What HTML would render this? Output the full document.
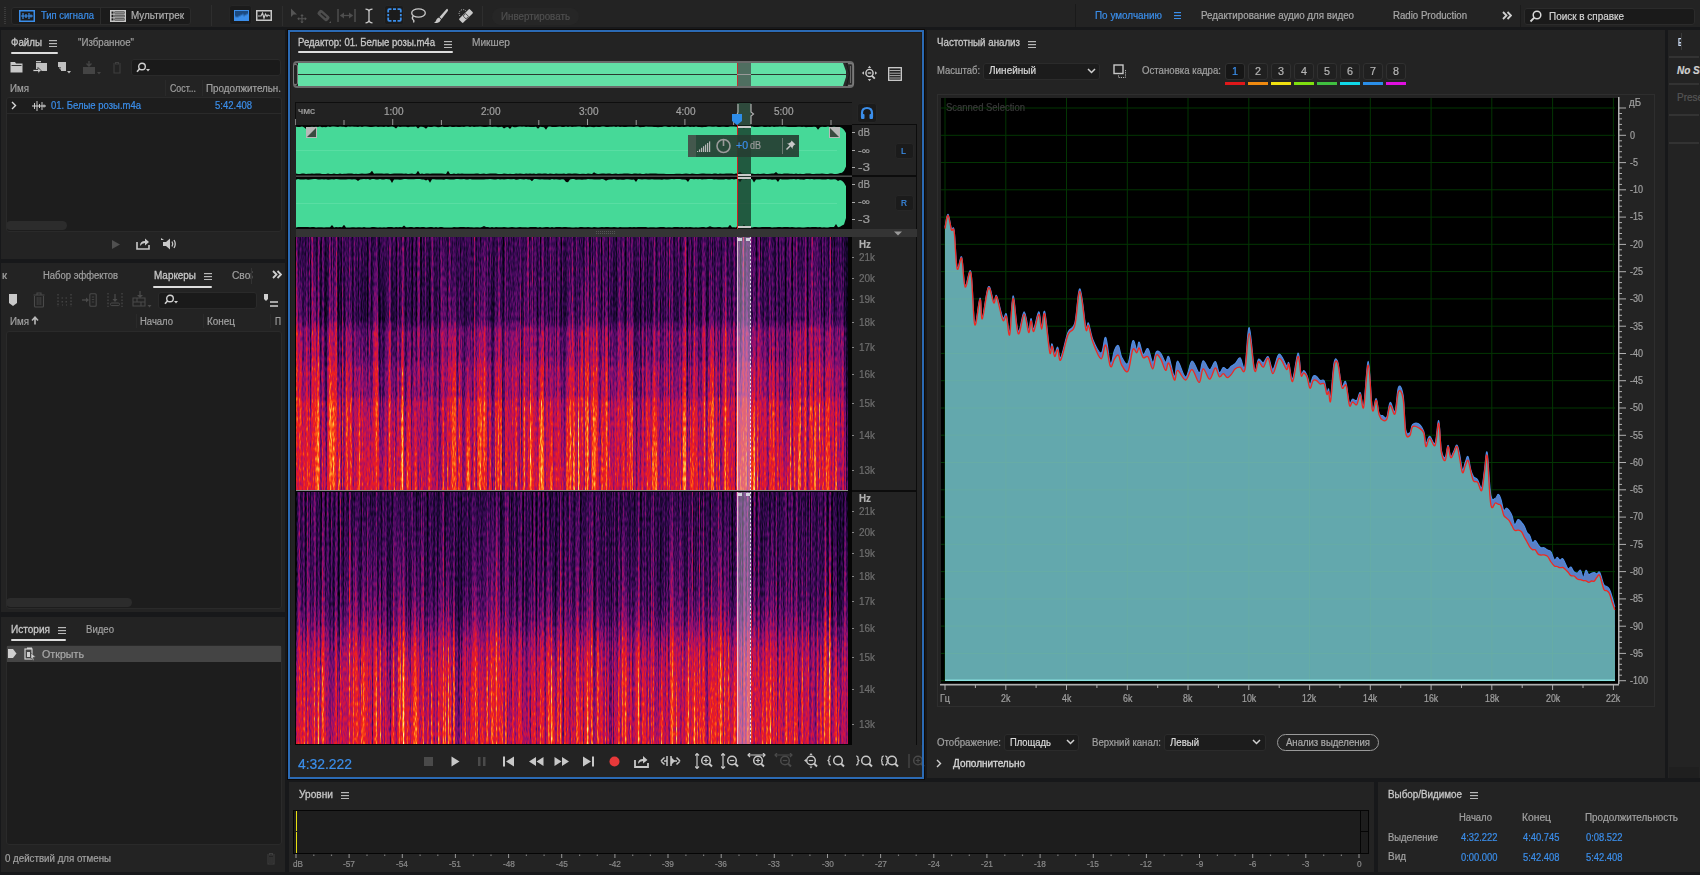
<!DOCTYPE html>
<html><head><meta charset="utf-8">
<style>
*{box-sizing:border-box;margin:0;padding:0}
html,body{width:1700px;height:875px;overflow:hidden;background:#17181a;font-family:"Liberation Sans",sans-serif;font-size:10px;color:#a9a9a9}
.a{position:absolute;display:block}
.t{position:absolute;white-space:nowrap;line-height:1;-webkit-text-stroke:0.2px currentColor}
</style></head><body>
<div class="a" style="left:0px;top:0px;width:1700px;height:27px;background:#232323;"></div>
<svg class="a" style="left:4px;top:7px;" width="3" height="18" viewBox="0 0 3 18"><rect x="0" y="0" width="2" height="1" fill="#3a3a3a"/><rect x="0" y="2" width="2" height="1" fill="#3a3a3a"/><rect x="0" y="4" width="2" height="1" fill="#3a3a3a"/><rect x="0" y="6" width="2" height="1" fill="#3a3a3a"/><rect x="0" y="8" width="2" height="1" fill="#3a3a3a"/><rect x="0" y="10" width="2" height="1" fill="#3a3a3a"/><rect x="0" y="12" width="2" height="1" fill="#3a3a3a"/><rect x="0" y="14" width="2" height="1" fill="#3a3a3a"/><rect x="0" y="16" width="2" height="1" fill="#3a3a3a"/></svg>
<div class="a" style="left:11px;top:7px;width:180px;height:18px;background:#1b1b1b;border:1px solid #2b2b2b;border-radius:3px"></div>
<div class="a" style="left:100px;top:7px;width:1px;height:18px;background:#2b2b2b;"></div>
<svg class="a" style="left:19px;top:10px;" width="16" height="12" viewBox="0 0 16 12"><rect x="0.75" y="0.75" width="14.5" height="10.5" fill="none" stroke="#3b8eea" stroke-width="1.5"/><path d="M2 6 H14 M4 3 v6 M7 4 v4 M10 3 v6 M12 4.5 v3" stroke="#3b8eea" stroke-width="1.2"/></svg>
<div class="t" style="left:41px;top:11.04px;font-size:10px;color:#3b8eea;transform:scaleX(0.9437);transform-origin:0 0;">Тип сигнала</div>
<svg class="a" style="left:110px;top:10px;" width="16" height="12" viewBox="0 0 16 12"><rect x="0.75" y="0.75" width="14.5" height="10.5" fill="none" stroke="#c8c8c8" stroke-width="1.5"/><path d="M1 4.2 H15 M1 7.8 H15 M4 1 V11" stroke="#c8c8c8" stroke-width="1"/><rect x="5" y="2" width="9" height="1.6" fill="#888"/><rect x="5" y="5.3" width="9" height="1.6" fill="#888"/><rect x="5" y="8.6" width="9" height="1.6" fill="#888"/></svg>
<div class="t" style="left:131px;top:11.04px;font-size:10px;color:#b0b0b0;transform:scaleX(0.9864);transform-origin:0 0;">Мультитрек</div>
<div class="a" style="left:211px;top:5px;width:1px;height:21px;background:#2e2e2e;"></div>
<div class="a" style="left:229px;top:5px;width:23px;height:20px;background:#1b1b1b;border:1px solid #262626;border-radius:3px"></div>
<svg class="a" style="left:234px;top:10px;" width="15" height="11" viewBox="0 0 15 11"><rect x="0" y="0" width="15" height="11" fill="#3b8eea"/><path d="M1 1 H14 V5 L13 3 L12 6 L11 4 L10 7 L9 3 L8 6 L7 4 L6 7 L5 5 L4 8 L3 6 L2 8 L1 5 Z" fill="#1c4a80"/></svg>
<svg class="a" style="left:256px;top:10px;" width="16" height="11" viewBox="0 0 16 11"><rect x="0.75" y="0.75" width="14.5" height="9.5" fill="none" stroke="#c8c8c8" stroke-width="1.5"/><path d="M2 6 H5 L6.5 3 L8 8 L9.5 4 L11 6.5 L12 5 L14 6" fill="none" stroke="#c8c8c8" stroke-width="1.2"/></svg>
<div class="a" style="left:282px;top:6px;width:1px;height:20px;background:#2e2e2e;"></div>
<svg class="a" style="left:290px;top:8px;" width="17" height="15" viewBox="0 0 17 15"><path d="M1 0.5 L1 9 L3.5 6.5 L7 6.5 Z" fill="#555"/><path d="M12 7 V14.5 M8.2 10.8 H15.8" stroke="#555" stroke-width="1.1" fill="none"/><path d="M12 6 L10.3 8 H13.7 Z M12 15.5 L10.3 13.5 H13.7 Z M7.2 10.8 L9.2 9.1 V12.5 Z M16.8 10.8 L14.8 9.1 V12.5 Z" fill="#555"/></svg>
<svg class="a" style="left:315px;top:8px;" width="17" height="16" viewBox="0 0 17 16"><rect x="2" y="4.5" width="13" height="6" rx="2" transform="rotate(42 8.5 7.5)" fill="#4e4e4e"/><rect x="5" y="6.8" width="7" height="1.4" transform="rotate(42 8.5 7.5)" fill="#232323"/><path d="M14 15 L16 13 V15 Z" fill="#555"/></svg>
<svg class="a" style="left:337px;top:8px;" width="19" height="15" viewBox="0 0 19 15"><path d="M1 1 V14 M18 1 V14" stroke="#4e4e4e" stroke-width="1.5" fill="none"/><path d="M3.5 7.5 H15.5" stroke="#4e4e4e" stroke-width="1.3"/><path d="M3 7.5 L7 4.5 V10.5 Z M16 7.5 L12 4.5 V10.5 Z" fill="#4e4e4e"/></svg>
<svg class="a" style="left:364px;top:8px;" width="10" height="16" viewBox="0 0 10 16"><path d="M1.5 1.2 Q5 1.2 5 4 V12 Q5 14.8 1.5 14.8 M8.5 1.2 Q5 1.2 5 4 M5 12 Q5 14.8 8.5 14.8" stroke="#c8c8c8" stroke-width="1.3" fill="none"/></svg>
<div class="a" style="left:384px;top:5px;width:20px;height:20px;background:#1b1b1b;border:1px solid #262626;border-radius:3px"></div>
<svg class="a" style="left:387px;top:8px;" width="15" height="14" viewBox="0 0 15 14"><path d="M1.2 4.5 V2.2 Q1.2 1.2 2.2 1.2 H4.5 M6 1.2 H9 M10.5 1.2 H12.8 Q13.8 1.2 13.8 2.2 V4.5 M13.8 6 V8.2 M13.8 9.5 V11.8 Q13.8 12.8 12.8 12.8 H10.5 M9 12.8 H6 M4.5 12.8 H2.2 Q1.2 12.8 1.2 11.8 V9.5 M1.2 8.2 V6" stroke="#3b8eea" stroke-width="1.8" fill="none"/></svg>
<svg class="a" style="left:410px;top:8px;" width="16" height="16" viewBox="0 0 16 16"><ellipse cx="8.5" cy="5" rx="6.8" ry="4.2" fill="none" stroke="#c8c8c8" stroke-width="1.3"/><path d="M3.3 8 Q1.5 10 3 11.5 Q4.5 12.5 3.5 14.5" stroke="#c8c8c8" stroke-width="1.3" fill="none"/></svg>
<svg class="a" style="left:433px;top:8px;" width="16" height="16" viewBox="0 0 16 16"><path d="M14.5 1 Q15.5 2 14.8 3 L8.5 11 L6.5 9 L13.2 1.5 Q14 0.5 14.5 1 Z" fill="#c8c8c8"/><path d="M6 9.5 L8 11.5 Q7 14.5 4 15 L1 15 Q3 13.5 3.5 11.5 Q4.3 9.8 6 9.5 Z" fill="#c8c8c8"/></svg>
<svg class="a" style="left:457px;top:8px;" width="17" height="16" viewBox="0 0 17 16"><rect x="1.5" y="5.2" width="15" height="5.6" rx="1" transform="rotate(-45 9 8)" fill="#c8c8c8"/><rect x="7" y="6" width="3.5" height="4" transform="rotate(-45 9 8)" fill="none" stroke="#232323" stroke-width="0.7"/><path d="M3 8 A3.8 3.8 0 1 1 9 3" fill="none" stroke="#c8c8c8" stroke-width="0.9" stroke-dasharray="1 1.2"/></svg>
<div class="a" style="left:482px;top:6px;width:1px;height:20px;background:#2e2e2e;"></div>
<div class="a" style="left:492px;top:8px;width:87px;height:17px;background:#262626;border-radius:9px"></div>
<div class="t" style="left:501px;top:11.54px;font-size:10px;color:#4f4f4f;transform:scaleX(0.9796);transform-origin:0 0;">Инвертировать</div>
<div class="a" style="left:1075px;top:4px;width:1.2px;height:23px;background:#1a1a1a;"></div>
<div class="t" style="left:1095px;top:11.04px;font-size:10px;color:#3b8eea;transform:scaleX(0.9907);transform-origin:0 0;">По умолчанию</div>
<svg class="a" style="left:1174px;top:12px;" width="7" height="7" viewBox="0 0 7 7"><g fill="#3b8eea"><rect x="0" y="0" width="7" height="1.2"/><rect x="0" y="3" width="7" height="1.2"/><rect x="0" y="6" width="7" height="1.2"/></g></svg>
<div class="t" style="left:1201px;top:11.04px;font-size:10px;color:#a8a8a8;transform:scaleX(0.9773);transform-origin:0 0;">Редактирование аудио для видео</div>
<div class="t" style="left:1393px;top:11.04px;font-size:10px;color:#a8a8a8;transform:scaleX(0.9646);transform-origin:0 0;">Radio Production</div>
<svg class="a" style="left:1502px;top:11px;" width="10" height="9" viewBox="0 0 10 9"><path d="M1 1 L4.5 4.5 L1 8 M5.5 1 L9 4.5 L5.5 8" stroke="#d0d0d0" stroke-width="1.8" fill="none"/></svg>
<div class="a" style="left:1520px;top:5px;width:1.2px;height:22px;background:#1b1b1b;"></div>
<div class="a" style="left:1524px;top:8px;width:171px;height:17px;background:#1a1a1a;border:1px solid #2b2b2b;border-radius:3px"></div>
<svg class="a" style="left:1529px;top:10px;" width="13" height="13" viewBox="0 0 13 13"><circle cx="8" cy="5" r="3.8" fill="none" stroke="#d8d8d8" stroke-width="1.5"/><path d="M5.3 7.7 L1.5 11.5" stroke="#d8d8d8" stroke-width="1.8"/></svg>
<div class="t" style="left:1549px;top:11.54px;font-size:10px;color:#d2d2d2;transform:scaleX(0.9937);transform-origin:0 0;">Поиск в справке</div>
<div class="a" style="left:1px;top:30px;width:284px;height:229px;background:#232323;"></div>
<div class="t" style="left:11px;top:37.53px;font-size:10px;color:#c6c6c6;-webkit-text-stroke:0.3px currentColor;transform:scaleX(0.9757);transform-origin:0 0;">Файлы</div>
<svg class="a" style="left:49px;top:40px;" width="8" height="7" viewBox="0 0 8 7"><g fill="#b8b8b8"><rect x="0" y="0" width="8" height="1.2"/><rect x="0" y="3" width="8" height="1.2"/><rect x="0" y="6" width="8" height="1.2"/></g></svg>
<div class="a" style="left:11px;top:52px;width:47px;height:2px;background:#dcdcdc;border-radius:1px"></div>
<div class="t" style="left:78px;top:37.53px;font-size:10px;color:#a0a0a0;transform:scaleX(0.9692);transform-origin:0 0;">"Избранное"</div>
<svg class="a" style="left:10px;top:61px;" width="13" height="12" viewBox="0 0 13 12"><path d="M0.5 1 H5 L6 2.5 H12.5 V11.5 H0.5 Z" fill="#c8c8c8"/><rect x="1.5" y="4" width="10" height="0.9" fill="#232323"/></svg>
<svg class="a" style="left:33px;top:61px;" width="15" height="14" viewBox="0 0 15 14"><rect x="3" y="2" width="11" height="8" fill="#c0c0c0"/><rect x="3" y="0" width="5" height="1.3" fill="#c0c0c0"/><path d="M0 8.5 H5 V6.5 L8 9.5 L5 12.5 V10.5 H0 Z" fill="#d0d0d0" stroke="#232323" stroke-width="0.8"/></svg>
<svg class="a" style="left:57px;top:61px;" width="15" height="14" viewBox="0 0 15 14"><path d="M1 1 H9 V10 H1 Z" fill="#c0c0c0"/><path d="M1 6 H4 V10 H1 Z" fill="#232323"/><path d="M2 7 L4 7 L4 9" stroke="#c0c0c0" fill="none"/><path d="M10 10 L14 10 L12 12.5 Z" fill="#c0c0c0"/></svg>
<svg class="a" style="left:82px;top:60px;" width="19" height="15" viewBox="0 0 19 15"><path d="M1 7 H13 V14 H1 Z" fill="#444"/><path d="M7 1 V6 M4.5 3.5 L7 6 L9.5 3.5" stroke="#444" stroke-width="1.4" fill="none"/><path d="M15 12 H19 L17 14.5 Z" fill="#444"/></svg>
<svg class="a" style="left:112px;top:61px;" width="10" height="13" viewBox="0 0 10 13"><path d="M1 3 H9 M3.5 3 V1.5 H6.5 V3 M2 4 V12 H8 V4" stroke="#3e3e3e" stroke-width="1.1" fill="none"/></svg>
<div class="a" style="left:131px;top:59px;width:150px;height:17px;background:#1a1a1a;border:1px solid #2a2a2a;border-radius:3px"></div>
<svg class="a" style="left:136px;top:62px;" width="14" height="11" viewBox="0 0 14 11"><circle cx="6" cy="4.5" r="3.3" fill="none" stroke="#d0d0d0" stroke-width="1.4"/><path d="M3.7 6.8 L1 9.8" stroke="#d0d0d0" stroke-width="1.6"/><path d="M10 7 L14 7 L12 9.5 Z" fill="#d0d0d0"/></svg>
<div class="t" style="left:10px;top:83.53px;font-size:10px;color:#a0a0a0;transform:scaleX(0.9755);transform-origin:0 0;">Имя</div>
<div class="a" style="left:165px;top:80px;width:1px;height:16px;background:#2a2a2a;"></div>
<div class="t" style="left:170px;top:83.53px;font-size:10px;color:#a0a0a0;transform:scaleX(0.8787);transform-origin:0 0;">Сост...</div>
<div class="a" style="left:202px;top:80px;width:1px;height:16px;background:#2a2a2a;"></div>
<div class="t" style="left:206px;top:83.53px;font-size:10px;color:#a0a0a0;transform:scaleX(0.9814);transform-origin:0 0;">Продолжительн.</div>
<div class="a" style="left:6px;top:97px;width:276px;height:135px;background:#1d1d1d;border:1px solid #2a2a2a;border-radius:3px"></div>
<div class="a" style="left:7px;top:113px;width:274px;height:1px;background:#2a2a2a;"></div>
<svg class="a" style="left:11px;top:101px;" width="6" height="9" viewBox="0 0 6 9"><path d="M1 1 L4.5 4.5 L1 8" stroke="#d8d8d8" stroke-width="1.4" fill="none"/></svg>
<svg class="a" style="left:32px;top:100px;" width="14" height="12" viewBox="0 0 14 12"><path d="M0 6 H14" stroke="#d8d8d8" stroke-width="1"/><path d="M2.5 3 V9 M5 1 V11 M7.5 4 V8 M10 2 V10 M12 4.5 V7.5" stroke="#d8d8d8" stroke-width="0.9"/></svg>
<div class="t" style="left:51px;top:101.03px;font-size:10px;color:#3b8eea;transform:scaleX(0.9489);transform-origin:0 0;">01. Белые розы.m4a</div>
<div class="t" style="left:215px;top:101.03px;font-size:10px;color:#3b8eea;transform:scaleX(0.9505);transform-origin:0 0;">5:42.408</div>
<div class="a" style="left:6px;top:221px;width:61px;height:9px;background:#2c2c2c;border-radius:5px"></div>
<svg class="a" style="left:111px;top:239px;" width="10" height="11" viewBox="0 0 10 11"><path d="M1 1 L9 5.5 L1 10 Z" fill="#505050"/></svg>
<svg class="a" style="left:136px;top:237px;" width="14" height="13" viewBox="0 0 14 13"><path d="M1 5 V12 H13 V8" stroke="#c8c8c8" stroke-width="1.6" fill="none"/><path d="M4 9 Q4 4 9 4 V1.5 L13 5 L9 8.5 V6 Q6 6 4 9 Z" fill="#c8c8c8"/></svg>
<svg class="a" style="left:160px;top:237px;" width="19" height="14" viewBox="0 0 19 14"><path d="M1 1 L4 3 L1 3 Z" fill="#c8c8c8"/><path d="M3 5 H6 L10 1.5 V12.5 L6 9 H3 Z" fill="#c8c8c8"/><path d="M12 4.5 Q13.5 7 12 9.5 M14 3 Q16.5 7 14 11" stroke="#c8c8c8" stroke-width="1.3" fill="none"/></svg>
<div class="a" style="left:1px;top:263px;width:284px;height:349px;background:#232323;"></div>
<div class="t" style="left:2px;top:270.54px;font-size:10px;color:#a0a0a0;transform:scaleX(1.1429);transform-origin:0 0;">к</div>
<div class="t" style="left:43px;top:270.54px;font-size:10px;color:#a0a0a0;transform:scaleX(0.9450);transform-origin:0 0;">Набор эффектов</div>
<div class="t" style="left:154px;top:270.54px;font-size:10px;color:#c6c6c6;-webkit-text-stroke:0.3px currentColor;transform:scaleX(0.9914);transform-origin:0 0;">Маркеры</div>
<svg class="a" style="left:204px;top:273px;" width="8" height="7" viewBox="0 0 8 7"><g fill="#b8b8b8"><rect x="0" y="0" width="8" height="1.2"/><rect x="0" y="3" width="8" height="1.2"/><rect x="0" y="6" width="8" height="1.2"/></g></svg>
<div class="a" style="left:153px;top:286px;width:59px;height:2px;background:#dcdcdc;border-radius:1px"></div>
<div class="t" style="left:232px;top:270.54px;font-size:10px;color:#a0a0a0;transform:scaleX(1.0183);transform-origin:0 0;width:20px;overflow:hidden;">Свой</div>
<div class="a" style="left:251px;top:268px;width:1px;height:16px;background:#333;"></div>
<svg class="a" style="left:272px;top:270px;" width="10" height="9" viewBox="0 0 10 9"><path d="M1 1 L4.5 4.5 L1 8 M5.5 1 L9 4.5 L5.5 8" stroke="#d0d0d0" stroke-width="1.8" fill="none"/></svg>
<svg class="a" style="left:8px;top:293px;" width="10" height="14" viewBox="0 0 10 14"><path d="M1 1 H9 V10 L5 13 L1 10 Z" fill="#c8c8c8"/></svg>
<svg class="a" style="left:33px;top:292px;" width="12" height="16" viewBox="0 0 12 16"><path d="M0.5 3 H11.5 M4 3 V1 H8 V3" stroke="#4a4a4a" stroke-width="1.1" fill="none"/><path d="M1.5 4 V14 Q1.5 15 2.5 15 H9.5 Q10.5 15 10.5 14 V4" stroke="#4a4a4a" stroke-width="1.1" fill="none"/><path d="M4.2 5 V13 M6 5 V13 M7.8 5 V13" stroke="#4a4a4a" stroke-width="0.8"/></svg>
<svg class="a" style="left:57px;top:294px;" width="15" height="13" viewBox="0 0 15 13"><path d="M1 0 V13 M14 0 V13" stroke="#4a4a4a" stroke-width="1.2" stroke-dasharray="1.6 1.6"/><path d="M4.5 4 H6 M8.5 4 H10 M5.2 7 V8.5 M9.2 7 V8.5 M5 11 H6 M9 11 H10" stroke="#4a4a4a" stroke-width="1.2"/></svg>
<svg class="a" style="left:82px;top:293px;" width="15" height="14" viewBox="0 0 15 14"><path d="M0 7 H6" stroke="#4a4a4a" stroke-width="1.4"/><path d="M7 7 L4 4.5 V9.5 Z" fill="#4a4a4a"/><rect x="7.8" y="0.8" width="6.4" height="12.4" rx="1" fill="none" stroke="#4a4a4a" stroke-width="1.1"/><path d="M9.8 4 H12.2 M9.8 6.5 H12.2 M9.8 9 H12.2" stroke="#4a4a4a" stroke-width="0.8"/></svg>
<svg class="a" style="left:107px;top:293px;" width="16" height="14" viewBox="0 0 16 14"><path d="M1 0 V14 M15 0 V14" stroke="#4a4a4a" stroke-width="1.2" stroke-dasharray="1.6 1.6"/><path d="M8 1 V8" stroke="#4a4a4a" stroke-width="1.2"/><path d="M8 9 L5.5 6 H10.5 Z" fill="#4a4a4a"/><rect x="3.5" y="10" width="9" height="2.6" rx="1.2" fill="none" stroke="#4a4a4a" stroke-width="1"/></svg>
<svg class="a" style="left:132px;top:291px;" width="20" height="17" viewBox="0 0 20 17"><path d="M1 7 H13 V15 H1 Z M1 11 H13 M5 7 V11 M9 11 V15" stroke="#4a4a4a" stroke-width="1.1" fill="none"/><path d="M8 0 V6" stroke="#4a4a4a" stroke-width="1.3"/><path d="M8 7 L5 4 H11 Z" fill="#4a4a4a"/><path d="M15.5 14 H19.5 L17.5 16.5 Z" fill="#4a4a4a"/></svg>
<div class="a" style="left:158px;top:292px;width:99px;height:17px;background:#1a1a1a;border:1px solid #2a2a2a;border-radius:3px"></div>
<svg class="a" style="left:164px;top:294px;" width="14" height="11" viewBox="0 0 14 11"><circle cx="6" cy="4.5" r="3.3" fill="none" stroke="#d0d0d0" stroke-width="1.4"/><path d="M3.7 6.8 L1 9.8" stroke="#d0d0d0" stroke-width="1.6"/><path d="M10 7 L14 7 L12 9.5 Z" fill="#d0d0d0"/></svg>
<svg class="a" style="left:263px;top:293px;" width="16" height="15" viewBox="0 0 16 15"><path d="M1 1 H5 V6 L3 8 L1 6 Z" fill="#d0d0d0"/><path d="M7 9 H15 M7 13 H15" stroke="#d0d0d0" stroke-width="1.6"/></svg>
<div class="t" style="left:10px;top:316.54px;font-size:10px;color:#a0a0a0;transform:scaleX(0.9755);transform-origin:0 0;">Имя</div>
<svg class="a" style="left:31px;top:316px;" width="8" height="9" viewBox="0 0 8 9"><path d="M4 8.5 V2 M1 4.5 L4 1.2 L7 4.5" stroke="#b8b8b8" stroke-width="1.6" fill="none"/></svg>
<div class="a" style="left:136px;top:314px;width:1px;height:14px;background:#2a2a2a;"></div>
<div class="t" style="left:140px;top:316.54px;font-size:10px;color:#a0a0a0;transform:scaleX(0.9470);transform-origin:0 0;">Начало</div>
<div class="a" style="left:203px;top:314px;width:1px;height:14px;background:#2a2a2a;"></div>
<div class="t" style="left:207px;top:316.54px;font-size:10px;color:#a0a0a0;transform:scaleX(0.9930);transform-origin:0 0;">Конец</div>
<div class="a" style="left:270px;top:314px;width:1px;height:14px;background:#2a2a2a;"></div>
<div class="t" style="left:275px;top:316.54px;font-size:10px;color:#a0a0a0;transform:scaleX(0.8348);transform-origin:0 0;">П</div>
<div class="a" style="left:6px;top:331px;width:276px;height:278px;background:#1d1d1d;border:1px solid #2a2a2a;border-radius:3px"></div>
<div class="a" style="left:6px;top:598px;width:126px;height:9px;background:#2c2c2c;border-radius:5px"></div>
<div class="a" style="left:1px;top:617px;width:284px;height:255px;background:#232323;"></div>
<div class="t" style="left:11px;top:624.53px;font-size:10px;color:#c6c6c6;-webkit-text-stroke:0.3px currentColor;transform:scaleX(1.0057);transform-origin:0 0;">История</div>
<svg class="a" style="left:58px;top:627px;" width="8" height="7" viewBox="0 0 8 7"><g fill="#b8b8b8"><rect x="0" y="0" width="8" height="1.2"/><rect x="0" y="3" width="8" height="1.2"/><rect x="0" y="6" width="8" height="1.2"/></g></svg>
<div class="a" style="left:11px;top:639px;width:55px;height:2px;background:#dcdcdc;border-radius:1px"></div>
<div class="t" style="left:86px;top:624.53px;font-size:10px;color:#a0a0a0;transform:scaleX(0.9584);transform-origin:0 0;">Видео</div>
<div class="a" style="left:6px;top:645px;width:276px;height:200px;background:#1d1d1d;border:1px solid #2a2a2a;border-radius:3px"></div>
<div class="a" style="left:7px;top:646px;width:274px;height:16px;background:#444444;"></div>
<svg class="a" style="left:8px;top:649px;" width="9" height="9" viewBox="0 0 9 9"><path d="M0 0 H5 L8.5 4.5 L5 9 H0 Z" fill="#cfcfcf"/></svg>
<svg class="a" style="left:24px;top:647px;" width="12" height="14" viewBox="0 0 12 14"><rect x="1" y="2" width="7" height="10" fill="none" stroke="#d0d0d0" stroke-width="1.2"/><rect x="3" y="0.5" width="5" height="1.5" fill="#d0d0d0"/><rect x="3" y="5" width="3" height="5" fill="#d0d0d0"/><path d="M7 6 L11.5 10 L9 10.5 L10 13 L9 13.5 L8 11 L7 12 Z" fill="#d0d0d0" stroke="#444" stroke-width="0.5"/></svg>
<div class="t" style="left:42px;top:649.53px;font-size:10px;color:#a8a8a8;transform:scaleX(1.0694);transform-origin:0 0;">Открыть</div>
<div class="t" style="left:5px;top:853.53px;font-size:10px;color:#a0a0a0;transform:scaleX(0.9716);transform-origin:0 0;">0 действий для отмены</div>
<svg class="a" style="left:266px;top:852px;" width="10" height="13" viewBox="0 0 10 13"><path d="M1 3 H9 M3.5 3 V1.5 H6.5 V3 M2 4 V12 H8 V4 M4 5 V11 M6 5 V11" stroke="#3e3e3e" stroke-width="1.1" fill="none"/></svg>
<div class="a" style="left:287px;top:29px;width:638px;height:751px;background:#0e0a07;"></div>
<div class="a" style="left:288px;top:30px;width:636px;height:749px;background:#1f1b18;border:2px solid #2b6ab4"></div>
<div class="a" style="left:291px;top:33px;width:630px;height:743px;background:#232323;"></div>
<div class="t" style="left:298px;top:38.03px;font-size:10px;color:#c6c6c6;-webkit-text-stroke:0.3px currentColor;transform:scaleX(0.9550);transform-origin:0 0;">Редактор: 01. Белые розы.m4a</div>
<svg class="a" style="left:444px;top:40.5px;" width="8" height="7" viewBox="0 0 8 7"><g fill="#b8b8b8"><rect x="0" y="0" width="8" height="1.2"/><rect x="0" y="3" width="8" height="1.2"/><rect x="0" y="6" width="8" height="1.2"/></g></svg>
<div class="a" style="left:298px;top:51px;width:155px;height:2px;background:#dcdcdc;border-radius:1px"></div>
<div class="t" style="left:472px;top:38.03px;font-size:10px;color:#a0a0a0;transform:scaleX(1.0150);transform-origin:0 0;">Микшер</div>
<div class="a" style="left:293px;top:61px;width:561px;height:27px;background:#6a6a6a;border-radius:4px"></div>
<div class="a" style="left:295px;top:63px;width:557px;height:23px;background:#1e1e1e;border-radius:3px"></div>
<div class="a" style="left:298px;top:63px;width:548px;height:23px;background:#62e0a6;"></div>
<div class="a" style="left:298px;top:73.5px;width:548px;height:1.5px;background:#2a3a30;"></div>
<div class="a" style="left:293px;top:64px;width:5px;height:21px;background:#232323;border:1px solid #777;border-radius:2px"></div>
<div class="a" style="left:846px;top:63px;width:6px;height:23px;background:#2a2a2a;"></div>
<svg class="a" style="left:843px;top:62px;" width="12" height="25" viewBox="0 0 12 25"><path d="M0 1 H3 L6 12 L3 24 H0 L4 12 Z" fill="#2a2a2a"/><path d="M3.5 1 L6.5 12 L3.5 24" stroke="#1a1a1a" stroke-width="1" fill="none"/><path d="M5 1.5 H8 Q10.5 1.5 10.5 4 V21 Q10.5 23.5 8 23.5 H5" stroke="#7a7a7a" stroke-width="1.3" fill="none"/><path d="M7.5 4 V21" stroke="#6a6a6a" stroke-width="1"/></svg>
<div class="a" style="left:737px;top:63px;width:14px;height:23px;background:#4f6e60;"></div>
<div class="a" style="left:737px;top:63px;width:1px;height:23px;background:#c03030;"></div>
<div class="a" style="left:737px;top:73.5px;width:14px;height:1.5px;background:#9a9a9a;"></div>
<svg class="a" style="left:861px;top:65px;" width="17" height="18" viewBox="0 0 17 18"><circle cx="8.5" cy="8" r="3.6" fill="none" stroke="#d0d0d0" stroke-width="1.4"/><path d="M11 10.8 L13.8 13.6" stroke="#d0d0d0" stroke-width="1.8"/><path d="M8.5 0.8 L6.8 3 H10.2 Z M8.5 16.2 L6.8 14 H10.2 Z M0.8 8 L3 6.3 V9.7 Z M16.2 8 L14 6.3 V9.7 Z" fill="#c0c0c0"/><path d="M6.8 8 H10.2" stroke="#d0d0d0" stroke-width="1.3"/></svg>
<svg class="a" style="left:888px;top:67px;" width="14" height="14" viewBox="0 0 14 14"><rect x="0.7" y="0.7" width="12.6" height="12.6" fill="none" stroke="#d0d0d0" stroke-width="1.3"/><path d="M1.5 3.5 H12.5 M1.5 6.2 H12.5 M1.5 8.6 H12.5 M1.5 11 H12.5" stroke="#a8a8a8" stroke-width="1"/></svg>
<div class="a" style="left:295px;top:102px;width:557px;height:23px;background:#222222;border-top:1px solid #0e0e0e;border-left:1px solid #0e0e0e"></div>
<svg class="a" style="left:295px;top:102px;" width="557" height="23" viewBox="0 0 557 23"><rect x="-0.2" y="17" width="1" height="6" fill="#9a9a9a"/><rect x="48.5" y="18" width="1" height="5" fill="#9a9a9a"/><rect x="97.2" y="17" width="1" height="6" fill="#9a9a9a"/><rect x="145.9" y="18" width="1" height="5" fill="#9a9a9a"/><rect x="194.6" y="17" width="1" height="6" fill="#9a9a9a"/><rect x="243.3" y="18" width="1" height="5" fill="#9a9a9a"/><rect x="292.0" y="17" width="1" height="6" fill="#9a9a9a"/><rect x="340.7" y="18" width="1" height="5" fill="#9a9a9a"/><rect x="389.4" y="17" width="1" height="6" fill="#9a9a9a"/><rect x="438.1" y="18" width="1" height="5" fill="#9a9a9a"/><rect x="486.8" y="17" width="1" height="6" fill="#9a9a9a"/><rect x="535.5" y="18" width="1" height="5" fill="#9a9a9a"/></svg>
<div class="t" style="left:298px;top:107.38px;font-size:9px;color:#a0a0a0;transform:scaleX(1.1056);transform-origin:0 0;">чмс</div>
<div class="t" style="left:383.9px;top:106.53px;font-size:10px;color:#a0a0a0;transform:scaleX(1.0019);transform-origin:0 0;">1:00</div>
<div class="t" style="left:481.3px;top:106.53px;font-size:10px;color:#a0a0a0;transform:scaleX(1.0019);transform-origin:0 0;">2:00</div>
<div class="t" style="left:578.7px;top:106.53px;font-size:10px;color:#a0a0a0;transform:scaleX(1.0019);transform-origin:0 0;">3:00</div>
<div class="t" style="left:676.1px;top:106.53px;font-size:10px;color:#a0a0a0;transform:scaleX(1.0019);transform-origin:0 0;">4:00</div>
<div class="t" style="left:773.5px;top:106.53px;font-size:10px;color:#a0a0a0;transform:scaleX(1.0019);transform-origin:0 0;">5:00</div>
<div class="a" style="left:737px;top:103px;width:14px;height:22px;background:#2e4a3c;"></div>
<svg class="a" style="left:732px;top:103px;" width="24" height="22" viewBox="0 0 24 22"><path d="M6 1 V9 Q6 11 4 12 M19 1 V9 L21.5 11 L19 13 V21" stroke="#b0b0b0" stroke-width="1.2" fill="none"/><path d="M0 11 H10 V18 L5 22 L0 18 Z" fill="#2e8de8"/></svg>
<div class="a" style="left:857px;top:103px;width:20px;height:20px;background:#1b1b1b;border:1px solid #262626;border-radius:3px"></div>
<svg class="a" style="left:860px;top:106px;" width="14" height="14" viewBox="0 0 14 14"><path d="M2 11 V7 Q2 2 7 2 Q12 2 12 7 V11" stroke="#3b8eea" stroke-width="2.2" fill="none"/><rect x="1" y="8" width="3.5" height="5" rx="1" fill="#3b8eea"/><rect x="9.5" y="8" width="3.5" height="5" rx="1" fill="#3b8eea"/></svg>
<svg class="a" style="left:296px;top:125px;" width="556" height="104" viewBox="0 0 556 104"><rect x="0" y="0" width="556" height="104" fill="#050505"/><path d="M0 1.8 L2 1.9 L4 1.9 L6 1.6 L8 2.2 L10 3.9 L12 3.8 L14 1.9 L16 1.8 L18 2.1 L20 1.7 L22 2.1 L24 1.5 L26 2.2 L28 2.0 L30 2.2 L32 1.6 L34 1.9 L36 1.6 L38 1.6 L40 1.7 L42 2.1 L44 1.6 L46 1.7 L48 1.7 L50 2.2 L52 1.6 L54 1.7 L56 1.6 L58 1.8 L60 1.7 L62 1.9 L64 1.5 L66 1.9 L68 1.5 L70 1.6 L72 1.8 L74 2.0 L76 2.1 L78 1.8 L80 1.6 L82 2.0 L84 1.7 L86 1.8 L88 1.9 L90 1.6 L92 2.0 L94 1.8 L96 1.5 L98 2.0 L100 3.4 L102 1.6 L104 2.1 L106 1.8 L108 1.8 L110 1.8 L112 2.2 L114 1.7 L116 1.8 L118 1.8 L120 1.5 L122 3.4 L124 1.7 L126 1.8 L128 2.2 L130 3.8 L132 1.7 L134 1.9 L136 2.1 L138 1.6 L140 1.8 L142 2.2 L144 2.0 L146 1.6 L148 1.9 L150 2.1 L152 1.9 L154 1.5 L156 2.1 L158 2.0 L160 1.8 L162 1.9 L164 1.9 L166 1.8 L168 2.1 L170 1.6 L172 1.5 L174 2.1 L176 1.5 L178 2.1 L180 1.8 L182 1.7 L184 1.6 L186 1.7 L188 1.9 L190 1.9 L192 1.8 L194 1.6 L196 1.9 L198 1.7 L200 1.7 L202 2.2 L204 2.0 L206 1.8 L208 3.5 L210 2.2 L212 1.9 L214 4.0 L216 1.6 L218 2.2 L220 2.2 L222 1.8 L224 1.5 L226 1.8 L228 1.6 L230 2.1 L232 1.8 L234 2.1 L236 2.0 L238 2.1 L240 1.8 L242 3.7 L244 1.7 L246 2.0 L248 2.2 L250 4.7 L252 1.8 L254 1.6 L256 1.9 L258 1.9 L260 2.0 L262 1.8 L264 1.5 L266 1.9 L268 1.9 L270 1.5 L272 2.0 L274 1.5 L276 2.1 L278 1.7 L280 1.8 L282 1.6 L284 1.5 L286 2.0 L288 1.8 L290 2.2 L292 2.1 L294 1.7 L296 1.9 L298 2.2 L300 1.7 L302 1.9 L304 1.9 L306 1.6 L308 1.6 L310 2.0 L312 2.1 L314 1.7 L316 1.8 L318 1.6 L320 2.0 L322 1.6 L324 2.0 L326 1.8 L328 2.0 L330 2.1 L332 1.7 L334 1.7 L336 1.8 L338 2.1 L340 1.6 L342 1.5 L344 2.2 L346 1.9 L348 2.0 L350 1.6 L352 1.7 L354 1.8 L356 1.8 L358 2.1 L360 2.1 L362 2.2 L364 2.1 L366 2.0 L368 1.6 L370 1.5 L372 2.0 L374 1.9 L376 1.6 L378 1.9 L380 1.6 L382 2.1 L384 2.1 L386 1.8 L388 2.1 L390 1.7 L392 1.5 L394 2.0 L396 1.7 L398 1.9 L400 1.6 L402 2.1 L404 2.0 L406 2.2 L408 2.1 L410 2.1 L412 1.6 L414 1.6 L416 1.8 L418 1.8 L420 1.5 L422 1.9 L424 2.1 L426 1.8 L428 1.8 L430 2.0 L432 2.0 L434 1.6 L436 1.6 L438 1.6 L440 1.8 L442 1.9 L444 1.8 L446 2.0 L448 3.8 L450 1.6 L452 2.1 L454 2.1 L456 1.6 L458 2.0 L460 1.9 L462 1.9 L464 1.8 L466 1.6 L468 1.9 L470 2.1 L472 1.7 L474 2.1 L476 1.5 L478 2.0 L480 1.8 L482 1.8 L484 1.6 L486 1.7 L488 1.6 L490 1.8 L492 2.0 L494 2.1 L496 2.1 L498 2.1 L500 2.1 L502 1.7 L504 1.8 L506 2.0 L508 1.8 L510 2.2 L512 2.1 L514 2.1 L516 1.9 L518 1.7 L520 2.1 L522 4.8 L524 2.2 L526 1.7 L528 2.1 L530 2.1 L532 1.6 L534 2.0 L536 2.0 L538 1.8 L540 2.0 L542 2.1 L544 2.0 L546 3.0 L548 4.8 L550 8.1 L550 41.5 L548 45.7 L546 47.7 L544 47.9 L542 48.7 L540 48.9 L538 48.9 L536 48.6 L534 48.5 L532 49.0 L530 48.9 L528 48.7 L526 48.5 L524 48.7 L522 48.8 L520 48.8 L518 49.0 L516 49.0 L514 48.5 L512 48.6 L510 48.5 L508 49.0 L506 48.9 L504 48.8 L502 49.0 L500 48.6 L498 49.0 L496 48.7 L494 48.7 L492 48.4 L490 48.6 L488 48.6 L486 49.0 L484 48.8 L482 48.8 L480 47.0 L478 48.6 L476 48.4 L474 48.7 L472 48.9 L470 48.9 L468 48.5 L466 48.7 L464 48.9 L462 48.8 L460 49.0 L458 48.9 L456 48.4 L454 48.8 L452 48.9 L450 48.7 L448 48.8 L446 48.5 L444 46.8 L442 48.5 L440 48.4 L438 48.9 L436 48.5 L434 48.6 L432 48.5 L430 48.4 L428 48.8 L426 48.8 L424 48.6 L422 49.0 L420 48.6 L418 48.5 L416 48.9 L414 48.7 L412 48.8 L410 48.7 L408 48.4 L406 48.5 L404 48.7 L402 49.0 L400 49.0 L398 48.8 L396 48.5 L394 48.9 L392 48.8 L390 48.6 L388 48.7 L386 49.0 L384 48.7 L382 48.8 L380 48.8 L378 48.9 L376 48.9 L374 49.0 L372 49.0 L370 48.9 L368 48.8 L366 48.8 L364 48.7 L362 48.7 L360 48.5 L358 48.5 L356 48.6 L354 48.4 L352 48.7 L350 48.6 L348 48.9 L346 48.9 L344 48.5 L342 48.7 L340 48.5 L338 48.5 L336 48.9 L334 48.8 L332 48.4 L330 48.5 L328 48.4 L326 48.8 L324 48.8 L322 49.0 L320 48.5 L318 48.7 L316 48.9 L314 48.6 L312 48.6 L310 48.7 L308 48.5 L306 48.6 L304 48.8 L302 48.9 L300 48.6 L298 47.3 L296 48.9 L294 48.7 L292 48.6 L290 48.9 L288 48.7 L286 48.8 L284 48.9 L282 48.7 L280 48.5 L278 48.4 L276 48.7 L274 48.4 L272 48.5 L270 49.0 L268 48.6 L266 48.8 L264 48.7 L262 48.7 L260 48.4 L258 49.0 L256 48.7 L254 48.5 L252 48.9 L250 48.6 L248 48.6 L246 48.7 L244 48.6 L242 48.6 L240 49.0 L238 48.5 L236 48.8 L234 48.5 L232 48.7 L230 48.5 L228 49.0 L226 48.8 L224 48.5 L222 48.7 L220 48.5 L218 48.9 L216 48.9 L214 48.7 L212 48.9 L210 48.7 L208 48.6 L206 48.9 L204 48.9 L202 48.9 L200 48.4 L198 48.5 L196 48.6 L194 48.6 L192 48.8 L190 48.9 L188 48.6 L186 48.8 L184 49.0 L182 48.6 L180 48.5 L178 48.7 L176 48.8 L174 48.7 L172 48.7 L170 48.7 L168 48.7 L166 48.5 L164 48.7 L162 48.6 L160 48.9 L158 48.6 L156 48.9 L154 48.9 L152 45.7 L150 49.0 L148 48.8 L146 48.4 L144 48.6 L142 48.6 L140 48.5 L138 48.6 L136 48.4 L134 48.8 L132 48.6 L130 48.6 L128 48.9 L126 48.6 L124 49.0 L122 45.7 L120 48.7 L118 49.0 L116 48.5 L114 48.8 L112 48.9 L110 48.5 L108 48.8 L106 48.5 L104 48.6 L102 48.6 L100 48.6 L98 48.6 L96 48.7 L94 48.9 L92 48.6 L90 48.4 L88 48.7 L86 48.5 L84 48.5 L82 48.5 L80 48.6 L78 48.8 L76 45.8 L74 47.9 L72 48.4 L70 48.7 L68 48.7 L66 48.4 L64 48.7 L62 48.9 L60 48.8 L58 49.0 L56 48.5 L54 48.6 L52 48.5 L50 48.7 L48 48.8 L46 48.9 L44 48.5 L42 48.9 L40 48.9 L38 48.4 L36 48.9 L34 48.9 L32 48.5 L30 48.9 L28 48.9 L26 49.0 L24 48.5 L22 48.4 L20 48.5 L18 48.8 L16 48.4 L14 48.7 L12 48.7 L10 49.0 L8 48.6 L6 48.6 L4 48.9 L2 48.9 L0 48.4 Z" fill="#46d998" transform="translate(0 0)"/><rect x="0" y="25" width="541" height="0.6" fill="#7fe8b8" opacity="0.6"/><rect x="0" y="50.6" width="556" height="1.1" fill="#6a6a6a"/><path d="M0 2.2 L2 1.6 L4 2.1 L6 1.9 L8 2.0 L10 1.7 L12 2.2 L14 2.0 L16 1.7 L18 1.6 L20 1.5 L22 1.9 L24 2.1 L26 1.7 L28 2.0 L30 1.7 L32 2.2 L34 2.1 L36 1.7 L38 2.1 L40 1.5 L42 1.8 L44 1.9 L46 2.0 L48 2.1 L50 1.9 L52 1.8 L54 1.7 L56 2.1 L58 1.8 L60 2.1 L62 3.6 L64 2.0 L66 1.7 L68 1.6 L70 1.8 L72 1.5 L74 2.2 L76 1.6 L78 1.5 L80 2.1 L82 2.1 L84 1.6 L86 2.1 L88 2.1 L90 1.6 L92 1.7 L94 1.9 L96 5.4 L98 2.1 L100 1.9 L102 1.9 L104 2.2 L106 2.0 L108 1.5 L110 1.6 L112 1.8 L114 1.7 L116 1.8 L118 1.7 L120 1.6 L122 1.6 L124 1.5 L126 1.9 L128 2.0 L130 2.9 L132 2.0 L134 5.2 L136 1.7 L138 1.8 L140 2.1 L142 2.1 L144 2.0 L146 1.9 L148 2.2 L150 1.6 L152 1.7 L154 2.0 L156 2.0 L158 2.1 L160 1.6 L162 1.6 L164 1.8 L166 1.7 L168 1.6 L170 2.1 L172 2.0 L174 1.5 L176 2.1 L178 2.0 L180 2.1 L182 1.9 L184 1.9 L186 1.9 L188 2.1 L190 1.7 L192 1.7 L194 1.6 L196 1.8 L198 2.1 L200 2.1 L202 1.5 L204 2.1 L206 1.7 L208 2.0 L210 1.8 L212 1.6 L214 1.7 L216 1.7 L218 1.6 L220 2.2 L222 1.9 L224 1.5 L226 1.8 L228 1.9 L230 1.6 L232 1.9 L234 1.9 L236 3.7 L238 1.6 L240 1.6 L242 1.7 L244 1.9 L246 1.7 L248 2.0 L250 2.0 L252 2.0 L254 2.2 L256 1.6 L258 1.9 L260 1.8 L262 2.1 L264 2.2 L266 1.8 L268 2.0 L270 4.4 L272 4.7 L274 2.1 L276 1.6 L278 1.5 L280 2.2 L282 2.0 L284 2.1 L286 2.2 L288 2.1 L290 2.0 L292 1.6 L294 1.7 L296 1.7 L298 2.0 L300 2.0 L302 2.0 L304 2.0 L306 1.5 L308 1.9 L310 3.3 L312 2.2 L314 1.9 L316 2.1 L318 1.6 L320 2.0 L322 2.2 L324 2.0 L326 2.2 L328 2.2 L330 1.8 L332 1.8 L334 1.9 L336 2.2 L338 2.0 L340 4.6 L342 1.6 L344 1.8 L346 2.1 L348 1.7 L350 1.8 L352 1.9 L354 2.0 L356 1.7 L358 1.9 L360 2.1 L362 2.0 L364 2.0 L366 2.2 L368 1.7 L370 1.9 L372 2.0 L374 1.7 L376 1.6 L378 1.8 L380 1.6 L382 1.5 L384 1.5 L386 1.9 L388 2.1 L390 2.2 L392 4.6 L394 1.6 L396 1.5 L398 1.8 L400 1.6 L402 1.7 L404 1.6 L406 2.1 L408 1.8 L410 1.7 L412 1.5 L414 1.6 L416 1.6 L418 2.0 L420 1.8 L422 2.0 L424 2.0 L426 2.0 L428 1.9 L430 1.6 L432 2.0 L434 1.9 L436 1.6 L438 2.0 L440 1.6 L442 1.8 L444 4.7 L446 1.7 L448 1.6 L450 1.9 L452 1.6 L454 1.7 L456 1.5 L458 5.0 L460 1.9 L462 2.0 L464 1.9 L466 1.5 L468 1.5 L470 1.6 L472 2.1 L474 1.8 L476 2.2 L478 2.0 L480 1.9 L482 4.5 L484 1.6 L486 2.1 L488 2.0 L490 2.0 L492 2.1 L494 1.7 L496 1.8 L498 1.5 L500 2.0 L502 1.6 L504 2.1 L506 2.0 L508 2.2 L510 1.6 L512 1.5 L514 1.8 L516 1.6 L518 2.1 L520 1.8 L522 1.7 L524 1.7 L526 2.1 L528 2.0 L530 1.9 L532 1.5 L534 2.0 L536 2.1 L538 1.8 L540 2.1 L542 3.5 L544 2.4 L546 3.3 L548 5.2 L550 8.7 L550 40.4 L548 46.9 L546 48.1 L544 49.3 L542 49.8 L540 46.4 L538 49.6 L536 49.5 L534 49.6 L532 50.0 L530 50.0 L528 49.7 L526 49.9 L524 49.4 L522 49.7 L520 49.6 L518 49.6 L516 49.5 L514 49.8 L512 49.4 L510 49.8 L508 49.9 L506 49.9 L504 49.7 L502 49.8 L500 49.9 L498 49.7 L496 49.5 L494 49.8 L492 49.6 L490 49.5 L488 49.5 L486 49.8 L484 49.5 L482 49.5 L480 49.7 L478 49.8 L476 50.0 L474 49.6 L472 49.5 L470 49.6 L468 49.5 L466 49.4 L464 49.7 L462 49.8 L460 49.4 L458 49.5 L456 49.9 L454 49.7 L452 49.8 L450 49.8 L448 46.9 L446 49.4 L444 49.7 L442 47.8 L440 49.9 L438 49.7 L436 49.7 L434 47.2 L432 49.7 L430 49.7 L428 49.8 L426 49.9 L424 49.4 L422 49.5 L420 49.7 L418 49.8 L416 49.5 L414 48.7 L412 49.5 L410 49.9 L408 49.6 L406 49.5 L404 49.8 L402 50.0 L400 49.7 L398 50.0 L396 49.8 L394 49.5 L392 49.7 L390 49.5 L388 49.9 L386 49.5 L384 49.8 L382 49.5 L380 49.5 L378 49.6 L376 49.9 L374 49.8 L372 49.7 L370 49.9 L368 49.5 L366 49.6 L364 49.5 L362 49.7 L360 49.9 L358 49.8 L356 49.8 L354 49.7 L352 50.0 L350 49.5 L348 49.5 L346 49.5 L344 49.4 L342 49.6 L340 49.8 L338 49.5 L336 49.7 L334 49.5 L332 49.8 L330 49.7 L328 49.7 L326 49.7 L324 49.6 L322 49.9 L320 49.8 L318 49.5 L316 49.8 L314 49.8 L312 49.6 L310 49.5 L308 49.7 L306 49.6 L304 49.7 L302 49.9 L300 49.8 L298 49.6 L296 49.9 L294 49.8 L292 49.5 L290 49.7 L288 49.7 L286 49.5 L284 49.5 L282 50.0 L280 49.7 L278 49.9 L276 49.9 L274 49.7 L272 49.8 L270 49.5 L268 49.6 L266 49.8 L264 49.6 L262 49.6 L260 49.6 L258 49.9 L256 49.5 L254 49.9 L252 49.6 L250 49.5 L248 49.8 L246 49.9 L244 49.5 L242 49.9 L240 49.5 L238 49.5 L236 49.5 L234 49.6 L232 49.9 L230 49.7 L228 49.8 L226 49.7 L224 49.6 L222 49.7 L220 50.0 L218 49.8 L216 49.5 L214 49.8 L212 49.9 L210 49.8 L208 49.5 L206 49.8 L204 49.8 L202 49.8 L200 49.5 L198 50.0 L196 49.5 L194 49.9 L192 49.6 L190 49.5 L188 48.6 L186 49.5 L184 49.9 L182 49.8 L180 49.8 L178 49.9 L176 49.7 L174 49.7 L172 49.5 L170 49.8 L168 49.5 L166 49.5 L164 49.6 L162 49.7 L160 49.8 L158 49.4 L156 50.0 L154 49.9 L152 49.9 L150 50.0 L148 49.9 L146 49.5 L144 49.6 L142 49.9 L140 49.5 L138 49.9 L136 49.4 L134 49.6 L132 49.7 L130 49.9 L128 49.6 L126 49.6 L124 49.8 L122 49.5 L120 49.4 L118 49.9 L116 49.4 L114 49.5 L112 49.8 L110 49.8 L108 48.0 L106 49.8 L104 49.5 L102 49.8 L100 49.5 L98 50.0 L96 49.6 L94 49.6 L92 49.4 L90 50.0 L88 49.8 L86 49.9 L84 49.7 L82 49.9 L80 49.7 L78 49.6 L76 49.5 L74 49.9 L72 50.0 L70 50.0 L68 49.6 L66 50.0 L64 49.7 L62 49.7 L60 50.0 L58 49.8 L56 49.8 L54 49.9 L52 50.0 L50 49.9 L48 47.2 L46 49.8 L44 49.6 L42 49.7 L40 49.5 L38 49.9 L36 47.5 L34 49.7 L32 49.8 L30 49.8 L28 49.9 L26 49.7 L24 49.8 L22 49.8 L20 50.0 L18 49.6 L16 49.4 L14 49.8 L12 49.4 L10 49.5 L8 49.5 L6 49.6 L4 49.4 L2 49.6 L0 50.0 Z" fill="#46d998" transform="translate(0 52.5)"/><rect x="0" y="78" width="541" height="0.6" fill="#7fe8b8" opacity="0.6"/></svg>
<div class="a" style="left:737px;top:125px;width:14px;height:104px;background:rgba(20,40,30,0.72);"></div>
<div class="a" style="left:737px;top:125px;width:1px;height:104px;background:#d02020;"></div>
<div class="a" style="left:738px;top:126px;width:13px;height:2px;background:#c8c8c8;"></div>
<div class="a" style="left:738px;top:173.5px;width:13px;height:2px;background:#c8c8c8;"></div>
<div class="a" style="left:738px;top:177px;width:13px;height:2px;background:#c8c8c8;"></div>
<div class="a" style="left:738px;top:226px;width:13px;height:2px;background:#c8c8c8;"></div>
<svg class="a" style="left:306px;top:127px;" width="11" height="11" viewBox="0 0 11 11"><rect x="0" y="0" width="11" height="11" fill="#b8b8b8"/><path d="M10 1 V10 H1 Z" fill="#3a4a40"/></svg>
<svg class="a" style="left:829px;top:127px;" width="11" height="11" viewBox="0 0 11 11"><rect x="0" y="0" width="11" height="11" fill="#b8b8b8"/><path d="M1 1 V10 H10 Z" fill="#3a4a40"/></svg>
<div class="a" style="left:688px;top:135px;width:111px;height:22px;background:rgba(38,62,50,0.92);"></div>
<div class="a" style="left:688px;top:135px;width:8px;height:22px;background:rgba(70,90,80,0.9);"></div>
<svg class="a" style="left:697px;top:140px;" width="14" height="12" viewBox="0 0 14 12"><rect x="0" y="11.0" width="1.2" height="1.0" fill="#b8b8b8"/><rect x="2" y="9.4" width="1.2" height="2.6" fill="#b8b8b8"/><rect x="4" y="7.8" width="1.2" height="4.2" fill="#b8b8b8"/><rect x="6" y="6.2" width="1.2" height="5.8" fill="#b8b8b8"/><rect x="8" y="4.6" width="1.2" height="7.4" fill="#b8b8b8"/><rect x="10" y="3.0" width="1.2" height="9.0" fill="#b8b8b8"/><rect x="12" y="1.4" width="1.2" height="10.6" fill="#b8b8b8"/></svg>
<svg class="a" style="left:715px;top:137px;" width="17" height="17" viewBox="0 0 17 17"><circle cx="8.5" cy="9" r="6.5" fill="none" stroke="#9a9a9a" stroke-width="1.6"/><path d="M8.5 2 V9" stroke="#9a9a9a" stroke-width="1.6"/></svg>
<div class="t" style="left:736px;top:140.53px;font-size:10px;color:#3b8eea;transform:scaleX(1.0525);transform-origin:0 0;">+0</div>
<div class="t" style="left:750px;top:140.53px;font-size:10px;color:#9a9a9a;transform:scaleX(0.8993);transform-origin:0 0;">dB</div>
<div class="a" style="left:782px;top:138px;width:1px;height:16px;background:#6a7a70;"></div>
<svg class="a" style="left:785px;top:139px;" width="12" height="12" viewBox="0 0 12 12"><path d="M6.5 1.5 L10.5 5.5 L9 6 L7.5 8.5 L8 10 L2 4 L3.5 4.5 L6 3 Z" fill="#c8c8c8"/><path d="M5 7 L1.5 10.5" stroke="#c8c8c8" stroke-width="1.4"/></svg>
<div class="a" style="left:852px;top:124px;width:65px;height:105px;background:#232323;border-top:1px solid #0c0c0c;border-right:1.5px solid #0c0c0c"></div>
<div class="a" style="left:852px;top:175px;width:65px;height:2px;background:#0c0c0c;"></div>
<div class="t" style="left:858px;top:128.03px;font-size:10px;color:#9a9a9a;transform:scaleX(0.9810);transform-origin:0 0;">dB</div>
<div class="t" style="left:858px;top:145.53px;font-size:10px;color:#9a9a9a;transform:scaleX(1.1473);transform-origin:0 0;">-∞</div>
<div class="t" style="left:858px;top:163.03px;font-size:10px;color:#9a9a9a;transform:scaleX(1.3495);transform-origin:0 0;">-3</div>
<div class="t" style="left:858px;top:179.53px;font-size:10px;color:#9a9a9a;transform:scaleX(0.9810);transform-origin:0 0;">dB</div>
<div class="t" style="left:858px;top:197.03px;font-size:10px;color:#9a9a9a;transform:scaleX(1.1473);transform-origin:0 0;">-∞</div>
<div class="t" style="left:858px;top:214.53px;font-size:10px;color:#9a9a9a;transform:scaleX(1.3495);transform-origin:0 0;">-3</div>
<div class="a" style="left:852px;top:132px;width:3px;height:1px;background:#aaa;"></div>
<div class="a" style="left:852px;top:150px;width:3px;height:1px;background:#aaa;"></div>
<div class="a" style="left:852px;top:167px;width:3px;height:1px;background:#aaa;"></div>
<div class="a" style="left:852px;top:184px;width:3px;height:1px;background:#aaa;"></div>
<div class="a" style="left:852px;top:202px;width:3px;height:1px;background:#aaa;"></div>
<div class="a" style="left:852px;top:219px;width:3px;height:1px;background:#aaa;"></div>
<div class="a" style="left:895px;top:143px;width:19px;height:16px;background:#1b1b1b;border:1px solid #262626;border-radius:3px"></div>
<div class="t" style="left:901px;top:147.38px;font-size:9px;color:#3b8eea;transform:scaleX(0.9989);transform-origin:0 0;">L</div>
<div class="a" style="left:895px;top:195px;width:19px;height:16px;background:#1b1b1b;border:1px solid #262626;border-radius:3px"></div>
<div class="t" style="left:901px;top:199.38px;font-size:9px;color:#3b8eea;transform:scaleX(0.9231);transform-origin:0 0;">R</div>
<div class="a" style="left:296px;top:229px;width:621px;height:8px;background:#343434;"></div>
<svg class="a" style="left:893px;top:231px;" width="10" height="5" viewBox="0 0 10 5"><path d="M1 0.5 H9 L5 4.5 Z" fill="#9a9a9a"/></svg>
<svg class="a" style="left:596px;top:231px;" width="20" height="4" viewBox="0 0 20 4"><rect x="0" y="0" width="1" height="1" fill="#555"/><rect x="0" y="2" width="1" height="1" fill="#555"/><rect x="2" y="0" width="1" height="1" fill="#555"/><rect x="2" y="2" width="1" height="1" fill="#555"/><rect x="4" y="0" width="1" height="1" fill="#555"/><rect x="4" y="2" width="1" height="1" fill="#555"/><rect x="6" y="0" width="1" height="1" fill="#555"/><rect x="6" y="2" width="1" height="1" fill="#555"/><rect x="8" y="0" width="1" height="1" fill="#555"/><rect x="8" y="2" width="1" height="1" fill="#555"/><rect x="10" y="0" width="1" height="1" fill="#555"/><rect x="10" y="2" width="1" height="1" fill="#555"/><rect x="12" y="0" width="1" height="1" fill="#555"/><rect x="12" y="2" width="1" height="1" fill="#555"/><rect x="14" y="0" width="1" height="1" fill="#555"/><rect x="14" y="2" width="1" height="1" fill="#555"/><rect x="16" y="0" width="1" height="1" fill="#555"/><rect x="16" y="2" width="1" height="1" fill="#555"/><rect x="18" y="0" width="1" height="1" fill="#555"/><rect x="18" y="2" width="1" height="1" fill="#555"/></svg>
<div class="a" style="left:295px;top:237px;width:557px;height:508px;background:#050505;"></div>
<svg class="a" style="left:296px;top:237px;" width="552" height="253" viewBox="0 0 552 253"><defs><linearGradient id="gag" x1="0" y1="0" x2="0" y2="1"><stop offset="0.000" stop-color="rgb(69,69,69)"/><stop offset="0.025" stop-color="rgb(69,69,69)"/><stop offset="0.050" stop-color="rgb(69,69,69)"/><stop offset="0.075" stop-color="rgb(70,70,70)"/><stop offset="0.100" stop-color="rgb(70,70,70)"/><stop offset="0.125" stop-color="rgb(70,70,70)"/><stop offset="0.150" stop-color="rgb(71,71,71)"/><stop offset="0.175" stop-color="rgb(71,71,71)"/><stop offset="0.200" stop-color="rgb(71,71,71)"/><stop offset="0.225" stop-color="rgb(72,72,72)"/><stop offset="0.250" stop-color="rgb(72,72,72)"/><stop offset="0.275" stop-color="rgb(72,72,72)"/><stop offset="0.300" stop-color="rgb(73,73,73)"/><stop offset="0.325" stop-color="rgb(73,73,73)"/><stop offset="0.350" stop-color="rgb(91,91,91)"/><stop offset="0.375" stop-color="rgb(109,109,109)"/><stop offset="0.400" stop-color="rgb(110,110,110)"/><stop offset="0.425" stop-color="rgb(110,110,110)"/><stop offset="0.450" stop-color="rgb(110,110,110)"/><stop offset="0.475" stop-color="rgb(111,111,111)"/><stop offset="0.500" stop-color="rgb(120,120,120)"/><stop offset="0.525" stop-color="rgb(129,129,129)"/><stop offset="0.550" stop-color="rgb(129,129,129)"/><stop offset="0.575" stop-color="rgb(130,130,130)"/><stop offset="0.600" stop-color="rgb(130,130,130)"/><stop offset="0.625" stop-color="rgb(130,130,130)"/><stop offset="0.650" stop-color="rgb(148,148,148)"/><stop offset="0.675" stop-color="rgb(152,152,152)"/><stop offset="0.700" stop-color="rgb(153,153,153)"/><stop offset="0.725" stop-color="rgb(154,154,154)"/><stop offset="0.750" stop-color="rgb(155,155,155)"/><stop offset="0.775" stop-color="rgb(156,156,156)"/><stop offset="0.800" stop-color="rgb(157,157,157)"/><stop offset="0.825" stop-color="rgb(158,158,158)"/><stop offset="0.850" stop-color="rgb(159,159,159)"/><stop offset="0.875" stop-color="rgb(161,161,161)"/><stop offset="0.900" stop-color="rgb(162,162,162)"/><stop offset="0.925" stop-color="rgb(163,163,163)"/><stop offset="0.950" stop-color="rgb(164,164,164)"/><stop offset="0.975" stop-color="rgb(165,165,165)"/><stop offset="1.000" stop-color="rgb(166,166,166)"/></linearGradient><linearGradient id="gam" x1="0" y1="0" x2="0" y2="1"><stop offset="0" stop-color="#fff" stop-opacity="0.35"/><stop offset="0.6" stop-color="#fff" stop-opacity="0.8"/><stop offset="1" stop-color="#fff" stop-opacity="1"/></linearGradient><filter id="gaf" x="0" y="0" width="1" height="1" color-interpolation-filters="sRGB"><feTurbulence type="fractalNoise" baseFrequency="0.45 0.003" numOctaves="2" seed="5" result="t1"/><feColorMatrix in="t1" type="matrix" values="1 0 0 0 0 1 0 0 0 0 1 0 0 0 0 0 0 0 0 1" result="c1"/><feTurbulence type="fractalNoise" baseFrequency="0.9 0.2" numOctaves="1" seed="12" result="t2"/><feColorMatrix in="t2" type="matrix" values="1 0 0 0 0 1 0 0 0 0 1 0 0 0 0 0 0 0 0 1" result="c2"/><feComposite in="c1" in2="c2" operator="arithmetic" k1="0" k2="0.8" k3="0.4" k4="-0.10000000000000009" result="n"/><feComposite in="SourceGraphic" in2="n" operator="arithmetic" k1="0" k2="1" k3="1" k4="-0.5" result="s"/><feComponentTransfer in="s"><feFuncR type="table" tableValues="0.000 0.039 0.118 0.243 0.412 0.608 0.804 0.933 1.000 1.000 1.000"/><feFuncG type="table" tableValues="0.000 0.016 0.031 0.039 0.055 0.063 0.078 0.125 0.392 0.745 0.961"/><feFuncB type="table" tableValues="0.000 0.110 0.216 0.345 0.439 0.424 0.282 0.118 0.086 0.243 0.667"/><feFuncA type="identity"/></feComponentTransfer></filter></defs><g filter="url(#gaf)"><rect width="552" height="253" fill="url(#gag)"/><rect x="0" width="1" height="253" fill="#000" fill-opacity="0.05"/><rect x="1" width="1" height="253" fill="#000" fill-opacity="0.05"/><rect x="2" width="1" height="253" fill="#000" fill-opacity="0.20"/><rect x="3" width="1" height="253" fill="#000" fill-opacity="0.09"/><rect x="4" width="1" height="253" fill="#fff" fill-opacity="0.08"/><rect x="5" width="1" height="253" fill="#000" fill-opacity="0.07"/><rect x="6" width="1" height="253" fill="#000" fill-opacity="0.22"/><rect x="7" width="1" height="253" fill="#000" fill-opacity="0.01"/><rect x="8" width="1" height="253" fill="#fff" fill-opacity="0.06"/><rect x="9" width="1" height="253" fill="#000" fill-opacity="0.03"/><rect x="10" width="1" height="253" fill="#fff" fill-opacity="0.04"/><rect x="11" width="1" height="253" fill="#000" fill-opacity="0.19"/><rect x="13" width="1" height="253" fill="#fff" fill-opacity="0.03"/><rect x="14" width="1" height="253" fill="#000" fill-opacity="0.02"/><rect x="15" width="1" height="253" fill="#fff" fill-opacity="0.10"/><rect x="16" width="1" height="253" fill="#fff" fill-opacity="0.03"/><rect x="17" width="1" height="253" fill="#fff" fill-opacity="0.09"/><rect x="18" width="1" height="253" fill="#fff" fill-opacity="0.03"/><rect x="19" width="1" height="253" fill="#000" fill-opacity="0.02"/><rect x="21" width="1" height="253" fill="#fff" fill-opacity="0.01"/><rect x="22" width="1" height="253" fill="#fff" fill-opacity="0.06"/><rect x="24" width="1" height="253" fill="#fff" fill-opacity="0.02"/><rect x="25" width="1" height="253" fill="#000" fill-opacity="0.04"/><rect x="27" width="1" height="253" fill="#000" fill-opacity="0.24"/><rect x="30" width="1" height="253" fill="#000" fill-opacity="0.17"/><rect x="32" width="1" height="253" fill="#fff" fill-opacity="0.02"/><rect x="33" width="1" height="253" fill="#fff" fill-opacity="0.06"/><rect x="34" width="1" height="253" fill="#000" fill-opacity="0.02"/><rect x="35" width="1" height="253" fill="#fff" fill-opacity="0.03"/><rect x="36" width="1" height="253" fill="#fff" fill-opacity="0.05"/><rect x="37" width="1" height="253" fill="#fff" fill-opacity="0.04"/><rect x="38" width="1" height="253" fill="#fff" fill-opacity="0.21"/><rect x="39" width="1" height="253" fill="#fff" fill-opacity="0.02"/><rect x="40" width="1" height="253" fill="#fff" fill-opacity="0.03"/><rect x="41" width="1" height="253" fill="#000" fill-opacity="0.02"/><rect x="42" width="1" height="253" fill="#000" fill-opacity="0.01"/><rect x="43" width="1" height="253" fill="#fff" fill-opacity="0.14"/><rect x="44" width="1" height="253" fill="#000" fill-opacity="0.05"/><rect x="45" width="1" height="253" fill="#000" fill-opacity="0.37"/><rect x="46" width="1" height="253" fill="#000" fill-opacity="0.04"/><rect x="48" width="1" height="253" fill="#fff" fill-opacity="0.02"/><rect x="49" width="1" height="253" fill="#fff" fill-opacity="0.12"/><rect x="50" width="1" height="253" fill="#fff" fill-opacity="0.05"/><rect x="52" width="1" height="253" fill="#000" fill-opacity="0.01"/><rect x="53" width="1" height="253" fill="#000" fill-opacity="0.10"/><rect x="54" width="1" height="253" fill="#fff" fill-opacity="0.03"/><rect x="55" width="1" height="253" fill="#fff" fill-opacity="0.03"/><rect x="56" width="1" height="253" fill="#000" fill-opacity="0.01"/><rect x="57" width="1" height="253" fill="#fff" fill-opacity="0.04"/><rect x="58" width="1" height="253" fill="#fff" fill-opacity="0.04"/><rect x="60" width="1" height="253" fill="#000" fill-opacity="0.03"/><rect x="62" width="1" height="253" fill="#000" fill-opacity="0.09"/><rect x="63" width="1" height="253" fill="#fff" fill-opacity="0.08"/><rect x="64" width="1" height="253" fill="#fff" fill-opacity="0.08"/><rect x="66" width="1" height="253" fill="#fff" fill-opacity="0.03"/><rect x="67" width="1" height="253" fill="#000" fill-opacity="0.03"/><rect x="68" width="1" height="253" fill="#000" fill-opacity="0.02"/><rect x="69" width="1" height="253" fill="#000" fill-opacity="0.06"/><rect x="71" width="1" height="253" fill="#000" fill-opacity="0.03"/><rect x="72" width="1" height="253" fill="#000" fill-opacity="0.01"/><rect x="73" width="1" height="253" fill="#000" fill-opacity="0.03"/><rect x="76" width="1" height="253" fill="#000" fill-opacity="0.02"/><rect x="77" width="1" height="253" fill="#000" fill-opacity="0.04"/><rect x="78" width="1" height="253" fill="#fff" fill-opacity="0.01"/><rect x="79" width="1" height="253" fill="#000" fill-opacity="0.04"/><rect x="80" width="1" height="253" fill="#fff" fill-opacity="0.02"/><rect x="81" width="1" height="253" fill="#000" fill-opacity="0.03"/><rect x="82" width="1" height="253" fill="#000" fill-opacity="0.04"/><rect x="83" width="1" height="253" fill="#000" fill-opacity="0.10"/><rect x="84" width="1" height="253" fill="#000" fill-opacity="0.02"/><rect x="86" width="1" height="253" fill="#000" fill-opacity="0.06"/><rect x="88" width="1" height="253" fill="#fff" fill-opacity="0.03"/><rect x="89" width="1" height="253" fill="#fff" fill-opacity="0.06"/><rect x="90" width="1" height="253" fill="#000" fill-opacity="0.05"/><rect x="91" width="1" height="253" fill="#fff" fill-opacity="0.03"/><rect x="94" width="1" height="253" fill="#000" fill-opacity="0.02"/><rect x="95" width="1" height="253" fill="#000" fill-opacity="0.02"/><rect x="96" width="1" height="253" fill="#fff" fill-opacity="0.04"/><rect x="97" width="1" height="253" fill="#fff" fill-opacity="0.12"/><rect x="98" width="1" height="253" fill="#000" fill-opacity="0.01"/><rect x="99" width="1" height="253" fill="#000" fill-opacity="0.17"/><rect x="100" width="1" height="253" fill="#000" fill-opacity="0.04"/><rect x="101" width="1" height="253" fill="#fff" fill-opacity="0.04"/><rect x="104" width="1" height="253" fill="#000" fill-opacity="0.02"/><rect x="105" width="1" height="253" fill="#fff" fill-opacity="0.01"/><rect x="106" width="1" height="253" fill="#fff" fill-opacity="0.19"/><rect x="107" width="1" height="253" fill="#fff" fill-opacity="0.01"/><rect x="108" width="1" height="253" fill="#000" fill-opacity="0.09"/><rect x="109" width="1" height="253" fill="#000" fill-opacity="0.05"/><rect x="110" width="1" height="253" fill="#fff" fill-opacity="0.02"/><rect x="111" width="1" height="253" fill="#000" fill-opacity="0.05"/><rect x="112" width="1" height="253" fill="#000" fill-opacity="0.04"/><rect x="113" width="1" height="253" fill="#000" fill-opacity="0.03"/><rect x="114" width="1" height="253" fill="#000" fill-opacity="0.03"/><rect x="115" width="1" height="253" fill="#000" fill-opacity="0.18"/><rect x="116" width="1" height="253" fill="#000" fill-opacity="0.05"/><rect x="117" width="1" height="253" fill="#000" fill-opacity="0.02"/><rect x="118" width="1" height="253" fill="#fff" fill-opacity="0.03"/><rect x="119" width="1" height="253" fill="#000" fill-opacity="0.02"/><rect x="120" width="1" height="253" fill="#000" fill-opacity="0.03"/><rect x="121" width="1" height="253" fill="#fff" fill-opacity="0.10"/><rect x="122" width="1" height="253" fill="#fff" fill-opacity="0.05"/><rect x="123" width="1" height="253" fill="#000" fill-opacity="0.03"/><rect x="124" width="1" height="253" fill="#000" fill-opacity="0.04"/><rect x="126" width="1" height="253" fill="#000" fill-opacity="0.03"/><rect x="128" width="1" height="253" fill="#000" fill-opacity="0.03"/><rect x="129" width="1" height="253" fill="#000" fill-opacity="0.03"/><rect x="132" width="1" height="253" fill="#fff" fill-opacity="0.06"/><rect x="133" width="1" height="253" fill="#000" fill-opacity="0.03"/><rect x="134" width="1" height="253" fill="#fff" fill-opacity="0.07"/><rect x="135" width="1" height="253" fill="#fff" fill-opacity="0.10"/><rect x="136" width="1" height="253" fill="#000" fill-opacity="0.06"/><rect x="138" width="1" height="253" fill="#fff" fill-opacity="0.05"/><rect x="139" width="1" height="253" fill="#fff" fill-opacity="0.05"/><rect x="140" width="1" height="253" fill="#000" fill-opacity="0.02"/><rect x="141" width="1" height="253" fill="#fff" fill-opacity="0.03"/><rect x="142" width="1" height="253" fill="#000" fill-opacity="0.04"/><rect x="143" width="1" height="253" fill="#000" fill-opacity="0.12"/><rect x="144" width="1" height="253" fill="#000" fill-opacity="0.09"/><rect x="145" width="1" height="253" fill="#fff" fill-opacity="0.02"/><rect x="146" width="1" height="253" fill="#fff" fill-opacity="0.07"/><rect x="148" width="1" height="253" fill="#000" fill-opacity="0.01"/><rect x="149" width="1" height="253" fill="#000" fill-opacity="0.05"/><rect x="150" width="1" height="253" fill="#000" fill-opacity="0.03"/><rect x="151" width="1" height="253" fill="#fff" fill-opacity="0.03"/><rect x="152" width="1" height="253" fill="#fff" fill-opacity="0.13"/><rect x="153" width="1" height="253" fill="#fff" fill-opacity="0.07"/><rect x="154" width="1" height="253" fill="#000" fill-opacity="0.03"/><rect x="155" width="1" height="253" fill="#fff" fill-opacity="0.01"/><rect x="156" width="1" height="253" fill="#fff" fill-opacity="0.03"/><rect x="157" width="1" height="253" fill="#fff" fill-opacity="0.04"/><rect x="158" width="1" height="253" fill="#000" fill-opacity="0.01"/><rect x="159" width="1" height="253" fill="#fff" fill-opacity="0.02"/><rect x="160" width="1" height="253" fill="#fff" fill-opacity="0.03"/><rect x="161" width="1" height="253" fill="#fff" fill-opacity="0.01"/><rect x="164" width="1" height="253" fill="#000" fill-opacity="0.17"/><rect x="166" width="1" height="253" fill="#000" fill-opacity="0.06"/><rect x="167" width="1" height="253" fill="#000" fill-opacity="0.08"/><rect x="168" width="1" height="253" fill="#000" fill-opacity="0.02"/><rect x="169" width="1" height="253" fill="#fff" fill-opacity="0.09"/><rect x="170" width="1" height="253" fill="#000" fill-opacity="0.02"/><rect x="171" width="1" height="253" fill="#000" fill-opacity="0.15"/><rect x="172" width="1" height="253" fill="#fff" fill-opacity="0.12"/><rect x="173" width="1" height="253" fill="#fff" fill-opacity="0.01"/><rect x="174" width="1" height="253" fill="#fff" fill-opacity="0.02"/><rect x="175" width="1" height="253" fill="#000" fill-opacity="0.01"/><rect x="176" width="1" height="253" fill="#000" fill-opacity="0.04"/><rect x="177" width="1" height="253" fill="#000" fill-opacity="0.03"/><rect x="178" width="1" height="253" fill="#fff" fill-opacity="0.06"/><rect x="179" width="1" height="253" fill="#fff" fill-opacity="0.02"/><rect x="180" width="1" height="253" fill="#000" fill-opacity="0.09"/><rect x="183" width="1" height="253" fill="#fff" fill-opacity="0.05"/><rect x="184" width="1" height="253" fill="#000" fill-opacity="0.02"/><rect x="187" width="1" height="253" fill="#000" fill-opacity="0.03"/><rect x="188" width="1" height="253" fill="#fff" fill-opacity="0.16"/><rect x="189" width="1" height="253" fill="#fff" fill-opacity="0.03"/><rect x="191" width="1" height="253" fill="#fff" fill-opacity="0.08"/><rect x="193" width="1" height="253" fill="#fff" fill-opacity="0.10"/><rect x="194" width="1" height="253" fill="#fff" fill-opacity="0.06"/><rect x="195" width="1" height="253" fill="#fff" fill-opacity="0.14"/><rect x="196" width="1" height="253" fill="#000" fill-opacity="0.04"/><rect x="197" width="1" height="253" fill="#000" fill-opacity="0.06"/><rect x="198" width="1" height="253" fill="#000" fill-opacity="0.02"/><rect x="199" width="1" height="253" fill="#fff" fill-opacity="0.02"/><rect x="200" width="1" height="253" fill="#000" fill-opacity="0.02"/><rect x="201" width="1" height="253" fill="#fff" fill-opacity="0.03"/><rect x="202" width="1" height="253" fill="#000" fill-opacity="0.04"/><rect x="203" width="1" height="253" fill="#000" fill-opacity="0.06"/><rect x="204" width="1" height="253" fill="#000" fill-opacity="0.05"/><rect x="206" width="1" height="253" fill="#000" fill-opacity="0.18"/><rect x="207" width="1" height="253" fill="#000" fill-opacity="0.23"/><rect x="208" width="1" height="253" fill="#000" fill-opacity="0.26"/><rect x="210" width="1" height="253" fill="#000" fill-opacity="0.03"/><rect x="211" width="1" height="253" fill="#fff" fill-opacity="0.08"/><rect x="212" width="1" height="253" fill="#fff" fill-opacity="0.02"/><rect x="213" width="1" height="253" fill="#fff" fill-opacity="0.03"/><rect x="214" width="1" height="253" fill="#fff" fill-opacity="0.02"/><rect x="215" width="1" height="253" fill="#fff" fill-opacity="0.03"/><rect x="217" width="1" height="253" fill="#000" fill-opacity="0.21"/><rect x="218" width="1" height="253" fill="#000" fill-opacity="0.06"/><rect x="219" width="1" height="253" fill="#fff" fill-opacity="0.07"/><rect x="220" width="1" height="253" fill="#fff" fill-opacity="0.05"/><rect x="221" width="1" height="253" fill="#fff" fill-opacity="0.02"/><rect x="222" width="1" height="253" fill="#000" fill-opacity="0.03"/><rect x="223" width="1" height="253" fill="#000" fill-opacity="0.06"/><rect x="224" width="1" height="253" fill="#fff" fill-opacity="0.15"/><rect x="226" width="1" height="253" fill="#000" fill-opacity="0.02"/><rect x="227" width="1" height="253" fill="#fff" fill-opacity="0.03"/><rect x="229" width="1" height="253" fill="#000" fill-opacity="0.06"/><rect x="230" width="1" height="253" fill="#000" fill-opacity="0.04"/><rect x="231" width="1" height="253" fill="#000" fill-opacity="0.08"/><rect x="232" width="1" height="253" fill="#fff" fill-opacity="0.15"/><rect x="234" width="1" height="253" fill="#fff" fill-opacity="0.05"/><rect x="235" width="1" height="253" fill="#fff" fill-opacity="0.01"/><rect x="236" width="1" height="253" fill="#fff" fill-opacity="0.14"/><rect x="237" width="1" height="253" fill="#fff" fill-opacity="0.01"/><rect x="238" width="1" height="253" fill="#fff" fill-opacity="0.01"/><rect x="239" width="1" height="253" fill="#fff" fill-opacity="0.12"/><rect x="240" width="1" height="253" fill="#fff" fill-opacity="0.03"/><rect x="241" width="1" height="253" fill="#fff" fill-opacity="0.01"/><rect x="242" width="1" height="253" fill="#fff" fill-opacity="0.01"/><rect x="244" width="1" height="253" fill="#000" fill-opacity="0.04"/><rect x="245" width="1" height="253" fill="#fff" fill-opacity="0.12"/><rect x="246" width="1" height="253" fill="#fff" fill-opacity="0.04"/><rect x="247" width="1" height="253" fill="#fff" fill-opacity="0.03"/><rect x="248" width="1" height="253" fill="#000" fill-opacity="0.19"/><rect x="249" width="1" height="253" fill="#000" fill-opacity="0.02"/><rect x="250" width="1" height="253" fill="#000" fill-opacity="0.04"/><rect x="251" width="1" height="253" fill="#000" fill-opacity="0.02"/><rect x="252" width="1" height="253" fill="#fff" fill-opacity="0.03"/><rect x="253" width="1" height="253" fill="#000" fill-opacity="0.02"/><rect x="255" width="1" height="253" fill="#fff" fill-opacity="0.17"/><rect x="256" width="1" height="253" fill="#fff" fill-opacity="0.01"/><rect x="257" width="1" height="253" fill="#fff" fill-opacity="0.08"/><rect x="258" width="1" height="253" fill="#fff" fill-opacity="0.04"/><rect x="259" width="1" height="253" fill="#fff" fill-opacity="0.02"/><rect x="260" width="1" height="253" fill="#000" fill-opacity="0.11"/><rect x="261" width="1" height="253" fill="#fff" fill-opacity="0.02"/><rect x="262" width="1" height="253" fill="#000" fill-opacity="0.01"/><rect x="263" width="1" height="253" fill="#fff" fill-opacity="0.01"/><rect x="265" width="1" height="253" fill="#000" fill-opacity="0.05"/><rect x="267" width="1" height="253" fill="#000" fill-opacity="0.05"/><rect x="268" width="1" height="253" fill="#000" fill-opacity="0.06"/><rect x="269" width="1" height="253" fill="#000" fill-opacity="0.08"/><rect x="271" width="1" height="253" fill="#fff" fill-opacity="0.07"/><rect x="272" width="1" height="253" fill="#fff" fill-opacity="0.02"/><rect x="275" width="1" height="253" fill="#fff" fill-opacity="0.01"/><rect x="276" width="1" height="253" fill="#fff" fill-opacity="0.01"/><rect x="278" width="1" height="253" fill="#fff" fill-opacity="0.06"/><rect x="279" width="1" height="253" fill="#000" fill-opacity="0.08"/><rect x="280" width="1" height="253" fill="#000" fill-opacity="0.03"/><rect x="281" width="1" height="253" fill="#000" fill-opacity="0.19"/><rect x="282" width="1" height="253" fill="#fff" fill-opacity="0.16"/><rect x="283" width="1" height="253" fill="#000" fill-opacity="0.06"/><rect x="284" width="1" height="253" fill="#000" fill-opacity="0.01"/><rect x="285" width="1" height="253" fill="#000" fill-opacity="0.04"/><rect x="286" width="1" height="253" fill="#fff" fill-opacity="0.03"/><rect x="287" width="1" height="253" fill="#fff" fill-opacity="0.02"/><rect x="288" width="1" height="253" fill="#000" fill-opacity="0.04"/><rect x="289" width="1" height="253" fill="#fff" fill-opacity="0.02"/><rect x="290" width="1" height="253" fill="#000" fill-opacity="0.10"/><rect x="291" width="1" height="253" fill="#fff" fill-opacity="0.13"/><rect x="292" width="1" height="253" fill="#000" fill-opacity="0.01"/><rect x="293" width="1" height="253" fill="#000" fill-opacity="0.20"/><rect x="294" width="1" height="253" fill="#000" fill-opacity="0.08"/><rect x="297" width="1" height="253" fill="#fff" fill-opacity="0.03"/><rect x="299" width="1" height="253" fill="#000" fill-opacity="0.03"/><rect x="300" width="1" height="253" fill="#fff" fill-opacity="0.08"/><rect x="302" width="1" height="253" fill="#000" fill-opacity="0.02"/><rect x="303" width="1" height="253" fill="#fff" fill-opacity="0.01"/><rect x="304" width="1" height="253" fill="#fff" fill-opacity="0.17"/><rect x="306" width="1" height="253" fill="#fff" fill-opacity="0.02"/><rect x="307" width="1" height="253" fill="#fff" fill-opacity="0.07"/><rect x="308" width="1" height="253" fill="#fff" fill-opacity="0.04"/><rect x="309" width="1" height="253" fill="#000" fill-opacity="0.04"/><rect x="310" width="1" height="253" fill="#fff" fill-opacity="0.05"/><rect x="312" width="1" height="253" fill="#000" fill-opacity="0.21"/><rect x="313" width="1" height="253" fill="#fff" fill-opacity="0.02"/><rect x="314" width="1" height="253" fill="#000" fill-opacity="0.06"/><rect x="316" width="1" height="253" fill="#fff" fill-opacity="0.04"/><rect x="317" width="1" height="253" fill="#000" fill-opacity="0.08"/><rect x="318" width="1" height="253" fill="#000" fill-opacity="0.07"/><rect x="319" width="1" height="253" fill="#000" fill-opacity="0.02"/><rect x="320" width="1" height="253" fill="#000" fill-opacity="0.02"/><rect x="321" width="1" height="253" fill="#fff" fill-opacity="0.06"/><rect x="322" width="1" height="253" fill="#000" fill-opacity="0.03"/><rect x="323" width="1" height="253" fill="#fff" fill-opacity="0.04"/><rect x="324" width="1" height="253" fill="#000" fill-opacity="0.03"/><rect x="325" width="1" height="253" fill="#fff" fill-opacity="0.09"/><rect x="326" width="1" height="253" fill="#fff" fill-opacity="0.06"/><rect x="327" width="1" height="253" fill="#fff" fill-opacity="0.03"/><rect x="328" width="1" height="253" fill="#fff" fill-opacity="0.05"/><rect x="329" width="1" height="253" fill="#000" fill-opacity="0.04"/><rect x="330" width="1" height="253" fill="#000" fill-opacity="0.02"/><rect x="331" width="1" height="253" fill="#000" fill-opacity="0.02"/><rect x="333" width="1" height="253" fill="#fff" fill-opacity="0.11"/><rect x="334" width="1" height="253" fill="#fff" fill-opacity="0.04"/><rect x="336" width="1" height="253" fill="#fff" fill-opacity="0.07"/><rect x="337" width="1" height="253" fill="#000" fill-opacity="0.05"/><rect x="338" width="1" height="253" fill="#fff" fill-opacity="0.05"/><rect x="339" width="1" height="253" fill="#fff" fill-opacity="0.04"/><rect x="340" width="1" height="253" fill="#000" fill-opacity="0.06"/><rect x="341" width="1" height="253" fill="#fff" fill-opacity="0.06"/><rect x="343" width="1" height="253" fill="#fff" fill-opacity="0.06"/><rect x="344" width="1" height="253" fill="#000" fill-opacity="0.05"/><rect x="345" width="1" height="253" fill="#fff" fill-opacity="0.08"/><rect x="346" width="1" height="253" fill="#fff" fill-opacity="0.04"/><rect x="347" width="1" height="253" fill="#000" fill-opacity="0.07"/><rect x="348" width="1" height="253" fill="#000" fill-opacity="0.04"/><rect x="349" width="1" height="253" fill="#fff" fill-opacity="0.02"/><rect x="350" width="1" height="253" fill="#000" fill-opacity="0.01"/><rect x="351" width="1" height="253" fill="#fff" fill-opacity="0.05"/><rect x="352" width="1" height="253" fill="#fff" fill-opacity="0.02"/><rect x="354" width="1" height="253" fill="#fff" fill-opacity="0.01"/><rect x="355" width="1" height="253" fill="#fff" fill-opacity="0.02"/><rect x="356" width="1" height="253" fill="#fff" fill-opacity="0.11"/><rect x="357" width="1" height="253" fill="#000" fill-opacity="0.06"/><rect x="358" width="1" height="253" fill="#fff" fill-opacity="0.03"/><rect x="360" width="1" height="253" fill="#fff" fill-opacity="0.03"/><rect x="361" width="1" height="253" fill="#000" fill-opacity="0.01"/><rect x="362" width="1" height="253" fill="#000" fill-opacity="0.02"/><rect x="364" width="1" height="253" fill="#fff" fill-opacity="0.02"/><rect x="365" width="1" height="253" fill="#fff" fill-opacity="0.16"/><rect x="367" width="1" height="253" fill="#000" fill-opacity="0.07"/><rect x="368" width="1" height="253" fill="#fff" fill-opacity="0.09"/><rect x="369" width="1" height="253" fill="#000" fill-opacity="0.05"/><rect x="370" width="1" height="253" fill="#fff" fill-opacity="0.13"/><rect x="371" width="1" height="253" fill="#fff" fill-opacity="0.01"/><rect x="372" width="1" height="253" fill="#000" fill-opacity="0.06"/><rect x="373" width="1" height="253" fill="#fff" fill-opacity="0.14"/><rect x="374" width="1" height="253" fill="#fff" fill-opacity="0.10"/><rect x="375" width="1" height="253" fill="#000" fill-opacity="0.01"/><rect x="376" width="1" height="253" fill="#000" fill-opacity="0.02"/><rect x="377" width="1" height="253" fill="#000" fill-opacity="0.04"/><rect x="378" width="1" height="253" fill="#fff" fill-opacity="0.06"/><rect x="379" width="1" height="253" fill="#fff" fill-opacity="0.03"/><rect x="380" width="1" height="253" fill="#fff" fill-opacity="0.03"/><rect x="381" width="1" height="253" fill="#fff" fill-opacity="0.03"/><rect x="382" width="1" height="253" fill="#fff" fill-opacity="0.03"/><rect x="383" width="1" height="253" fill="#000" fill-opacity="0.02"/><rect x="384" width="1" height="253" fill="#000" fill-opacity="0.02"/><rect x="385" width="1" height="253" fill="#000" fill-opacity="0.07"/><rect x="386" width="1" height="253" fill="#000" fill-opacity="0.04"/><rect x="387" width="1" height="253" fill="#fff" fill-opacity="0.19"/><rect x="388" width="1" height="253" fill="#fff" fill-opacity="0.12"/><rect x="389" width="1" height="253" fill="#fff" fill-opacity="0.19"/><rect x="390" width="1" height="253" fill="#fff" fill-opacity="0.05"/><rect x="392" width="1" height="253" fill="#fff" fill-opacity="0.03"/><rect x="393" width="1" height="253" fill="#000" fill-opacity="0.21"/><rect x="396" width="1" height="253" fill="#fff" fill-opacity="0.08"/><rect x="397" width="1" height="253" fill="#fff" fill-opacity="0.03"/><rect x="398" width="1" height="253" fill="#fff" fill-opacity="0.07"/><rect x="399" width="1" height="253" fill="#fff" fill-opacity="0.02"/><rect x="400" width="1" height="253" fill="#fff" fill-opacity="0.11"/><rect x="401" width="1" height="253" fill="#000" fill-opacity="0.04"/><rect x="402" width="1" height="253" fill="#000" fill-opacity="0.05"/><rect x="403" width="1" height="253" fill="#fff" fill-opacity="0.02"/><rect x="404" width="1" height="253" fill="#000" fill-opacity="0.23"/><rect x="406" width="1" height="253" fill="#fff" fill-opacity="0.05"/><rect x="407" width="1" height="253" fill="#000" fill-opacity="0.05"/><rect x="408" width="1" height="253" fill="#fff" fill-opacity="0.07"/><rect x="411" width="1" height="253" fill="#000" fill-opacity="0.04"/><rect x="413" width="1" height="253" fill="#fff" fill-opacity="0.04"/><rect x="414" width="1" height="253" fill="#000" fill-opacity="0.01"/><rect x="415" width="1" height="253" fill="#fff" fill-opacity="0.06"/><rect x="416" width="1" height="253" fill="#000" fill-opacity="0.02"/><rect x="418" width="1" height="253" fill="#000" fill-opacity="0.21"/><rect x="419" width="1" height="253" fill="#000" fill-opacity="0.02"/><rect x="420" width="1" height="253" fill="#000" fill-opacity="0.02"/><rect x="421" width="1" height="253" fill="#000" fill-opacity="0.01"/><rect x="425" width="1" height="253" fill="#fff" fill-opacity="0.07"/><rect x="426" width="1" height="253" fill="#fff" fill-opacity="0.03"/><rect x="427" width="1" height="253" fill="#fff" fill-opacity="0.04"/><rect x="428" width="1" height="253" fill="#fff" fill-opacity="0.02"/><rect x="429" width="1" height="253" fill="#fff" fill-opacity="0.01"/><rect x="430" width="1" height="253" fill="#000" fill-opacity="0.03"/><rect x="431" width="1" height="253" fill="#fff" fill-opacity="0.03"/><rect x="433" width="1" height="253" fill="#fff" fill-opacity="0.05"/><rect x="435" width="1" height="253" fill="#000" fill-opacity="0.02"/><rect x="436" width="1" height="253" fill="#fff" fill-opacity="0.07"/><rect x="438" width="1" height="253" fill="#fff" fill-opacity="0.08"/><rect x="439" width="1" height="253" fill="#000" fill-opacity="0.23"/><rect x="442" width="1" height="253" fill="#000" fill-opacity="0.05"/><rect x="443" width="1" height="253" fill="#000" fill-opacity="0.08"/><rect x="444" width="1" height="253" fill="#000" fill-opacity="0.02"/><rect x="445" width="1" height="253" fill="#000" fill-opacity="0.09"/><rect x="447" width="1" height="253" fill="#fff" fill-opacity="0.15"/><rect x="449" width="1" height="253" fill="#000" fill-opacity="0.05"/><rect x="450" width="1" height="253" fill="#000" fill-opacity="0.02"/><rect x="451" width="1" height="253" fill="#fff" fill-opacity="0.05"/><rect x="452" width="1" height="253" fill="#000" fill-opacity="0.03"/><rect x="453" width="1" height="253" fill="#fff" fill-opacity="0.04"/><rect x="454" width="1" height="253" fill="#fff" fill-opacity="0.11"/><rect x="456" width="1" height="253" fill="#fff" fill-opacity="0.03"/><rect x="459" width="1" height="253" fill="#000" fill-opacity="0.03"/><rect x="460" width="1" height="253" fill="#000" fill-opacity="0.04"/><rect x="461" width="1" height="253" fill="#fff" fill-opacity="0.04"/><rect x="462" width="1" height="253" fill="#fff" fill-opacity="0.03"/><rect x="463" width="1" height="253" fill="#000" fill-opacity="0.03"/><rect x="466" width="1" height="253" fill="#fff" fill-opacity="0.01"/><rect x="469" width="1" height="253" fill="#fff" fill-opacity="0.14"/><rect x="470" width="1" height="253" fill="#000" fill-opacity="0.04"/><rect x="471" width="1" height="253" fill="#000" fill-opacity="0.04"/><rect x="472" width="1" height="253" fill="#fff" fill-opacity="0.01"/><rect x="473" width="1" height="253" fill="#fff" fill-opacity="0.11"/><rect x="474" width="1" height="253" fill="#000" fill-opacity="0.06"/><rect x="475" width="1" height="253" fill="#fff" fill-opacity="0.01"/><rect x="476" width="1" height="253" fill="#fff" fill-opacity="0.05"/><rect x="477" width="1" height="253" fill="#fff" fill-opacity="0.02"/><rect x="479" width="1" height="253" fill="#000" fill-opacity="0.26"/><rect x="480" width="1" height="253" fill="#000" fill-opacity="0.09"/><rect x="483" width="1" height="253" fill="#fff" fill-opacity="0.03"/><rect x="484" width="1" height="253" fill="#fff" fill-opacity="0.16"/><rect x="485" width="1" height="253" fill="#fff" fill-opacity="0.02"/><rect x="486" width="1" height="253" fill="#000" fill-opacity="0.01"/><rect x="487" width="1" height="253" fill="#000" fill-opacity="0.02"/><rect x="488" width="1" height="253" fill="#000" fill-opacity="0.02"/><rect x="489" width="1" height="253" fill="#000" fill-opacity="0.04"/><rect x="490" width="1" height="253" fill="#fff" fill-opacity="0.02"/><rect x="491" width="1" height="253" fill="#fff" fill-opacity="0.02"/><rect x="492" width="1" height="253" fill="#fff" fill-opacity="0.04"/><rect x="493" width="1" height="253" fill="#000" fill-opacity="0.03"/><rect x="494" width="1" height="253" fill="#fff" fill-opacity="0.02"/><rect x="495" width="1" height="253" fill="#fff" fill-opacity="0.04"/><rect x="496" width="1" height="253" fill="#000" fill-opacity="0.05"/><rect x="497" width="1" height="253" fill="#fff" fill-opacity="0.07"/><rect x="498" width="1" height="253" fill="#fff" fill-opacity="0.08"/><rect x="499" width="1" height="253" fill="#000" fill-opacity="0.08"/><rect x="500" width="1" height="253" fill="#fff" fill-opacity="0.05"/><rect x="501" width="1" height="253" fill="#fff" fill-opacity="0.03"/><rect x="502" width="1" height="253" fill="#fff" fill-opacity="0.10"/><rect x="503" width="1" height="253" fill="#fff" fill-opacity="0.03"/><rect x="505" width="1" height="253" fill="#000" fill-opacity="0.03"/><rect x="506" width="1" height="253" fill="#fff" fill-opacity="0.01"/><rect x="509" width="1" height="253" fill="#000" fill-opacity="0.01"/><rect x="510" width="1" height="253" fill="#fff" fill-opacity="0.07"/><rect x="511" width="1" height="253" fill="#000" fill-opacity="0.02"/><rect x="512" width="1" height="253" fill="#fff" fill-opacity="0.03"/><rect x="513" width="1" height="253" fill="#000" fill-opacity="0.18"/><rect x="515" width="1" height="253" fill="#fff" fill-opacity="0.02"/><rect x="516" width="1" height="253" fill="#fff" fill-opacity="0.19"/><rect x="517" width="1" height="253" fill="#fff" fill-opacity="0.12"/><rect x="518" width="1" height="253" fill="#fff" fill-opacity="0.10"/><rect x="519" width="1" height="253" fill="#fff" fill-opacity="0.06"/><rect x="521" width="1" height="253" fill="#fff" fill-opacity="0.05"/><rect x="522" width="1" height="253" fill="#fff" fill-opacity="0.01"/><rect x="523" width="1" height="253" fill="#fff" fill-opacity="0.05"/><rect x="524" width="1" height="253" fill="#000" fill-opacity="0.06"/><rect x="525" width="1" height="253" fill="#000" fill-opacity="0.07"/><rect x="526" width="1" height="253" fill="#fff" fill-opacity="0.13"/><rect x="528" width="1" height="253" fill="#000" fill-opacity="0.08"/><rect x="529" width="1" height="253" fill="#fff" fill-opacity="0.03"/><rect x="530" width="1" height="253" fill="#000" fill-opacity="0.01"/><rect x="531" width="1" height="253" fill="#fff" fill-opacity="0.05"/><rect x="532" width="1" height="253" fill="#000" fill-opacity="0.02"/><rect x="533" width="1" height="253" fill="#000" fill-opacity="0.09"/><rect x="534" width="1" height="253" fill="#fff" fill-opacity="0.09"/><rect x="535" width="1" height="253" fill="#000" fill-opacity="0.12"/><rect x="536" width="1" height="253" fill="#000" fill-opacity="0.06"/><rect x="537" width="1" height="253" fill="#000" fill-opacity="0.06"/><rect x="538" width="1" height="253" fill="#000" fill-opacity="0.08"/><rect x="539" width="1" height="253" fill="#fff" fill-opacity="0.01"/><rect x="540" width="1" height="253" fill="#fff" fill-opacity="0.03"/><rect x="541" width="1" height="253" fill="#000" fill-opacity="0.09"/><rect x="542" width="1" height="253" fill="#000" fill-opacity="0.13"/><rect x="543" width="1" height="253" fill="#000" fill-opacity="0.18"/><rect x="544" width="1" height="253" fill="#000" fill-opacity="0.24"/><rect x="545" width="1" height="253" fill="#000" fill-opacity="0.16"/><rect x="546" width="1" height="253" fill="#000" fill-opacity="0.22"/><rect x="547" width="1" height="253" fill="#000" fill-opacity="0.12"/><rect x="548" width="1" height="253" fill="#000" fill-opacity="0.30"/><rect x="549" width="1" height="253" fill="#000" fill-opacity="0.16"/><rect x="550" width="1" height="253" fill="#000" fill-opacity="0.47"/><rect x="551" width="1" height="253" fill="#000" fill-opacity="0.30"/></g></svg>
<div class="a" style="left:296px;top:490px;width:552px;height:1px;background:#8c8c8c;"></div>
<div class="a" style="left:296px;top:491px;width:552px;height:1px;background:#050505;"></div>
<svg class="a" style="left:296px;top:492px;" width="552" height="252" viewBox="0 0 552 252"><defs><linearGradient id="gbg" x1="0" y1="0" x2="0" y2="1"><stop offset="0.000" stop-color="rgb(61,61,61)"/><stop offset="0.025" stop-color="rgb(62,62,62)"/><stop offset="0.050" stop-color="rgb(63,63,63)"/><stop offset="0.075" stop-color="rgb(65,65,65)"/><stop offset="0.100" stop-color="rgb(66,66,66)"/><stop offset="0.125" stop-color="rgb(67,67,67)"/><stop offset="0.150" stop-color="rgb(68,68,68)"/><stop offset="0.175" stop-color="rgb(69,69,69)"/><stop offset="0.200" stop-color="rgb(70,70,70)"/><stop offset="0.225" stop-color="rgb(72,72,72)"/><stop offset="0.250" stop-color="rgb(73,73,73)"/><stop offset="0.275" stop-color="rgb(74,74,74)"/><stop offset="0.300" stop-color="rgb(75,75,75)"/><stop offset="0.325" stop-color="rgb(77,77,77)"/><stop offset="0.350" stop-color="rgb(78,78,78)"/><stop offset="0.375" stop-color="rgb(80,80,80)"/><stop offset="0.400" stop-color="rgb(82,82,82)"/><stop offset="0.425" stop-color="rgb(85,85,85)"/><stop offset="0.450" stop-color="rgb(89,89,89)"/><stop offset="0.475" stop-color="rgb(93,93,93)"/><stop offset="0.500" stop-color="rgb(99,99,99)"/><stop offset="0.525" stop-color="rgb(106,106,106)"/><stop offset="0.550" stop-color="rgb(114,114,114)"/><stop offset="0.575" stop-color="rgb(123,123,123)"/><stop offset="0.600" stop-color="rgb(130,130,130)"/><stop offset="0.625" stop-color="rgb(136,136,136)"/><stop offset="0.650" stop-color="rgb(140,140,140)"/><stop offset="0.675" stop-color="rgb(144,144,144)"/><stop offset="0.700" stop-color="rgb(147,147,147)"/><stop offset="0.725" stop-color="rgb(149,149,149)"/><stop offset="0.750" stop-color="rgb(151,151,151)"/><stop offset="0.775" stop-color="rgb(152,152,152)"/><stop offset="0.800" stop-color="rgb(154,154,154)"/><stop offset="0.825" stop-color="rgb(155,155,155)"/><stop offset="0.850" stop-color="rgb(156,156,156)"/><stop offset="0.875" stop-color="rgb(157,157,157)"/><stop offset="0.900" stop-color="rgb(159,159,159)"/><stop offset="0.925" stop-color="rgb(160,160,160)"/><stop offset="0.950" stop-color="rgb(161,161,161)"/><stop offset="0.975" stop-color="rgb(162,162,162)"/><stop offset="1.000" stop-color="rgb(163,163,163)"/></linearGradient><linearGradient id="gbm" x1="0" y1="0" x2="0" y2="1"><stop offset="0" stop-color="#fff" stop-opacity="0.35"/><stop offset="0.6" stop-color="#fff" stop-opacity="0.8"/><stop offset="1" stop-color="#fff" stop-opacity="1"/></linearGradient><filter id="gbf" x="0" y="0" width="1" height="1" color-interpolation-filters="sRGB"><feTurbulence type="fractalNoise" baseFrequency="0.45 0.003" numOctaves="2" seed="9" result="t1"/><feColorMatrix in="t1" type="matrix" values="1 0 0 0 0 1 0 0 0 0 1 0 0 0 0 0 0 0 0 1" result="c1"/><feTurbulence type="fractalNoise" baseFrequency="0.9 0.2" numOctaves="1" seed="16" result="t2"/><feColorMatrix in="t2" type="matrix" values="1 0 0 0 0 1 0 0 0 0 1 0 0 0 0 0 0 0 0 1" result="c2"/><feComposite in="c1" in2="c2" operator="arithmetic" k1="0" k2="0.8" k3="0.4" k4="-0.10000000000000009" result="n"/><feComposite in="SourceGraphic" in2="n" operator="arithmetic" k1="0" k2="1" k3="1" k4="-0.5" result="s"/><feComponentTransfer in="s"><feFuncR type="table" tableValues="0.000 0.039 0.118 0.243 0.412 0.608 0.804 0.933 1.000 1.000 1.000"/><feFuncG type="table" tableValues="0.000 0.016 0.031 0.039 0.055 0.063 0.078 0.125 0.392 0.745 0.961"/><feFuncB type="table" tableValues="0.000 0.110 0.216 0.345 0.439 0.424 0.282 0.118 0.086 0.243 0.667"/><feFuncA type="identity"/></feComponentTransfer></filter></defs><g filter="url(#gbf)"><rect width="552" height="252" fill="url(#gbg)"/><rect x="0" width="1" height="252" fill="#000" fill-opacity="0.04"/><rect x="2" width="1" height="252" fill="#fff" fill-opacity="0.05"/><rect x="3" width="1" height="252" fill="#fff" fill-opacity="0.14"/><rect x="6" width="1" height="252" fill="#000" fill-opacity="0.06"/><rect x="7" width="1" height="252" fill="#fff" fill-opacity="0.02"/><rect x="8" width="1" height="252" fill="#fff" fill-opacity="0.04"/><rect x="9" width="1" height="252" fill="#fff" fill-opacity="0.03"/><rect x="11" width="1" height="252" fill="#fff" fill-opacity="0.08"/><rect x="12" width="1" height="252" fill="#000" fill-opacity="0.03"/><rect x="13" width="1" height="252" fill="#fff" fill-opacity="0.06"/><rect x="15" width="1" height="252" fill="#fff" fill-opacity="0.03"/><rect x="16" width="1" height="252" fill="#fff" fill-opacity="0.18"/><rect x="17" width="1" height="252" fill="#000" fill-opacity="0.05"/><rect x="18" width="1" height="252" fill="#fff" fill-opacity="0.04"/><rect x="19" width="1" height="252" fill="#fff" fill-opacity="0.14"/><rect x="20" width="1" height="252" fill="#fff" fill-opacity="0.04"/><rect x="21" width="1" height="252" fill="#fff" fill-opacity="0.04"/><rect x="22" width="1" height="252" fill="#fff" fill-opacity="0.02"/><rect x="23" width="1" height="252" fill="#000" fill-opacity="0.16"/><rect x="24" width="1" height="252" fill="#000" fill-opacity="0.09"/><rect x="26" width="1" height="252" fill="#000" fill-opacity="0.01"/><rect x="27" width="1" height="252" fill="#000" fill-opacity="0.01"/><rect x="28" width="1" height="252" fill="#fff" fill-opacity="0.06"/><rect x="29" width="1" height="252" fill="#000" fill-opacity="0.06"/><rect x="30" width="1" height="252" fill="#fff" fill-opacity="0.02"/><rect x="31" width="1" height="252" fill="#fff" fill-opacity="0.03"/><rect x="32" width="1" height="252" fill="#fff" fill-opacity="0.05"/><rect x="33" width="1" height="252" fill="#fff" fill-opacity="0.04"/><rect x="36" width="1" height="252" fill="#fff" fill-opacity="0.06"/><rect x="37" width="1" height="252" fill="#000" fill-opacity="0.04"/><rect x="38" width="1" height="252" fill="#000" fill-opacity="0.04"/><rect x="39" width="1" height="252" fill="#000" fill-opacity="0.02"/><rect x="42" width="1" height="252" fill="#000" fill-opacity="0.03"/><rect x="43" width="1" height="252" fill="#fff" fill-opacity="0.01"/><rect x="44" width="1" height="252" fill="#fff" fill-opacity="0.19"/><rect x="45" width="1" height="252" fill="#000" fill-opacity="0.20"/><rect x="46" width="1" height="252" fill="#fff" fill-opacity="0.02"/><rect x="47" width="1" height="252" fill="#000" fill-opacity="0.04"/><rect x="49" width="1" height="252" fill="#000" fill-opacity="0.04"/><rect x="50" width="1" height="252" fill="#000" fill-opacity="0.03"/><rect x="51" width="1" height="252" fill="#fff" fill-opacity="0.02"/><rect x="52" width="1" height="252" fill="#000" fill-opacity="0.01"/><rect x="53" width="1" height="252" fill="#000" fill-opacity="0.02"/><rect x="54" width="1" height="252" fill="#fff" fill-opacity="0.10"/><rect x="55" width="1" height="252" fill="#fff" fill-opacity="0.03"/><rect x="56" width="1" height="252" fill="#000" fill-opacity="0.10"/><rect x="58" width="1" height="252" fill="#000" fill-opacity="0.04"/><rect x="59" width="1" height="252" fill="#fff" fill-opacity="0.04"/><rect x="60" width="1" height="252" fill="#fff" fill-opacity="0.03"/><rect x="61" width="1" height="252" fill="#fff" fill-opacity="0.17"/><rect x="63" width="1" height="252" fill="#000" fill-opacity="0.01"/><rect x="65" width="1" height="252" fill="#000" fill-opacity="0.04"/><rect x="66" width="1" height="252" fill="#000" fill-opacity="0.01"/><rect x="67" width="1" height="252" fill="#000" fill-opacity="0.07"/><rect x="68" width="1" height="252" fill="#fff" fill-opacity="0.01"/><rect x="70" width="1" height="252" fill="#000" fill-opacity="0.01"/><rect x="71" width="1" height="252" fill="#000" fill-opacity="0.01"/><rect x="72" width="1" height="252" fill="#fff" fill-opacity="0.02"/><rect x="74" width="1" height="252" fill="#000" fill-opacity="0.02"/><rect x="75" width="1" height="252" fill="#fff" fill-opacity="0.02"/><rect x="76" width="1" height="252" fill="#000" fill-opacity="0.34"/><rect x="77" width="1" height="252" fill="#000" fill-opacity="0.02"/><rect x="78" width="1" height="252" fill="#000" fill-opacity="0.05"/><rect x="79" width="1" height="252" fill="#000" fill-opacity="0.01"/><rect x="80" width="1" height="252" fill="#fff" fill-opacity="0.05"/><rect x="81" width="1" height="252" fill="#fff" fill-opacity="0.02"/><rect x="82" width="1" height="252" fill="#fff" fill-opacity="0.13"/><rect x="83" width="1" height="252" fill="#000" fill-opacity="0.06"/><rect x="84" width="1" height="252" fill="#fff" fill-opacity="0.08"/><rect x="86" width="1" height="252" fill="#fff" fill-opacity="0.02"/><rect x="87" width="1" height="252" fill="#000" fill-opacity="0.02"/><rect x="88" width="1" height="252" fill="#000" fill-opacity="0.27"/><rect x="89" width="1" height="252" fill="#000" fill-opacity="0.06"/><rect x="90" width="1" height="252" fill="#fff" fill-opacity="0.09"/><rect x="91" width="1" height="252" fill="#000" fill-opacity="0.04"/><rect x="93" width="1" height="252" fill="#fff" fill-opacity="0.01"/><rect x="98" width="1" height="252" fill="#fff" fill-opacity="0.12"/><rect x="99" width="1" height="252" fill="#fff" fill-opacity="0.10"/><rect x="101" width="1" height="252" fill="#fff" fill-opacity="0.07"/><rect x="102" width="1" height="252" fill="#fff" fill-opacity="0.02"/><rect x="103" width="1" height="252" fill="#fff" fill-opacity="0.01"/><rect x="104" width="1" height="252" fill="#000" fill-opacity="0.05"/><rect x="105" width="1" height="252" fill="#fff" fill-opacity="0.05"/><rect x="106" width="1" height="252" fill="#000" fill-opacity="0.04"/><rect x="107" width="1" height="252" fill="#fff" fill-opacity="0.04"/><rect x="108" width="1" height="252" fill="#000" fill-opacity="0.03"/><rect x="110" width="1" height="252" fill="#fff" fill-opacity="0.02"/><rect x="111" width="1" height="252" fill="#fff" fill-opacity="0.12"/><rect x="112" width="1" height="252" fill="#fff" fill-opacity="0.03"/><rect x="113" width="1" height="252" fill="#fff" fill-opacity="0.07"/><rect x="114" width="1" height="252" fill="#000" fill-opacity="0.02"/><rect x="115" width="1" height="252" fill="#fff" fill-opacity="0.07"/><rect x="116" width="1" height="252" fill="#fff" fill-opacity="0.08"/><rect x="117" width="1" height="252" fill="#000" fill-opacity="0.05"/><rect x="118" width="1" height="252" fill="#fff" fill-opacity="0.02"/><rect x="120" width="1" height="252" fill="#000" fill-opacity="0.04"/><rect x="121" width="1" height="252" fill="#000" fill-opacity="0.03"/><rect x="122" width="1" height="252" fill="#000" fill-opacity="0.02"/><rect x="123" width="1" height="252" fill="#fff" fill-opacity="0.02"/><rect x="124" width="1" height="252" fill="#000" fill-opacity="0.04"/><rect x="125" width="1" height="252" fill="#000" fill-opacity="0.03"/><rect x="126" width="1" height="252" fill="#000" fill-opacity="0.03"/><rect x="127" width="1" height="252" fill="#fff" fill-opacity="0.02"/><rect x="128" width="1" height="252" fill="#fff" fill-opacity="0.02"/><rect x="129" width="1" height="252" fill="#fff" fill-opacity="0.06"/><rect x="130" width="1" height="252" fill="#000" fill-opacity="0.03"/><rect x="131" width="1" height="252" fill="#000" fill-opacity="0.03"/><rect x="133" width="1" height="252" fill="#000" fill-opacity="0.08"/><rect x="134" width="1" height="252" fill="#000" fill-opacity="0.24"/><rect x="136" width="1" height="252" fill="#fff" fill-opacity="0.02"/><rect x="137" width="1" height="252" fill="#000" fill-opacity="0.03"/><rect x="138" width="1" height="252" fill="#fff" fill-opacity="0.05"/><rect x="139" width="1" height="252" fill="#fff" fill-opacity="0.04"/><rect x="141" width="1" height="252" fill="#000" fill-opacity="0.16"/><rect x="143" width="1" height="252" fill="#fff" fill-opacity="0.02"/><rect x="144" width="1" height="252" fill="#000" fill-opacity="0.02"/><rect x="145" width="1" height="252" fill="#000" fill-opacity="0.03"/><rect x="146" width="1" height="252" fill="#fff" fill-opacity="0.04"/><rect x="147" width="1" height="252" fill="#fff" fill-opacity="0.05"/><rect x="148" width="1" height="252" fill="#000" fill-opacity="0.02"/><rect x="149" width="1" height="252" fill="#fff" fill-opacity="0.04"/><rect x="150" width="1" height="252" fill="#000" fill-opacity="0.18"/><rect x="151" width="1" height="252" fill="#000" fill-opacity="0.24"/><rect x="152" width="1" height="252" fill="#fff" fill-opacity="0.04"/><rect x="153" width="1" height="252" fill="#000" fill-opacity="0.04"/><rect x="155" width="1" height="252" fill="#fff" fill-opacity="0.02"/><rect x="157" width="1" height="252" fill="#fff" fill-opacity="0.04"/><rect x="158" width="1" height="252" fill="#000" fill-opacity="0.04"/><rect x="159" width="1" height="252" fill="#000" fill-opacity="0.20"/><rect x="160" width="1" height="252" fill="#fff" fill-opacity="0.12"/><rect x="161" width="1" height="252" fill="#000" fill-opacity="0.06"/><rect x="162" width="1" height="252" fill="#000" fill-opacity="0.08"/><rect x="163" width="1" height="252" fill="#000" fill-opacity="0.02"/><rect x="164" width="1" height="252" fill="#000" fill-opacity="0.02"/><rect x="165" width="1" height="252" fill="#000" fill-opacity="0.04"/><rect x="166" width="1" height="252" fill="#fff" fill-opacity="0.06"/><rect x="167" width="1" height="252" fill="#fff" fill-opacity="0.12"/><rect x="168" width="1" height="252" fill="#000" fill-opacity="0.04"/><rect x="169" width="1" height="252" fill="#fff" fill-opacity="0.03"/><rect x="170" width="1" height="252" fill="#000" fill-opacity="0.08"/><rect x="171" width="1" height="252" fill="#fff" fill-opacity="0.09"/><rect x="172" width="1" height="252" fill="#fff" fill-opacity="0.05"/><rect x="173" width="1" height="252" fill="#000" fill-opacity="0.04"/><rect x="174" width="1" height="252" fill="#000" fill-opacity="0.09"/><rect x="175" width="1" height="252" fill="#000" fill-opacity="0.02"/><rect x="176" width="1" height="252" fill="#fff" fill-opacity="0.18"/><rect x="178" width="1" height="252" fill="#fff" fill-opacity="0.02"/><rect x="179" width="1" height="252" fill="#fff" fill-opacity="0.07"/><rect x="181" width="1" height="252" fill="#fff" fill-opacity="0.01"/><rect x="182" width="1" height="252" fill="#000" fill-opacity="0.27"/><rect x="183" width="1" height="252" fill="#fff" fill-opacity="0.03"/><rect x="184" width="1" height="252" fill="#000" fill-opacity="0.02"/><rect x="185" width="1" height="252" fill="#000" fill-opacity="0.01"/><rect x="186" width="1" height="252" fill="#000" fill-opacity="0.07"/><rect x="187" width="1" height="252" fill="#000" fill-opacity="0.04"/><rect x="188" width="1" height="252" fill="#fff" fill-opacity="0.02"/><rect x="189" width="1" height="252" fill="#fff" fill-opacity="0.03"/><rect x="190" width="1" height="252" fill="#000" fill-opacity="0.01"/><rect x="191" width="1" height="252" fill="#fff" fill-opacity="0.04"/><rect x="192" width="1" height="252" fill="#000" fill-opacity="0.01"/><rect x="193" width="1" height="252" fill="#000" fill-opacity="0.01"/><rect x="195" width="1" height="252" fill="#fff" fill-opacity="0.06"/><rect x="196" width="1" height="252" fill="#fff" fill-opacity="0.16"/><rect x="198" width="1" height="252" fill="#000" fill-opacity="0.18"/><rect x="199" width="1" height="252" fill="#000" fill-opacity="0.02"/><rect x="200" width="1" height="252" fill="#000" fill-opacity="0.01"/><rect x="201" width="1" height="252" fill="#fff" fill-opacity="0.03"/><rect x="202" width="1" height="252" fill="#fff" fill-opacity="0.04"/><rect x="203" width="1" height="252" fill="#000" fill-opacity="0.02"/><rect x="204" width="1" height="252" fill="#000" fill-opacity="0.18"/><rect x="205" width="1" height="252" fill="#000" fill-opacity="0.03"/><rect x="208" width="1" height="252" fill="#000" fill-opacity="0.03"/><rect x="209" width="1" height="252" fill="#fff" fill-opacity="0.18"/><rect x="210" width="1" height="252" fill="#fff" fill-opacity="0.11"/><rect x="211" width="1" height="252" fill="#000" fill-opacity="0.09"/><rect x="212" width="1" height="252" fill="#fff" fill-opacity="0.02"/><rect x="213" width="1" height="252" fill="#000" fill-opacity="0.03"/><rect x="214" width="1" height="252" fill="#000" fill-opacity="0.03"/><rect x="215" width="1" height="252" fill="#000" fill-opacity="0.21"/><rect x="216" width="1" height="252" fill="#000" fill-opacity="0.02"/><rect x="217" width="1" height="252" fill="#fff" fill-opacity="0.04"/><rect x="218" width="1" height="252" fill="#fff" fill-opacity="0.09"/><rect x="219" width="1" height="252" fill="#000" fill-opacity="0.01"/><rect x="220" width="1" height="252" fill="#000" fill-opacity="0.01"/><rect x="221" width="1" height="252" fill="#000" fill-opacity="0.03"/><rect x="222" width="1" height="252" fill="#fff" fill-opacity="0.09"/><rect x="223" width="1" height="252" fill="#fff" fill-opacity="0.04"/><rect x="224" width="1" height="252" fill="#fff" fill-opacity="0.02"/><rect x="225" width="1" height="252" fill="#fff" fill-opacity="0.05"/><rect x="228" width="1" height="252" fill="#fff" fill-opacity="0.10"/><rect x="229" width="1" height="252" fill="#000" fill-opacity="0.04"/><rect x="231" width="1" height="252" fill="#000" fill-opacity="0.15"/><rect x="232" width="1" height="252" fill="#000" fill-opacity="0.02"/><rect x="233" width="1" height="252" fill="#000" fill-opacity="0.01"/><rect x="234" width="1" height="252" fill="#000" fill-opacity="0.02"/><rect x="235" width="1" height="252" fill="#fff" fill-opacity="0.10"/><rect x="236" width="1" height="252" fill="#000" fill-opacity="0.06"/><rect x="238" width="1" height="252" fill="#fff" fill-opacity="0.02"/><rect x="239" width="1" height="252" fill="#000" fill-opacity="0.02"/><rect x="240" width="1" height="252" fill="#000" fill-opacity="0.07"/><rect x="241" width="1" height="252" fill="#fff" fill-opacity="0.01"/><rect x="242" width="1" height="252" fill="#000" fill-opacity="0.03"/><rect x="243" width="1" height="252" fill="#000" fill-opacity="0.06"/><rect x="244" width="1" height="252" fill="#fff" fill-opacity="0.09"/><rect x="245" width="1" height="252" fill="#000" fill-opacity="0.03"/><rect x="247" width="1" height="252" fill="#000" fill-opacity="0.02"/><rect x="248" width="1" height="252" fill="#000" fill-opacity="0.02"/><rect x="250" width="1" height="252" fill="#000" fill-opacity="0.09"/><rect x="251" width="1" height="252" fill="#000" fill-opacity="0.20"/><rect x="253" width="1" height="252" fill="#000" fill-opacity="0.02"/><rect x="254" width="1" height="252" fill="#000" fill-opacity="0.24"/><rect x="255" width="1" height="252" fill="#000" fill-opacity="0.02"/><rect x="256" width="1" height="252" fill="#000" fill-opacity="0.05"/><rect x="257" width="1" height="252" fill="#fff" fill-opacity="0.02"/><rect x="259" width="1" height="252" fill="#000" fill-opacity="0.02"/><rect x="260" width="1" height="252" fill="#000" fill-opacity="0.02"/><rect x="261" width="1" height="252" fill="#fff" fill-opacity="0.04"/><rect x="262" width="1" height="252" fill="#000" fill-opacity="0.03"/><rect x="263" width="1" height="252" fill="#000" fill-opacity="0.08"/><rect x="264" width="1" height="252" fill="#fff" fill-opacity="0.02"/><rect x="265" width="1" height="252" fill="#fff" fill-opacity="0.07"/><rect x="266" width="1" height="252" fill="#000" fill-opacity="0.07"/><rect x="267" width="1" height="252" fill="#000" fill-opacity="0.15"/><rect x="268" width="1" height="252" fill="#fff" fill-opacity="0.04"/><rect x="269" width="1" height="252" fill="#fff" fill-opacity="0.07"/><rect x="270" width="1" height="252" fill="#fff" fill-opacity="0.02"/><rect x="271" width="1" height="252" fill="#000" fill-opacity="0.02"/><rect x="272" width="1" height="252" fill="#fff" fill-opacity="0.06"/><rect x="273" width="1" height="252" fill="#fff" fill-opacity="0.18"/><rect x="274" width="1" height="252" fill="#fff" fill-opacity="0.06"/><rect x="275" width="1" height="252" fill="#fff" fill-opacity="0.04"/><rect x="276" width="1" height="252" fill="#000" fill-opacity="0.02"/><rect x="277" width="1" height="252" fill="#fff" fill-opacity="0.02"/><rect x="279" width="1" height="252" fill="#000" fill-opacity="0.05"/><rect x="281" width="1" height="252" fill="#000" fill-opacity="0.03"/><rect x="283" width="1" height="252" fill="#fff" fill-opacity="0.12"/><rect x="284" width="1" height="252" fill="#fff" fill-opacity="0.05"/><rect x="286" width="1" height="252" fill="#000" fill-opacity="0.06"/><rect x="287" width="1" height="252" fill="#000" fill-opacity="0.04"/><rect x="289" width="1" height="252" fill="#000" fill-opacity="0.02"/><rect x="290" width="1" height="252" fill="#fff" fill-opacity="0.05"/><rect x="291" width="1" height="252" fill="#fff" fill-opacity="0.07"/><rect x="292" width="1" height="252" fill="#000" fill-opacity="0.04"/><rect x="294" width="1" height="252" fill="#fff" fill-opacity="0.07"/><rect x="295" width="1" height="252" fill="#000" fill-opacity="0.06"/><rect x="296" width="1" height="252" fill="#fff" fill-opacity="0.13"/><rect x="297" width="1" height="252" fill="#000" fill-opacity="0.01"/><rect x="298" width="1" height="252" fill="#fff" fill-opacity="0.04"/><rect x="299" width="1" height="252" fill="#fff" fill-opacity="0.06"/><rect x="300" width="1" height="252" fill="#fff" fill-opacity="0.05"/><rect x="301" width="1" height="252" fill="#fff" fill-opacity="0.07"/><rect x="302" width="1" height="252" fill="#fff" fill-opacity="0.08"/><rect x="303" width="1" height="252" fill="#fff" fill-opacity="0.04"/><rect x="304" width="1" height="252" fill="#000" fill-opacity="0.02"/><rect x="305" width="1" height="252" fill="#000" fill-opacity="0.05"/><rect x="306" width="1" height="252" fill="#000" fill-opacity="0.01"/><rect x="307" width="1" height="252" fill="#fff" fill-opacity="0.06"/><rect x="309" width="1" height="252" fill="#fff" fill-opacity="0.04"/><rect x="310" width="1" height="252" fill="#000" fill-opacity="0.26"/><rect x="311" width="1" height="252" fill="#000" fill-opacity="0.05"/><rect x="313" width="1" height="252" fill="#000" fill-opacity="0.05"/><rect x="315" width="1" height="252" fill="#000" fill-opacity="0.15"/><rect x="317" width="1" height="252" fill="#000" fill-opacity="0.20"/><rect x="318" width="1" height="252" fill="#fff" fill-opacity="0.18"/><rect x="319" width="1" height="252" fill="#000" fill-opacity="0.05"/><rect x="320" width="1" height="252" fill="#fff" fill-opacity="0.02"/><rect x="321" width="1" height="252" fill="#000" fill-opacity="0.05"/><rect x="322" width="1" height="252" fill="#fff" fill-opacity="0.03"/><rect x="324" width="1" height="252" fill="#000" fill-opacity="0.21"/><rect x="325" width="1" height="252" fill="#fff" fill-opacity="0.02"/><rect x="326" width="1" height="252" fill="#000" fill-opacity="0.03"/><rect x="327" width="1" height="252" fill="#000" fill-opacity="0.01"/><rect x="328" width="1" height="252" fill="#000" fill-opacity="0.03"/><rect x="330" width="1" height="252" fill="#fff" fill-opacity="0.06"/><rect x="331" width="1" height="252" fill="#fff" fill-opacity="0.02"/><rect x="332" width="1" height="252" fill="#000" fill-opacity="0.03"/><rect x="333" width="1" height="252" fill="#000" fill-opacity="0.09"/><rect x="334" width="1" height="252" fill="#fff" fill-opacity="0.02"/><rect x="335" width="1" height="252" fill="#fff" fill-opacity="0.05"/><rect x="337" width="1" height="252" fill="#fff" fill-opacity="0.01"/><rect x="339" width="1" height="252" fill="#000" fill-opacity="0.06"/><rect x="341" width="1" height="252" fill="#000" fill-opacity="0.04"/><rect x="342" width="1" height="252" fill="#fff" fill-opacity="0.04"/><rect x="344" width="1" height="252" fill="#000" fill-opacity="0.04"/><rect x="345" width="1" height="252" fill="#fff" fill-opacity="0.01"/><rect x="346" width="1" height="252" fill="#000" fill-opacity="0.03"/><rect x="347" width="1" height="252" fill="#fff" fill-opacity="0.05"/><rect x="349" width="1" height="252" fill="#000" fill-opacity="0.01"/><rect x="350" width="1" height="252" fill="#fff" fill-opacity="0.02"/><rect x="351" width="1" height="252" fill="#fff" fill-opacity="0.02"/><rect x="352" width="1" height="252" fill="#fff" fill-opacity="0.03"/><rect x="354" width="1" height="252" fill="#000" fill-opacity="0.03"/><rect x="355" width="1" height="252" fill="#fff" fill-opacity="0.10"/><rect x="356" width="1" height="252" fill="#fff" fill-opacity="0.06"/><rect x="357" width="1" height="252" fill="#fff" fill-opacity="0.18"/><rect x="358" width="1" height="252" fill="#fff" fill-opacity="0.04"/><rect x="360" width="1" height="252" fill="#000" fill-opacity="0.03"/><rect x="361" width="1" height="252" fill="#000" fill-opacity="0.06"/><rect x="362" width="1" height="252" fill="#000" fill-opacity="0.19"/><rect x="364" width="1" height="252" fill="#000" fill-opacity="0.01"/><rect x="365" width="1" height="252" fill="#fff" fill-opacity="0.09"/><rect x="366" width="1" height="252" fill="#fff" fill-opacity="0.01"/><rect x="368" width="1" height="252" fill="#fff" fill-opacity="0.04"/><rect x="369" width="1" height="252" fill="#000" fill-opacity="0.17"/><rect x="370" width="1" height="252" fill="#fff" fill-opacity="0.01"/><rect x="371" width="1" height="252" fill="#fff" fill-opacity="0.02"/><rect x="372" width="1" height="252" fill="#000" fill-opacity="0.03"/><rect x="373" width="1" height="252" fill="#fff" fill-opacity="0.04"/><rect x="374" width="1" height="252" fill="#fff" fill-opacity="0.06"/><rect x="375" width="1" height="252" fill="#000" fill-opacity="0.02"/><rect x="376" width="1" height="252" fill="#fff" fill-opacity="0.03"/><rect x="378" width="1" height="252" fill="#000" fill-opacity="0.02"/><rect x="379" width="1" height="252" fill="#fff" fill-opacity="0.03"/><rect x="380" width="1" height="252" fill="#000" fill-opacity="0.06"/><rect x="382" width="1" height="252" fill="#000" fill-opacity="0.03"/><rect x="383" width="1" height="252" fill="#fff" fill-opacity="0.03"/><rect x="384" width="1" height="252" fill="#fff" fill-opacity="0.01"/><rect x="385" width="1" height="252" fill="#000" fill-opacity="0.01"/><rect x="386" width="1" height="252" fill="#000" fill-opacity="0.02"/><rect x="387" width="1" height="252" fill="#fff" fill-opacity="0.04"/><rect x="388" width="1" height="252" fill="#000" fill-opacity="0.04"/><rect x="391" width="1" height="252" fill="#fff" fill-opacity="0.01"/><rect x="392" width="1" height="252" fill="#fff" fill-opacity="0.12"/><rect x="393" width="1" height="252" fill="#fff" fill-opacity="0.02"/><rect x="394" width="1" height="252" fill="#fff" fill-opacity="0.06"/><rect x="395" width="1" height="252" fill="#000" fill-opacity="0.02"/><rect x="396" width="1" height="252" fill="#fff" fill-opacity="0.08"/><rect x="397" width="1" height="252" fill="#000" fill-opacity="0.05"/><rect x="400" width="1" height="252" fill="#000" fill-opacity="0.07"/><rect x="402" width="1" height="252" fill="#000" fill-opacity="0.08"/><rect x="403" width="1" height="252" fill="#fff" fill-opacity="0.17"/><rect x="404" width="1" height="252" fill="#fff" fill-opacity="0.02"/><rect x="405" width="1" height="252" fill="#000" fill-opacity="0.07"/><rect x="407" width="1" height="252" fill="#fff" fill-opacity="0.04"/><rect x="408" width="1" height="252" fill="#fff" fill-opacity="0.03"/><rect x="410" width="1" height="252" fill="#fff" fill-opacity="0.02"/><rect x="414" width="1" height="252" fill="#000" fill-opacity="0.02"/><rect x="415" width="1" height="252" fill="#fff" fill-opacity="0.12"/><rect x="417" width="1" height="252" fill="#fff" fill-opacity="0.05"/><rect x="418" width="1" height="252" fill="#fff" fill-opacity="0.07"/><rect x="419" width="1" height="252" fill="#000" fill-opacity="0.02"/><rect x="420" width="1" height="252" fill="#000" fill-opacity="0.01"/><rect x="421" width="1" height="252" fill="#fff" fill-opacity="0.09"/><rect x="422" width="1" height="252" fill="#fff" fill-opacity="0.11"/><rect x="423" width="1" height="252" fill="#fff" fill-opacity="0.04"/><rect x="424" width="1" height="252" fill="#fff" fill-opacity="0.05"/><rect x="425" width="1" height="252" fill="#fff" fill-opacity="0.02"/><rect x="427" width="1" height="252" fill="#000" fill-opacity="0.06"/><rect x="428" width="1" height="252" fill="#fff" fill-opacity="0.01"/><rect x="433" width="1" height="252" fill="#000" fill-opacity="0.14"/><rect x="434" width="1" height="252" fill="#fff" fill-opacity="0.02"/><rect x="435" width="1" height="252" fill="#000" fill-opacity="0.03"/><rect x="436" width="1" height="252" fill="#000" fill-opacity="0.22"/><rect x="437" width="1" height="252" fill="#000" fill-opacity="0.08"/><rect x="439" width="1" height="252" fill="#000" fill-opacity="0.02"/><rect x="440" width="1" height="252" fill="#fff" fill-opacity="0.03"/><rect x="441" width="1" height="252" fill="#fff" fill-opacity="0.05"/><rect x="442" width="1" height="252" fill="#fff" fill-opacity="0.16"/><rect x="443" width="1" height="252" fill="#000" fill-opacity="0.07"/><rect x="444" width="1" height="252" fill="#fff" fill-opacity="0.05"/><rect x="446" width="1" height="252" fill="#000" fill-opacity="0.09"/><rect x="448" width="1" height="252" fill="#fff" fill-opacity="0.14"/><rect x="449" width="1" height="252" fill="#fff" fill-opacity="0.09"/><rect x="450" width="1" height="252" fill="#fff" fill-opacity="0.03"/><rect x="451" width="1" height="252" fill="#fff" fill-opacity="0.07"/><rect x="452" width="1" height="252" fill="#000" fill-opacity="0.05"/><rect x="454" width="1" height="252" fill="#000" fill-opacity="0.25"/><rect x="455" width="1" height="252" fill="#fff" fill-opacity="0.12"/><rect x="457" width="1" height="252" fill="#000" fill-opacity="0.04"/><rect x="458" width="1" height="252" fill="#fff" fill-opacity="0.02"/><rect x="459" width="1" height="252" fill="#fff" fill-opacity="0.08"/><rect x="460" width="1" height="252" fill="#000" fill-opacity="0.01"/><rect x="462" width="1" height="252" fill="#000" fill-opacity="0.02"/><rect x="463" width="1" height="252" fill="#fff" fill-opacity="0.05"/><rect x="465" width="1" height="252" fill="#000" fill-opacity="0.01"/><rect x="466" width="1" height="252" fill="#000" fill-opacity="0.05"/><rect x="467" width="1" height="252" fill="#fff" fill-opacity="0.02"/><rect x="468" width="1" height="252" fill="#000" fill-opacity="0.10"/><rect x="469" width="1" height="252" fill="#fff" fill-opacity="0.02"/><rect x="470" width="1" height="252" fill="#000" fill-opacity="0.06"/><rect x="471" width="1" height="252" fill="#000" fill-opacity="0.02"/><rect x="472" width="1" height="252" fill="#000" fill-opacity="0.03"/><rect x="474" width="1" height="252" fill="#000" fill-opacity="0.01"/><rect x="476" width="1" height="252" fill="#000" fill-opacity="0.01"/><rect x="477" width="1" height="252" fill="#000" fill-opacity="0.02"/><rect x="479" width="1" height="252" fill="#000" fill-opacity="0.02"/><rect x="480" width="1" height="252" fill="#fff" fill-opacity="0.11"/><rect x="483" width="1" height="252" fill="#000" fill-opacity="0.03"/><rect x="485" width="1" height="252" fill="#fff" fill-opacity="0.01"/><rect x="487" width="1" height="252" fill="#000" fill-opacity="0.02"/><rect x="488" width="1" height="252" fill="#fff" fill-opacity="0.08"/><rect x="489" width="1" height="252" fill="#fff" fill-opacity="0.02"/><rect x="490" width="1" height="252" fill="#fff" fill-opacity="0.07"/><rect x="491" width="1" height="252" fill="#000" fill-opacity="0.04"/><rect x="492" width="1" height="252" fill="#fff" fill-opacity="0.16"/><rect x="493" width="1" height="252" fill="#fff" fill-opacity="0.15"/><rect x="494" width="1" height="252" fill="#000" fill-opacity="0.02"/><rect x="495" width="1" height="252" fill="#fff" fill-opacity="0.02"/><rect x="496" width="1" height="252" fill="#000" fill-opacity="0.01"/><rect x="497" width="1" height="252" fill="#000" fill-opacity="0.02"/><rect x="498" width="1" height="252" fill="#fff" fill-opacity="0.02"/><rect x="499" width="1" height="252" fill="#000" fill-opacity="0.04"/><rect x="500" width="1" height="252" fill="#000" fill-opacity="0.07"/><rect x="501" width="1" height="252" fill="#fff" fill-opacity="0.10"/><rect x="502" width="1" height="252" fill="#000" fill-opacity="0.05"/><rect x="504" width="1" height="252" fill="#fff" fill-opacity="0.04"/><rect x="505" width="1" height="252" fill="#000" fill-opacity="0.02"/><rect x="506" width="1" height="252" fill="#fff" fill-opacity="0.08"/><rect x="507" width="1" height="252" fill="#000" fill-opacity="0.25"/><rect x="508" width="1" height="252" fill="#000" fill-opacity="0.03"/><rect x="509" width="1" height="252" fill="#000" fill-opacity="0.02"/><rect x="510" width="1" height="252" fill="#fff" fill-opacity="0.04"/><rect x="511" width="1" height="252" fill="#fff" fill-opacity="0.02"/><rect x="512" width="1" height="252" fill="#fff" fill-opacity="0.02"/><rect x="513" width="1" height="252" fill="#000" fill-opacity="0.04"/><rect x="514" width="1" height="252" fill="#000" fill-opacity="0.04"/><rect x="516" width="1" height="252" fill="#fff" fill-opacity="0.07"/><rect x="517" width="1" height="252" fill="#000" fill-opacity="0.08"/><rect x="518" width="1" height="252" fill="#000" fill-opacity="0.04"/><rect x="519" width="1" height="252" fill="#000" fill-opacity="0.02"/><rect x="520" width="1" height="252" fill="#fff" fill-opacity="0.07"/><rect x="521" width="1" height="252" fill="#fff" fill-opacity="0.03"/><rect x="522" width="1" height="252" fill="#000" fill-opacity="0.05"/><rect x="523" width="1" height="252" fill="#fff" fill-opacity="0.03"/><rect x="524" width="1" height="252" fill="#fff" fill-opacity="0.03"/><rect x="525" width="1" height="252" fill="#000" fill-opacity="0.03"/><rect x="526" width="1" height="252" fill="#fff" fill-opacity="0.07"/><rect x="527" width="1" height="252" fill="#fff" fill-opacity="0.04"/><rect x="528" width="1" height="252" fill="#fff" fill-opacity="0.05"/><rect x="529" width="1" height="252" fill="#fff" fill-opacity="0.01"/><rect x="530" width="1" height="252" fill="#000" fill-opacity="0.06"/><rect x="531" width="1" height="252" fill="#000" fill-opacity="0.01"/><rect x="532" width="1" height="252" fill="#000" fill-opacity="0.20"/><rect x="533" width="1" height="252" fill="#fff" fill-opacity="0.05"/><rect x="534" width="1" height="252" fill="#000" fill-opacity="0.06"/><rect x="535" width="1" height="252" fill="#000" fill-opacity="0.18"/><rect x="536" width="1" height="252" fill="#000" fill-opacity="0.03"/><rect x="537" width="1" height="252" fill="#000" fill-opacity="0.10"/><rect x="538" width="1" height="252" fill="#000" fill-opacity="0.15"/><rect x="539" width="1" height="252" fill="#000" fill-opacity="0.09"/><rect x="540" width="1" height="252" fill="#000" fill-opacity="0.10"/><rect x="541" width="1" height="252" fill="#000" fill-opacity="0.36"/><rect x="542" width="1" height="252" fill="#000" fill-opacity="0.11"/><rect x="543" width="1" height="252" fill="#000" fill-opacity="0.14"/><rect x="544" width="1" height="252" fill="#000" fill-opacity="0.15"/><rect x="545" width="1" height="252" fill="#000" fill-opacity="0.13"/><rect x="546" width="1" height="252" fill="#000" fill-opacity="0.26"/><rect x="547" width="1" height="252" fill="#000" fill-opacity="0.32"/><rect x="548" width="1" height="252" fill="#000" fill-opacity="0.23"/><rect x="549" width="1" height="252" fill="#000" fill-opacity="0.28"/><rect x="550" width="1" height="252" fill="#000" fill-opacity="0.26"/><rect x="551" width="1" height="252" fill="#000" fill-opacity="0.12"/></g></svg>
<div class="a" style="left:737px;top:237px;width:14px;height:253px;background:rgba(225,205,230,0.42);"></div>
<div class="a" style="left:737px;top:237px;width:1.3px;height:253px;background:rgba(255,225,225,0.75);"></div>
<div class="a" style="left:750px;top:237px;width:1.2px;height:253px;background:repeating-linear-gradient(to bottom, rgba(255,255,255,0.8) 0 2px, transparent 2px 4px);"></div>
<div class="a" style="left:738px;top:238px;width:4px;height:3px;background:rgba(230,240,240,0.8);"></div>
<div class="a" style="left:746px;top:238px;width:4px;height:3px;background:rgba(230,240,240,0.8);"></div>
<div class="a" style="left:737px;top:492px;width:14px;height:252px;background:rgba(225,205,230,0.42);"></div>
<div class="a" style="left:737px;top:492px;width:1.3px;height:252px;background:rgba(255,225,225,0.75);"></div>
<div class="a" style="left:750px;top:492px;width:1.2px;height:252px;background:repeating-linear-gradient(to bottom, rgba(255,255,255,0.8) 0 2px, transparent 2px 4px);"></div>
<div class="a" style="left:738px;top:493px;width:4px;height:3px;background:rgba(230,240,240,0.8);"></div>
<div class="a" style="left:746px;top:493px;width:4px;height:3px;background:rgba(230,240,240,0.8);"></div>
<div class="a" style="left:852px;top:237px;width:65px;height:508px;background:#232323;border-right:1.5px solid #0c0c0c"></div>
<div class="a" style="left:852px;top:490px;width:65px;height:2px;background:#0c0c0c;"></div>
<div class="t" style="left:859px;top:239.53px;font-size:10px;color:#b0b0b0;font-weight:bold;transform:scaleX(0.9818);transform-origin:0 0;">Hz</div>
<div class="t" style="left:859px;top:493.54px;font-size:10px;color:#b0b0b0;font-weight:bold;transform:scaleX(0.9818);transform-origin:0 0;">Hz</div>
<div class="t" style="left:859px;top:252.53px;font-size:10px;color:#6e6e6e;transform:scaleX(0.9923);transform-origin:0 0;">21k</div>
<div class="a" style="left:852px;top:257px;width:2px;height:1px;background:#888;"></div>
<div class="t" style="left:859px;top:506.54px;font-size:10px;color:#6e6e6e;transform:scaleX(0.9923);transform-origin:0 0;">21k</div>
<div class="a" style="left:852px;top:511px;width:2px;height:1px;background:#888;"></div>
<div class="t" style="left:859px;top:273.54px;font-size:10px;color:#6e6e6e;transform:scaleX(0.9923);transform-origin:0 0;">20k</div>
<div class="a" style="left:852px;top:278px;width:2px;height:1px;background:#888;"></div>
<div class="t" style="left:859px;top:527.53px;font-size:10px;color:#6e6e6e;transform:scaleX(0.9923);transform-origin:0 0;">20k</div>
<div class="a" style="left:852px;top:532px;width:2px;height:1px;background:#888;"></div>
<div class="t" style="left:859px;top:294.54px;font-size:10px;color:#6e6e6e;transform:scaleX(0.9923);transform-origin:0 0;">19k</div>
<div class="a" style="left:852px;top:299px;width:2px;height:1px;background:#888;"></div>
<div class="t" style="left:859px;top:548.53px;font-size:10px;color:#6e6e6e;transform:scaleX(0.9923);transform-origin:0 0;">19k</div>
<div class="a" style="left:852px;top:553px;width:2px;height:1px;background:#888;"></div>
<div class="t" style="left:859px;top:317.54px;font-size:10px;color:#6e6e6e;transform:scaleX(0.9923);transform-origin:0 0;">18k</div>
<div class="a" style="left:852px;top:322px;width:2px;height:1px;background:#888;"></div>
<div class="t" style="left:859px;top:571.53px;font-size:10px;color:#6e6e6e;transform:scaleX(0.9923);transform-origin:0 0;">18k</div>
<div class="a" style="left:852px;top:576px;width:2px;height:1px;background:#888;"></div>
<div class="t" style="left:859px;top:342.54px;font-size:10px;color:#6e6e6e;transform:scaleX(0.9923);transform-origin:0 0;">17k</div>
<div class="a" style="left:852px;top:347px;width:2px;height:1px;background:#888;"></div>
<div class="t" style="left:859px;top:596.53px;font-size:10px;color:#6e6e6e;transform:scaleX(0.9923);transform-origin:0 0;">17k</div>
<div class="a" style="left:852px;top:601px;width:2px;height:1px;background:#888;"></div>
<div class="t" style="left:859px;top:369.54px;font-size:10px;color:#6e6e6e;transform:scaleX(0.9923);transform-origin:0 0;">16k</div>
<div class="a" style="left:852px;top:374px;width:2px;height:1px;background:#888;"></div>
<div class="t" style="left:859px;top:623.53px;font-size:10px;color:#6e6e6e;transform:scaleX(0.9923);transform-origin:0 0;">16k</div>
<div class="a" style="left:852px;top:628px;width:2px;height:1px;background:#888;"></div>
<div class="t" style="left:859px;top:398.54px;font-size:10px;color:#6e6e6e;transform:scaleX(0.9923);transform-origin:0 0;">15k</div>
<div class="a" style="left:852px;top:403px;width:2px;height:1px;background:#888;"></div>
<div class="t" style="left:859px;top:652.53px;font-size:10px;color:#6e6e6e;transform:scaleX(0.9923);transform-origin:0 0;">15k</div>
<div class="a" style="left:852px;top:657px;width:2px;height:1px;background:#888;"></div>
<div class="t" style="left:859px;top:430.54px;font-size:10px;color:#6e6e6e;transform:scaleX(0.9923);transform-origin:0 0;">14k</div>
<div class="a" style="left:852px;top:435px;width:2px;height:1px;background:#888;"></div>
<div class="t" style="left:859px;top:684.53px;font-size:10px;color:#6e6e6e;transform:scaleX(0.9923);transform-origin:0 0;">14k</div>
<div class="a" style="left:852px;top:689px;width:2px;height:1px;background:#888;"></div>
<div class="t" style="left:859px;top:465.54px;font-size:10px;color:#6e6e6e;transform:scaleX(0.9923);transform-origin:0 0;">13k</div>
<div class="a" style="left:852px;top:470px;width:2px;height:1px;background:#888;"></div>
<div class="t" style="left:859px;top:719.53px;font-size:10px;color:#6e6e6e;transform:scaleX(0.9923);transform-origin:0 0;">13k</div>
<div class="a" style="left:852px;top:724px;width:2px;height:1px;background:#888;"></div>
<div class="a" style="left:290px;top:745px;width:632px;height:32px;background:#232323;"></div>
<div class="t" style="left:298px;top:755.60px;font-size:15px;color:#3b8eea;transform:scaleX(0.9248);transform-origin:0 0;">4:32.222</div>
<svg class="a" style="left:424px;top:757px;" width="9" height="9" viewBox="0 0 9 9"><rect x="0" y="0" width="9" height="9" fill="#4a4a4a"/></svg>
<svg class="a" style="left:451px;top:756px;" width="9" height="11" viewBox="0 0 9 11"><path d="M0.5 0.5 L8.5 5.5 L0.5 10.5 Z" fill="#c8c8c8"/></svg>
<svg class="a" style="left:478px;top:756px;" width="8" height="11" viewBox="0 0 8 11"><rect x="0" y="1" width="2.5" height="9" fill="#4a4a4a"/><rect x="5" y="1" width="2.5" height="9" fill="#4a4a4a"/></svg>
<svg class="a" style="left:503px;top:756px;" width="11" height="11" viewBox="0 0 11 11"><rect x="0" y="0.5" width="2" height="10" fill="#c8c8c8"/><path d="M11 0.5 V10.5 L3 5.5 Z" fill="#c8c8c8"/></svg>
<svg class="a" style="left:529px;top:757px;" width="15" height="9" viewBox="0 0 15 9"><path d="M7 0 V9 L0 4.5 Z M14.5 0 V9 L7.5 4.5 Z" fill="#c8c8c8"/></svg>
<svg class="a" style="left:554px;top:757px;" width="15" height="9" viewBox="0 0 15 9"><path d="M0.5 0 V9 L7.5 4.5 Z M8 0 V9 L15 4.5 Z" fill="#c8c8c8"/></svg>
<svg class="a" style="left:583px;top:756px;" width="11" height="11" viewBox="0 0 11 11"><path d="M0 0.5 V10.5 L8 5.5 Z" fill="#c8c8c8"/><rect x="9" y="0.5" width="2" height="10" fill="#c8c8c8"/></svg>
<svg class="a" style="left:609px;top:756px;" width="11" height="11" viewBox="0 0 11 11"><circle cx="5.5" cy="5.5" r="5" fill="#e8393a"/></svg>
<svg class="a" style="left:634px;top:754px;" width="15" height="14" viewBox="0 0 15 14"><path d="M1 6 V13 H14 V9" stroke="#c8c8c8" stroke-width="1.8" fill="none"/><path d="M4 10 Q4 5 9 5 V2 L13.5 6 L9 9.5 V7 Q6 7 4 10 Z" fill="#c8c8c8"/></svg>
<svg class="a" style="left:660px;top:755px;" width="21" height="12" viewBox="0 0 21 12"><path d="M1 6 L4.5 2.5 M1 6 L4.5 9.5 M20 6 L16.5 2.5 M20 6 L16.5 9.5 M7 1 V11 M11 1 V11 M11 6 H17 M4 6 H7" stroke="#c8c8c8" stroke-width="1.5" fill="none"/><path d="M11 2 L15 6 L11 10 Z" fill="#c8c8c8"/></svg>
<svg class="a" style="left:695px;top:753px;" width="19" height="16" viewBox="0 0 19 16"><circle cx="11" cy="7.5" r="4.3" fill="none" stroke="#c8c8c8" stroke-width="1.5"/><path d="M14 10.5 L17 13.5" stroke="#c8c8c8" stroke-width="1.9"/><path d="M8.8 7.5 H13.2 M11 5.3 V9.7" stroke="#c8c8c8" stroke-width="1.2"/><path d="M2 1 V15 M0 2.5 L2 0.5 L4 2.5 M0 13.5 L2 15.5 L4 13.5" stroke="#c8c8c8" stroke-width="1.2" fill="none"/></svg>
<svg class="a" style="left:721px;top:753px;" width="19" height="16" viewBox="0 0 19 16"><circle cx="11" cy="7.5" r="4.3" fill="none" stroke="#c8c8c8" stroke-width="1.5"/><path d="M14 10.5 L17 13.5" stroke="#c8c8c8" stroke-width="1.9"/><path d="M8.8 7.5 H13.2" stroke="#c8c8c8" stroke-width="1.2"/><path d="M2 1 V15 M0 2.5 L2 0.5 L4 2.5 M0 13.5 L2 15.5 L4 13.5" stroke="#c8c8c8" stroke-width="1.2" fill="none"/></svg>
<svg class="a" style="left:747px;top:753px;" width="19" height="16" viewBox="0 0 19 16"><circle cx="11" cy="7.5" r="4.3" fill="none" stroke="#c8c8c8" stroke-width="1.5"/><path d="M14 10.5 L17 13.5" stroke="#c8c8c8" stroke-width="1.9"/><path d="M8.8 7.5 H13.2 M11 5.3 V9.7" stroke="#c8c8c8" stroke-width="1.2"/><path d="M1 2 H18 M3 0 L1 2 L3 4 M16 0 L18 2 L16 4" stroke="#c8c8c8" stroke-width="1.2" fill="none"/></svg>
<svg class="a" style="left:774px;top:753px;" width="19" height="16" viewBox="0 0 19 16"><circle cx="11" cy="7.5" r="4.3" fill="none" stroke="#4a4a4a" stroke-width="1.5"/><path d="M14 10.5 L17 13.5" stroke="#4a4a4a" stroke-width="1.9"/><path d="M8.8 7.5 H13.2" stroke="#4a4a4a" stroke-width="1.2"/><path d="M1 2 H18 M3 0 L1 2 L3 4 M16 0 L18 2 L16 4" stroke="#4a4a4a" stroke-width="1.2" fill="none"/></svg>
<svg class="a" style="left:800px;top:753px;" width="19" height="16" viewBox="0 0 19 16"><circle cx="11" cy="7.5" r="4.3" fill="none" stroke="#c8c8c8" stroke-width="1.5"/><path d="M14 10.5 L17 13.5" stroke="#c8c8c8" stroke-width="1.9"/><path d="M8.8 7.5 H13.2" stroke="#c8c8c8" stroke-width="1.2"/><path d="M11 0 L9.5 2 H12.5 Z M11 15.5 L9.5 13.5 H12.5 Z M4 7.5 L6 6 V9 Z" fill="#c8c8c8"/></svg>
<svg class="a" style="left:827px;top:753px;" width="19" height="16" viewBox="0 0 19 16"><circle cx="11" cy="7.5" r="4.3" fill="none" stroke="#c8c8c8" stroke-width="1.5"/><path d="M14 10.5 L17 13.5" stroke="#c8c8c8" stroke-width="1.9"/><path d="M4 3 Q2 3 2 5 V6.5 L1 7.5 L2 8.5 V10 Q2 12 4 12" stroke="#c8c8c8" stroke-width="1.2" fill="none"/></svg>
<svg class="a" style="left:855px;top:753px;" width="19" height="16" viewBox="0 0 19 16"><circle cx="11" cy="7.5" r="4.3" fill="none" stroke="#c8c8c8" stroke-width="1.5"/><path d="M14 10.5 L17 13.5" stroke="#c8c8c8" stroke-width="1.9"/><path d="M1 3 Q3 3 3 5 V6.5 L4 7.5 L3 8.5 V10 Q3 12 1 12" stroke="#c8c8c8" stroke-width="1.2" fill="none"/></svg>
<svg class="a" style="left:881px;top:753px;" width="19" height="16" viewBox="0 0 19 16"><circle cx="11" cy="7.5" r="4.3" fill="none" stroke="#c8c8c8" stroke-width="1.5"/><path d="M14 10.5 L17 13.5" stroke="#c8c8c8" stroke-width="1.9"/><path d="M3 3 Q1 3 1 5 V6.5 L0 7.5 L1 8.5 V10 Q1 12 3 12 M4 3 Q6 3 6 5 V6.5 L7 7.5 L6 8.5 V10 Q6 12 4 12" stroke="#c8c8c8" stroke-width="1.2" fill="none"/></svg>
<svg class="a" style="left:907px;top:753px;" width="19" height="16" viewBox="0 0 19 16"><circle cx="11" cy="7.5" r="4.3" fill="none" stroke="#4a4a4a" stroke-width="1.5"/><path d="M14 10.5 L17 13.5" stroke="#4a4a4a" stroke-width="1.9"/><path d="M8.8 7.5 H13.2 M11 5.3 V9.7" stroke="#4a4a4a" stroke-width="1.2"/><path d="M2 1 V15" stroke="#4a4a4a" stroke-width="1.2"/></svg>
<div class="a" style="left:922px;top:745px;width:2px;height:34px;background:#2b6ab4;"></div>
<div class="a" style="left:927px;top:30px;width:738px;height:748px;background:#232323;"></div>
<div class="t" style="left:937px;top:38.03px;font-size:10px;color:#c6c6c6;-webkit-text-stroke:0.3px currentColor;transform:scaleX(0.9725);transform-origin:0 0;">Частотный анализ</div>
<svg class="a" style="left:1028px;top:40.5px;" width="8" height="7" viewBox="0 0 8 7"><g fill="#b8b8b8"><rect x="0" y="0" width="8" height="1.2"/><rect x="0" y="3" width="8" height="1.2"/><rect x="0" y="6" width="8" height="1.2"/></g></svg>
<div class="t" style="left:937px;top:66.03px;font-size:10px;color:#a0a0a0;transform:scaleX(0.9438);transform-origin:0 0;">Масштаб:</div>
<div class="a" style="left:983px;top:63px;width:117px;height:17px;background:#1c1c1c;border:1px solid #2b2b2b;border-radius:3px"></div>
<div class="t" style="left:989px;top:66.03px;font-size:10px;color:#d8d8d8;transform:scaleX(0.9976);transform-origin:0 0;">Линейный</div>
<svg class="a" style="left:1087px;top:68px;" width="9" height="6" viewBox="0 0 9 6"><path d="M1 1 L4.5 4.5 L8 1" stroke="#d0d0d0" stroke-width="1.5" fill="none"/></svg>
<svg class="a" style="left:1113px;top:64px;" width="15" height="15" viewBox="0 0 15 15"><rect x="1" y="1" width="9" height="8.5" fill="none" stroke="#c8c8c8" stroke-width="1.4"/><path d="M12.5 6 V13.5 H5.5 V11" stroke="#b0b0b0" stroke-width="1" stroke-dasharray="1.2 1" fill="none"/></svg>
<div class="t" style="left:1142px;top:66.03px;font-size:10px;color:#a0a0a0;transform:scaleX(0.9630);transform-origin:0 0;">Остановка кадра:</div>
<div class="a" style="left:1225px;top:62.5px;width:20px;height:17.5px;background:#161616;border:1px solid #303030;border-radius:3px"></div>
<div class="t" style="left:1232px;top:66.53px;font-size:10px;color:#3b8eea;transform:scaleX(1.0788);transform-origin:0 0;">1</div>
<div class="a" style="left:1225px;top:82px;width:20px;height:3px;background:#e0181a;"></div>
<div class="a" style="left:1248px;top:62.5px;width:20px;height:17.5px;background:#202020;border:1px solid #303030;border-radius:3px"></div>
<div class="t" style="left:1255px;top:66.53px;font-size:10px;color:#b4b4b4;transform:scaleX(1.0788);transform-origin:0 0;">2</div>
<div class="a" style="left:1248px;top:82px;width:20px;height:3px;background:#f08a10;"></div>
<div class="a" style="left:1271px;top:62.5px;width:20px;height:17.5px;background:#202020;border:1px solid #303030;border-radius:3px"></div>
<div class="t" style="left:1278px;top:66.53px;font-size:10px;color:#b4b4b4;transform:scaleX(1.0788);transform-origin:0 0;">3</div>
<div class="a" style="left:1271px;top:82px;width:20px;height:3px;background:#f0e010;"></div>
<div class="a" style="left:1294px;top:62.5px;width:20px;height:17.5px;background:#202020;border:1px solid #303030;border-radius:3px"></div>
<div class="t" style="left:1301px;top:66.53px;font-size:10px;color:#b4b4b4;transform:scaleX(1.0788);transform-origin:0 0;">4</div>
<div class="a" style="left:1294px;top:82px;width:20px;height:3px;background:#80e010;"></div>
<div class="a" style="left:1317px;top:62.5px;width:20px;height:17.5px;background:#202020;border:1px solid #303030;border-radius:3px"></div>
<div class="t" style="left:1324px;top:66.53px;font-size:10px;color:#b4b4b4;transform:scaleX(1.0788);transform-origin:0 0;">5</div>
<div class="a" style="left:1317px;top:82px;width:20px;height:3px;background:#40c040;"></div>
<div class="a" style="left:1340px;top:62.5px;width:20px;height:17.5px;background:#202020;border:1px solid #303030;border-radius:3px"></div>
<div class="t" style="left:1347px;top:66.53px;font-size:10px;color:#b4b4b4;transform:scaleX(1.0788);transform-origin:0 0;">6</div>
<div class="a" style="left:1340px;top:82px;width:20px;height:3px;background:#10d8e8;"></div>
<div class="a" style="left:1363px;top:62.5px;width:20px;height:17.5px;background:#202020;border:1px solid #303030;border-radius:3px"></div>
<div class="t" style="left:1370px;top:66.53px;font-size:10px;color:#b4b4b4;transform:scaleX(1.0788);transform-origin:0 0;">7</div>
<div class="a" style="left:1363px;top:82px;width:20px;height:3px;background:#2a8ee8;"></div>
<div class="a" style="left:1386px;top:62.5px;width:20px;height:17.5px;background:#202020;border:1px solid #303030;border-radius:3px"></div>
<div class="t" style="left:1393px;top:66.53px;font-size:10px;color:#b4b4b4;transform:scaleX(1.0788);transform-origin:0 0;">8</div>
<div class="a" style="left:1386px;top:82px;width:20px;height:3px;background:#e010e0;"></div>
<div class="a" style="left:937px;top:94px;width:718px;height:613px;background:#232323;border:1px solid #2e2e2e"></div>
<div class="a" style="left:941px;top:98px;width:677px;height:585px;background:#000000;"></div>
<svg class="a" style="left:941px;top:98px;" width="677" height="585" viewBox="0 0 677 585"><g fill="#033603"><rect x="3.5" y="0" width="1" height="582.7"/><rect x="64.3" y="0" width="1" height="582.7"/><rect x="125.0" y="0" width="1" height="582.7"/><rect x="185.8" y="0" width="1" height="582.7"/><rect x="246.5" y="0" width="1" height="582.7"/><rect x="307.3" y="0" width="1" height="582.7"/><rect x="368.1" y="0" width="1" height="582.7"/><rect x="428.8" y="0" width="1" height="582.7"/><rect x="489.6" y="0" width="1" height="582.7"/><rect x="550.3" y="0" width="1" height="582.7"/><rect x="611.1" y="0" width="1" height="582.7"/><rect x="671.9" y="0" width="1" height="582.7"/><rect x="0" y="9.5" width="674" height="1"/><rect x="0" y="36.8" width="674" height="1"/><rect x="0" y="64.0" width="674" height="1"/><rect x="0" y="91.3" width="674" height="1"/><rect x="0" y="118.6" width="674" height="1"/><rect x="0" y="145.8" width="674" height="1"/><rect x="0" y="173.1" width="674" height="1"/><rect x="0" y="200.4" width="674" height="1"/><rect x="0" y="227.7" width="674" height="1"/><rect x="0" y="254.9" width="674" height="1"/><rect x="0" y="282.2" width="674" height="1"/><rect x="0" y="309.5" width="674" height="1"/><rect x="0" y="336.7" width="674" height="1"/><rect x="0" y="364.0" width="674" height="1"/><rect x="0" y="391.3" width="674" height="1"/><rect x="0" y="418.5" width="674" height="1"/><rect x="0" y="445.8" width="674" height="1"/><rect x="0" y="473.1" width="674" height="1"/><rect x="0" y="500.4" width="674" height="1"/><rect x="0" y="527.6" width="674" height="1"/><rect x="0" y="554.9" width="674" height="1"/><rect x="0" y="582.2" width="674" height="1"/></g><path d="M4 582.7 L4.0 129.4 C4.5 127.0 5.8 116.1 7.0 116.3 C8.2 116.5 9.3 127.5 10.4 130.5 C11.5 133.5 12.2 125.8 13.2 132.8 C14.2 139.8 14.8 164.7 16.1 169.4 C17.5 174.1 19.3 155.8 20.7 159.1 C22.1 162.4 22.4 184.9 24.1 187.6 C25.8 190.3 28.2 167.1 29.9 173.9 C31.6 180.7 32.1 220.6 33.7 225.3 C35.3 230.0 37.6 201.2 39.0 200.2 C40.4 199.2 39.8 221.7 41.3 219.6 C42.8 217.5 45.3 191.7 47.4 188.8 C49.5 185.9 51.2 202.0 52.7 203.6 C54.2 205.2 54.1 195.0 55.7 197.9 C57.3 200.8 60.1 216.2 61.8 219.5 C63.5 222.8 64.1 213.3 65.3 216.0 C66.5 218.7 67.5 237.6 68.7 234.3 C69.9 231.0 70.6 198.0 72.1 197.8 C73.6 197.6 75.2 230.3 77.2 233.2 C79.2 236.1 81.2 214.0 83.1 213.8 C85.0 213.6 86.5 230.8 87.7 232.0 C88.9 233.2 89.1 220.7 90.0 220.5 C90.9 220.3 91.3 232.1 92.7 230.9 C94.1 229.7 96.3 214.2 97.7 213.8 C99.1 213.4 99.6 228.6 100.7 228.6 C101.8 228.6 102.3 209.7 103.7 213.8 C105.1 217.9 107.4 245.7 108.7 251.5 C110.0 257.3 110.1 245.0 111.0 245.8 C111.9 246.6 112.7 255.4 113.7 256.0 C114.7 256.6 115.6 248.6 116.7 249.2 C117.8 249.8 117.8 262.2 119.7 259.5 C121.6 256.8 124.5 240.5 127.0 234.3 C129.5 228.1 131.7 233.0 133.8 225.2 C135.9 217.4 136.9 190.3 138.9 190.9 C140.9 191.5 143.3 222.4 144.8 228.6 C146.3 234.8 146.2 222.7 147.5 225.2 C148.8 227.7 149.8 236.9 152.1 242.3 C154.4 247.7 157.8 255.6 160.1 255.1 C162.4 254.6 163.0 237.6 164.7 239.5 C166.4 241.3 167.8 262.9 169.4 265.3 C171.0 267.6 172.0 255.8 173.4 252.6 C174.8 249.4 176.1 246.4 177.4 247.6 C178.7 248.7 178.9 255.7 180.6 258.9 C182.3 262.1 185.0 268.2 187.0 265.3 C189.0 262.4 190.2 245.4 191.8 242.9 C193.4 240.4 194.6 251.3 195.8 251.5 C197.0 251.7 197.0 243.2 198.2 244.1 C199.4 245.0 200.6 255.3 202.2 256.4 C203.8 257.6 205.3 249.2 207.0 250.6 C208.7 252.0 210.3 263.8 211.8 264.4 C213.3 264.9 213.9 255.4 215.3 253.8 C216.7 252.2 218.1 253.5 219.8 255.4 C221.5 257.3 223.2 263.7 224.6 264.2 C226.0 264.8 226.2 256.1 227.8 258.7 C229.4 261.2 231.8 277.7 233.4 278.5 C235.0 279.3 234.6 263.0 236.6 263.1 C238.6 263.2 242.0 279.0 244.6 279.0 C247.2 279.0 248.6 263.7 251.0 263.0 C253.4 262.2 256.2 274.9 258.2 274.8 C260.2 274.8 260.3 263.4 262.2 262.8 C264.1 262.3 266.5 271.7 268.7 271.8 C270.9 272.0 272.6 263.1 274.3 263.6 C276.0 264.1 276.9 273.5 278.3 274.6 C279.7 275.7 280.9 270.1 282.3 269.6 C283.7 269.1 284.9 272.0 286.3 271.7 C287.7 271.5 288.9 269.4 290.3 268.3 C291.7 267.2 292.7 267.0 294.3 265.5 C295.9 263.9 297.4 259.2 299.1 259.8 C300.8 260.4 302.3 274.2 303.9 268.7 C305.5 263.3 306.5 229.0 308.2 229.5 C309.9 229.9 311.8 265.4 313.5 271.1 C315.2 276.8 315.9 262.4 317.5 261.2 C319.1 260.1 320.6 265.2 322.3 264.7 C324.0 264.3 325.5 257.5 327.2 258.7 C328.9 259.9 329.9 271.7 331.9 271.2 C333.9 270.8 335.7 256.7 338.2 256.1 C340.7 255.5 343.9 266.3 345.6 267.9 C347.3 269.5 346.7 262.6 347.8 264.9 C348.9 267.2 349.9 282.4 351.6 280.6 C353.3 278.9 355.5 256.0 357.0 255.1 C358.5 254.3 359.1 272.7 360.1 275.9 C361.1 279.0 361.6 272.3 362.7 272.6 C363.8 272.9 365.0 275.1 366.1 277.6 C367.2 280.1 367.9 286.2 369.0 286.3 C370.1 286.5 370.9 279.8 372.1 278.4 C373.3 276.9 374.4 277.6 375.6 278.4 C376.8 279.1 377.6 281.5 379.0 282.3 C380.4 283.1 382.1 280.6 383.3 282.9 C384.5 285.2 385.0 293.5 385.8 294.9 C386.6 296.3 386.9 290.1 387.6 290.9 C388.3 291.7 388.6 304.0 389.6 299.4 C390.6 294.7 391.8 271.6 393.0 265.1 C394.2 258.6 395.3 260.4 396.5 263.3 C397.7 266.2 398.6 276.8 399.5 281.4 C400.4 286.0 400.5 288.4 401.3 288.8 C402.1 289.2 403.0 283.8 403.8 283.4 C404.6 283.1 404.7 283.2 405.5 287.0 C406.3 290.9 407.4 302.4 408.5 304.9 C409.6 307.5 410.2 301.7 411.5 301.2 C412.8 300.8 414.4 303.6 415.8 302.4 C417.2 301.2 418.1 293.8 419.3 294.7 C420.5 295.5 421.3 312.7 422.7 307.0 C424.1 301.4 425.8 262.8 427.3 263.4 C428.8 263.9 429.9 303.5 431.3 310.2 C432.7 316.9 434.0 299.6 435.2 300.6 C436.4 301.5 437.0 312.4 438.1 315.5 C439.2 318.6 440.1 317.0 441.5 317.6 C442.9 318.3 444.4 321.5 445.8 319.1 C447.2 316.8 447.7 305.5 449.2 304.5 C450.7 303.5 452.5 316.3 454.0 313.5 C455.5 310.8 456.0 292.2 457.5 289.3 C459.0 286.3 460.8 289.4 462.1 297.1 C463.4 304.7 463.5 324.9 464.7 331.6 C465.9 338.4 467.8 335.5 469.0 334.6 C470.2 333.7 470.0 328.3 471.5 326.7 C473.0 325.1 475.5 324.6 477.5 325.7 C479.5 326.9 481.4 329.7 482.7 333.3 C484.0 336.8 483.8 344.4 484.9 345.2 C486.0 346.1 486.9 338.2 488.6 338.2 C490.3 338.2 492.5 348.0 494.1 345.2 C495.7 342.4 496.6 321.3 497.7 322.6 C498.8 323.9 499.2 345.7 500.4 352.3 C501.6 358.9 503.0 360.2 504.2 359.2 C505.4 358.3 506.0 347.3 507.0 347.2 C508.0 347.0 508.6 357.3 509.7 358.3 C510.8 359.4 511.7 355.2 512.8 353.2 C514.0 351.1 514.9 346.4 516.0 347.1 C517.1 347.8 517.8 352.7 518.8 357.1 C519.7 361.6 520.5 370.5 521.5 371.8 C522.5 373.1 523.3 366.9 524.2 364.5 C525.2 362.1 526.0 357.3 527.0 358.6 C528.0 359.9 528.8 368.1 529.8 371.7 C530.7 375.3 531.3 376.7 532.5 378.6 C533.7 380.4 535.1 379.8 536.6 381.8 C538.1 383.9 539.5 391.6 540.7 389.8 C541.9 387.9 542.5 377.9 543.5 371.6 C544.4 365.3 545.1 350.1 546.2 354.7 C547.3 359.3 548.3 388.8 549.8 397.0 C551.3 405.2 553.1 400.4 554.4 400.3 C555.7 400.2 556.2 396.2 557.2 396.4 C558.1 396.5 558.9 398.2 559.9 401.1 C560.9 403.9 561.7 410.5 562.7 412.1 C563.7 413.7 564.5 409.9 565.5 410.0 C566.4 410.0 567.2 411.1 568.2 412.5 C569.2 413.9 570.0 415.1 571.0 417.7 C571.9 420.2 572.6 425.9 573.7 426.6 C574.8 427.3 575.9 422.0 577.1 421.6 C578.3 421.2 579.4 423.1 580.5 424.3 C581.6 425.5 582.2 426.2 583.2 428.0 C584.2 429.9 585.0 432.8 586.0 434.5 C587.0 436.3 587.7 435.7 588.7 437.6 C589.7 439.4 590.5 443.8 591.5 444.7 C592.4 445.7 593.2 442.3 594.2 442.6 C595.2 442.9 596.0 445.3 597.0 446.6 C597.9 447.9 598.6 449.1 599.7 449.7 C600.8 450.2 601.9 449.3 603.2 449.8 C604.4 450.2 605.4 451.4 606.6 452.1 C607.8 452.8 608.8 452.0 610.0 453.8 C611.2 455.5 612.3 460.9 613.4 461.9 C614.5 462.9 615.2 459.3 616.2 459.3 C617.2 459.4 617.9 461.9 618.9 462.1 C619.9 462.3 620.7 459.9 621.7 460.6 C622.7 461.2 623.4 464.0 624.4 465.8 C625.4 467.7 626.2 470.2 627.2 470.8 C628.2 471.4 628.8 468.5 629.9 469.0 C631.0 469.6 631.9 472.7 633.1 473.8 C634.3 474.9 635.1 475.3 636.3 475.0 C637.5 474.8 638.4 471.5 639.5 472.3 C640.6 473.0 641.2 479.3 642.2 479.3 C643.2 479.3 644.0 472.8 645.0 472.3 C646.0 471.8 646.7 476.0 647.7 476.5 C648.7 477.1 649.5 475.7 650.5 475.4 C651.4 475.0 652.2 474.4 653.2 474.5 C654.2 474.6 655.0 475.9 656.0 475.9 C656.9 475.9 657.5 472.5 658.7 474.4 C659.9 476.3 661.6 484.0 662.8 486.5 C664.0 489.1 664.6 487.6 665.5 488.4 C666.5 489.3 667.3 489.2 668.3 491.0 C669.3 492.8 670.1 495.3 671.0 498.6 C672.0 501.8 673.3 507.2 673.8 509.1 L674 582.7 Z" fill="#5a7fc4"/><path d="M4.0 129.4 C4.5 127.0 5.8 116.1 7.0 116.3 C8.2 116.5 9.3 127.5 10.4 130.5 C11.5 133.5 12.2 125.8 13.2 132.8 C14.2 139.8 14.8 164.7 16.1 169.4 C17.5 174.1 19.3 155.8 20.7 159.1 C22.1 162.4 22.4 184.9 24.1 187.6 C25.8 190.3 28.2 167.1 29.9 173.9 C31.6 180.7 32.1 220.6 33.7 225.3 C35.3 230.0 37.6 201.2 39.0 200.2 C40.4 199.2 39.8 221.7 41.3 219.6 C42.8 217.5 45.3 191.7 47.4 188.8 C49.5 185.9 51.2 202.0 52.7 203.6 C54.2 205.2 54.1 195.0 55.7 197.9 C57.3 200.8 60.1 216.2 61.8 219.5 C63.5 222.8 64.1 213.3 65.3 216.0 C66.5 218.7 67.5 237.6 68.7 234.3 C69.9 231.0 70.6 198.0 72.1 197.8 C73.6 197.6 75.2 230.3 77.2 233.2 C79.2 236.1 81.2 214.0 83.1 213.8 C85.0 213.6 86.5 230.8 87.7 232.0 C88.9 233.2 89.1 220.7 90.0 220.5 C90.9 220.3 91.3 232.1 92.7 230.9 C94.1 229.7 96.3 214.2 97.7 213.8 C99.1 213.4 99.6 228.6 100.7 228.6 C101.8 228.6 102.3 209.7 103.7 213.8 C105.1 217.9 107.4 245.7 108.7 251.5 C110.0 257.3 110.1 245.0 111.0 245.8 C111.9 246.6 112.7 255.4 113.7 256.0 C114.7 256.6 115.6 248.6 116.7 249.2 C117.8 249.8 117.8 262.2 119.7 259.5 C121.6 256.8 124.5 240.5 127.0 234.3 C129.5 228.1 131.7 233.0 133.8 225.2 C135.9 217.4 136.9 190.3 138.9 190.9 C140.9 191.5 143.3 222.4 144.8 228.6 C146.3 234.8 146.2 222.7 147.5 225.2 C148.8 227.7 149.8 236.9 152.1 242.3 C154.4 247.7 157.8 255.6 160.1 255.1 C162.4 254.6 163.0 237.6 164.7 239.5 C166.4 241.3 167.8 262.9 169.4 265.3 C171.0 267.6 172.0 255.8 173.4 252.6 C174.8 249.4 176.1 246.4 177.4 247.6 C178.7 248.7 178.9 255.7 180.6 258.9 C182.3 262.1 185.0 268.2 187.0 265.3 C189.0 262.4 190.2 245.4 191.8 242.9 C193.4 240.4 194.6 251.3 195.8 251.5 C197.0 251.7 197.0 243.2 198.2 244.1 C199.4 245.0 200.6 255.3 202.2 256.4 C203.8 257.6 205.3 249.2 207.0 250.6 C208.7 252.0 210.3 263.8 211.8 264.4 C213.3 264.9 213.9 255.4 215.3 253.8 C216.7 252.2 218.1 253.5 219.8 255.4 C221.5 257.3 223.2 263.7 224.6 264.2 C226.0 264.8 226.2 256.1 227.8 258.7 C229.4 261.2 231.8 277.7 233.4 278.5 C235.0 279.3 234.6 263.0 236.6 263.1 C238.6 263.2 242.0 279.0 244.6 279.0 C247.2 279.0 248.6 263.7 251.0 263.0 C253.4 262.2 256.2 274.9 258.2 274.8 C260.2 274.8 260.3 263.4 262.2 262.8 C264.1 262.3 266.5 271.7 268.7 271.8 C270.9 272.0 272.6 263.1 274.3 263.6 C276.0 264.1 276.9 273.5 278.3 274.6 C279.7 275.7 280.9 270.1 282.3 269.6 C283.7 269.1 284.9 272.0 286.3 271.7 C287.7 271.5 288.9 269.4 290.3 268.3 C291.7 267.2 292.7 267.0 294.3 265.5 C295.9 263.9 297.4 259.2 299.1 259.8 C300.8 260.4 302.3 274.2 303.9 268.7 C305.5 263.3 306.5 229.0 308.2 229.5 C309.9 229.9 311.8 265.4 313.5 271.1 C315.2 276.8 315.9 262.4 317.5 261.2 C319.1 260.1 320.6 265.2 322.3 264.7 C324.0 264.3 325.5 257.5 327.2 258.7 C328.9 259.9 329.9 271.7 331.9 271.2 C333.9 270.8 335.7 256.7 338.2 256.1 C340.7 255.5 343.9 266.3 345.6 267.9 C347.3 269.5 346.7 262.6 347.8 264.9 C348.9 267.2 349.9 282.4 351.6 280.6 C353.3 278.9 355.5 256.0 357.0 255.1 C358.5 254.3 359.1 272.7 360.1 275.9 C361.1 279.0 361.6 272.3 362.7 272.6 C363.8 272.9 365.0 275.1 366.1 277.6 C367.2 280.1 367.9 286.2 369.0 286.3 C370.1 286.5 370.9 279.8 372.1 278.4 C373.3 276.9 374.4 277.6 375.6 278.4 C376.8 279.1 377.6 281.5 379.0 282.3 C380.4 283.1 382.1 280.6 383.3 282.9 C384.5 285.2 385.0 293.5 385.8 294.9 C386.6 296.3 386.9 290.1 387.6 290.9 C388.3 291.7 388.6 304.0 389.6 299.4 C390.6 294.7 391.8 271.6 393.0 265.1 C394.2 258.6 395.3 260.4 396.5 263.3 C397.7 266.2 398.6 276.8 399.5 281.4 C400.4 286.0 400.5 288.4 401.3 288.8 C402.1 289.2 403.0 283.8 403.8 283.4 C404.6 283.1 404.7 283.2 405.5 287.0 C406.3 290.9 407.4 302.4 408.5 304.9 C409.6 307.5 410.2 301.7 411.5 301.2 C412.8 300.8 414.4 303.6 415.8 302.4 C417.2 301.2 418.1 293.8 419.3 294.7 C420.5 295.5 421.3 312.7 422.7 307.0 C424.1 301.4 425.8 262.8 427.3 263.4 C428.8 263.9 429.9 303.5 431.3 310.2 C432.7 316.9 434.0 299.6 435.2 300.6 C436.4 301.5 437.0 312.4 438.1 315.5 C439.2 318.6 440.1 317.0 441.5 317.6 C442.9 318.3 444.4 321.5 445.8 319.1 C447.2 316.8 447.7 305.5 449.2 304.5 C450.7 303.5 452.5 316.3 454.0 313.5 C455.5 310.8 456.0 292.2 457.5 289.3 C459.0 286.3 460.8 289.4 462.1 297.1 C463.4 304.7 463.5 324.9 464.7 331.6 C465.9 338.4 467.8 335.5 469.0 334.6 C470.2 333.7 470.0 328.3 471.5 326.7 C473.0 325.1 475.5 324.6 477.5 325.7 C479.5 326.9 481.4 329.7 482.7 333.3 C484.0 336.8 483.8 344.4 484.9 345.2 C486.0 346.1 486.9 338.2 488.6 338.2 C490.3 338.2 492.5 348.0 494.1 345.2 C495.7 342.4 496.6 321.3 497.7 322.6 C498.8 323.9 499.2 345.7 500.4 352.3 C501.6 358.9 503.0 360.2 504.2 359.2 C505.4 358.3 506.0 347.3 507.0 347.2 C508.0 347.0 508.6 357.3 509.7 358.3 C510.8 359.4 511.7 355.2 512.8 353.2 C514.0 351.1 514.9 346.4 516.0 347.1 C517.1 347.8 517.8 352.7 518.8 357.1 C519.7 361.6 520.5 370.5 521.5 371.8 C522.5 373.1 523.3 366.9 524.2 364.5 C525.2 362.1 526.0 357.3 527.0 358.6 C528.0 359.9 528.8 368.1 529.8 371.7 C530.7 375.3 531.3 376.7 532.5 378.6 C533.7 380.4 535.1 379.8 536.6 381.8 C538.1 383.9 539.5 391.6 540.7 389.8 C541.9 387.9 542.5 377.9 543.5 371.6 C544.4 365.3 545.1 350.1 546.2 354.7 C547.3 359.3 548.3 388.8 549.8 397.0 C551.3 405.2 553.1 400.4 554.4 400.3 C555.7 400.2 556.2 396.2 557.2 396.4 C558.1 396.5 558.9 398.2 559.9 401.1 C560.9 403.9 561.7 410.5 562.7 412.1 C563.7 413.7 564.5 409.9 565.5 410.0 C566.4 410.0 567.2 411.1 568.2 412.5 C569.2 413.9 570.0 415.1 571.0 417.7 C571.9 420.2 572.6 425.9 573.7 426.6 C574.8 427.3 575.9 422.0 577.1 421.6 C578.3 421.2 579.4 423.1 580.5 424.3 C581.6 425.5 582.2 426.2 583.2 428.0 C584.2 429.9 585.0 432.8 586.0 434.5 C587.0 436.3 587.7 435.7 588.7 437.6 C589.7 439.4 590.5 443.8 591.5 444.7 C592.4 445.7 593.2 442.3 594.2 442.6 C595.2 442.9 596.0 445.3 597.0 446.6 C597.9 447.9 598.6 449.1 599.7 449.7 C600.8 450.2 601.9 449.3 603.2 449.8 C604.4 450.2 605.4 451.4 606.6 452.1 C607.8 452.8 608.8 452.0 610.0 453.8 C611.2 455.5 612.3 460.9 613.4 461.9 C614.5 462.9 615.2 459.3 616.2 459.3 C617.2 459.4 617.9 461.9 618.9 462.1 C619.9 462.3 620.7 459.9 621.7 460.6 C622.7 461.2 623.4 464.0 624.4 465.8 C625.4 467.7 626.2 470.2 627.2 470.8 C628.2 471.4 628.8 468.5 629.9 469.0 C631.0 469.6 631.9 472.7 633.1 473.8 C634.3 474.9 635.1 475.3 636.3 475.0 C637.5 474.8 638.4 471.5 639.5 472.3 C640.6 473.0 641.2 479.3 642.2 479.3 C643.2 479.3 644.0 472.8 645.0 472.3 C646.0 471.8 646.7 476.0 647.7 476.5 C648.7 477.1 649.5 475.7 650.5 475.4 C651.4 475.0 652.2 474.4 653.2 474.5 C654.2 474.6 655.0 475.9 656.0 475.9 C656.9 475.9 657.5 472.5 658.7 474.4 C659.9 476.3 661.6 484.0 662.8 486.5 C664.0 489.1 664.6 487.6 665.5 488.4 C666.5 489.3 667.3 489.2 668.3 491.0 C669.3 492.8 670.1 495.3 671.0 498.6 C672.0 501.8 673.3 507.2 673.8 509.1" fill="none" stroke="#4d8ee8" stroke-width="1.1"/><defs><clipPath id="tclip"><path d="M4 582.7 L4.0 130.6 C4.5 128.2 5.8 117.3 7.0 117.5 C8.2 117.7 9.3 128.7 10.4 131.7 C11.5 134.7 12.2 127.0 13.2 134.0 C14.2 141.0 14.8 165.9 16.1 170.6 C17.5 175.3 19.3 157.0 20.7 160.3 C22.1 163.6 22.4 186.1 24.1 188.8 C25.8 191.5 28.2 168.3 29.9 175.1 C31.6 181.9 32.1 221.8 33.7 226.5 C35.3 231.2 37.6 202.4 39.0 201.4 C40.4 200.4 39.8 222.9 41.3 220.8 C42.8 218.7 45.3 192.9 47.4 190.0 C49.5 187.1 51.2 203.2 52.7 204.8 C54.2 206.4 54.1 196.0 55.7 199.1 C57.3 202.2 60.1 218.5 61.8 222.0 C63.5 225.5 64.1 215.8 65.3 218.5 C66.5 221.2 67.5 240.1 68.7 236.8 C69.9 233.5 70.6 200.5 72.1 200.3 C73.6 200.1 75.2 232.8 77.2 235.7 C79.2 238.6 81.2 216.5 83.1 216.3 C85.0 216.1 86.5 233.3 87.7 234.5 C88.9 235.7 89.1 223.2 90.0 223.0 C90.9 222.8 91.3 234.6 92.7 233.4 C94.1 232.2 96.3 216.7 97.7 216.3 C99.1 215.9 99.6 231.1 100.7 231.1 C101.8 231.1 102.3 212.2 103.7 216.3 C105.1 220.4 107.4 248.2 108.7 254.0 C110.0 259.8 110.1 247.5 111.0 248.3 C111.9 249.1 112.7 257.9 113.7 258.5 C114.7 259.1 115.6 251.1 116.7 251.7 C117.8 252.3 117.8 264.7 119.7 262.0 C121.6 259.3 124.5 243.0 127.0 236.8 C129.5 230.6 131.7 235.5 133.8 227.7 C135.9 219.9 136.9 192.8 138.9 193.4 C140.9 194.0 143.3 224.9 144.8 231.1 C146.3 237.3 146.2 225.2 147.5 227.7 C148.8 230.2 149.8 238.8 152.1 244.8 C154.4 250.8 157.8 260.4 160.1 260.8 C162.4 261.2 163.0 245.7 164.7 247.1 C166.4 248.5 167.8 265.9 169.4 268.4 C171.0 270.9 172.0 263.2 173.4 261.2 C174.8 259.2 176.1 256.2 177.4 257.2 C178.7 258.2 178.9 263.9 180.6 266.8 C182.3 269.7 185.0 275.9 187.0 273.2 C189.0 270.5 190.2 254.9 191.8 251.6 C193.4 248.3 194.6 255.1 195.8 254.8 C197.0 254.5 197.0 249.1 198.2 250.0 C199.4 250.9 200.6 258.0 202.2 259.6 C203.8 261.2 205.3 256.8 207.0 258.8 C208.7 260.8 210.3 271.1 211.8 270.8 C213.3 270.5 213.9 258.9 215.3 257.2 C216.7 255.5 218.1 258.5 219.8 261.2 C221.5 263.9 223.2 271.7 224.6 272.4 C226.0 273.1 226.2 263.5 227.8 265.2 C229.4 266.9 231.8 280.7 233.4 282.0 C235.0 283.3 234.6 272.4 236.6 272.4 C238.6 272.4 242.0 282.1 244.6 282.0 C247.2 281.9 248.6 271.2 251.0 271.6 C253.4 272.0 256.2 284.5 258.2 284.4 C260.2 284.3 260.3 271.4 262.2 270.8 C264.1 270.2 266.5 281.3 268.7 281.2 C270.9 281.1 272.6 270.4 274.3 270.0 C276.0 269.6 276.9 277.8 278.3 278.8 C279.7 279.8 280.9 275.5 282.3 275.6 C283.7 275.7 284.9 279.5 286.3 279.6 C287.7 279.7 288.9 278.0 290.3 276.4 C291.7 274.8 292.7 272.1 294.3 270.8 C295.9 269.5 297.4 269.1 299.1 269.2 C300.8 269.3 302.3 277.6 303.9 271.6 C305.5 265.6 306.5 235.5 308.2 235.6 C309.9 235.7 311.8 267.4 313.5 272.4 C315.2 277.4 315.9 264.2 317.5 263.6 C319.1 263.0 320.6 269.8 322.3 269.2 C324.0 268.6 325.5 259.1 327.2 260.3 C328.9 261.5 329.9 275.7 331.9 275.7 C333.9 275.7 335.7 261.1 338.2 260.3 C340.7 259.5 343.9 270.3 345.6 271.4 C347.3 272.5 346.7 264.1 347.8 266.3 C348.9 268.5 349.9 284.8 351.6 283.4 C353.3 282.0 355.5 259.7 357.0 258.6 C358.5 257.5 359.1 274.5 360.1 277.4 C361.1 280.3 361.6 274.5 362.7 274.8 C363.8 275.1 365.0 276.3 366.1 279.1 C367.2 281.9 367.9 289.7 369.0 290.3 C370.1 290.9 370.9 284.0 372.1 282.6 C373.3 281.2 374.4 282.0 375.6 282.6 C376.8 283.2 377.6 285.4 379.0 286.0 C380.4 286.6 382.1 284.1 383.3 286.0 C384.5 287.9 385.0 294.9 385.8 296.3 C386.6 297.7 386.9 292.5 387.6 293.7 C388.3 294.9 388.6 307.6 389.6 303.1 C390.6 298.6 391.8 275.7 393.0 268.8 C394.2 261.9 395.3 262.1 396.5 264.6 C397.7 267.1 398.6 278.0 399.5 282.6 C400.4 287.2 400.5 289.4 401.3 290.3 C402.1 291.2 403.0 288.0 403.8 287.7 C404.6 287.4 404.7 285.1 405.5 288.6 C406.3 292.1 407.4 304.6 408.5 307.4 C409.6 310.2 410.2 304.2 411.5 304.0 C412.8 303.8 414.4 307.9 415.8 306.5 C417.2 305.1 418.1 295.8 419.3 296.3 C420.5 296.8 421.3 314.4 422.7 309.1 C424.1 303.8 425.8 266.6 427.3 267.1 C428.8 267.6 429.9 305.4 431.3 311.7 C432.7 318.0 434.0 301.4 435.2 302.3 C436.4 303.2 437.0 313.3 438.1 316.8 C439.2 320.3 440.1 321.2 441.5 322.0 C442.9 322.8 444.4 323.7 445.8 321.1 C447.2 318.5 447.7 308.3 449.2 307.4 C450.7 306.5 452.5 318.5 454.0 316.0 C455.5 313.5 456.0 296.5 457.5 293.7 C459.0 290.9 460.8 293.2 462.1 300.6 C463.4 308.0 463.5 328.2 464.7 334.8 C465.9 341.4 467.8 338.5 469.0 337.4 C470.2 336.3 470.0 330.2 471.5 328.8 C473.0 327.4 475.5 328.6 477.5 329.7 C479.5 330.8 481.4 331.4 482.7 334.8 C484.0 338.2 483.8 347.5 484.9 348.5 C486.0 349.5 486.9 340.6 488.6 340.4 C490.3 340.2 492.5 350.0 494.1 347.3 C495.7 344.6 496.6 324.1 497.7 325.3 C498.8 326.5 499.2 347.4 500.4 354.1 C501.6 360.8 503.0 363.4 504.2 362.4 C505.4 361.4 506.0 349.1 507.0 348.6 C508.0 348.1 508.6 358.5 509.7 359.6 C510.8 360.7 511.7 356.8 512.8 354.8 C514.0 352.8 514.9 347.4 516.0 348.6 C517.1 349.8 517.8 356.5 518.8 361.2 C519.7 365.9 520.5 373.5 521.5 374.7 C522.5 375.9 523.3 370.1 524.2 367.9 C525.2 365.7 526.0 361.4 527.0 362.4 C528.0 363.4 528.8 369.7 529.8 373.4 C530.7 377.1 531.3 380.9 532.5 382.9 C533.7 384.9 535.1 382.6 536.6 384.3 C538.1 386.0 539.5 394.3 540.7 392.5 C541.9 390.7 542.5 380.6 543.5 374.4 C544.4 368.3 545.1 352.5 546.2 358.2 C547.3 363.9 548.3 397.9 549.8 406.3 C551.3 414.7 553.1 404.9 554.4 404.9 C555.7 404.9 556.2 405.7 557.2 406.2 C558.1 406.7 558.9 405.6 559.9 407.6 C560.9 409.6 561.7 415.0 562.7 417.2 C563.7 419.4 564.5 419.1 565.5 420.1 C566.4 421.1 567.2 421.3 568.2 422.7 C569.2 424.1 570.0 426.0 571.0 427.8 C571.9 429.5 572.6 431.5 573.7 432.3 C574.8 433.1 575.9 431.9 577.1 432.1 C578.3 432.4 579.4 432.5 580.5 433.7 C581.6 434.9 582.2 437.2 583.2 439.0 C584.2 440.9 585.0 442.0 586.0 443.8 C587.0 445.5 587.7 447.4 588.7 448.8 C589.7 450.2 590.5 451.2 591.5 451.7 C592.4 452.2 593.2 451.0 594.2 451.8 C595.2 452.6 596.0 455.1 597.0 456.0 C597.9 457.0 598.6 456.8 599.7 457.0 C600.8 457.2 601.9 456.7 603.2 456.9 C604.4 457.2 605.4 457.1 606.6 458.4 C607.8 459.7 608.8 462.2 610.0 464.0 C611.2 465.7 612.3 467.2 613.4 468.0 C614.5 468.8 615.2 468.2 616.2 468.5 C617.2 468.8 617.9 469.6 618.9 469.7 C619.9 469.9 620.7 469.1 621.7 469.4 C622.7 469.7 623.4 470.5 624.4 471.4 C625.4 472.3 626.2 473.3 627.2 474.4 C628.2 475.6 628.8 477.0 629.9 477.6 C631.0 478.2 631.9 477.4 633.1 478.0 C634.3 478.6 635.1 480.3 636.3 481.0 C637.5 481.7 638.4 481.4 639.5 481.7 C640.6 482.0 641.2 482.5 642.2 482.7 C643.2 482.9 644.0 482.5 645.0 482.8 C646.0 483.1 646.7 484.4 647.7 484.4 C648.7 484.4 649.5 483.2 650.5 483.0 C651.4 482.8 652.2 483.8 653.2 483.1 C654.2 482.4 655.0 480.3 656.0 479.3 C656.9 478.4 657.5 475.4 658.7 477.6 C659.9 479.8 661.6 488.6 662.8 491.3 C664.0 494.0 664.6 491.9 665.5 492.6 C666.5 493.4 667.3 493.4 668.3 495.4 C669.3 497.4 670.1 500.8 671.0 503.8 C672.0 506.8 673.3 510.4 673.8 511.9 L674 582.7 Z"/></clipPath></defs><path d="M4 582.7 L4.0 130.6 C4.5 128.2 5.8 117.3 7.0 117.5 C8.2 117.7 9.3 128.7 10.4 131.7 C11.5 134.7 12.2 127.0 13.2 134.0 C14.2 141.0 14.8 165.9 16.1 170.6 C17.5 175.3 19.3 157.0 20.7 160.3 C22.1 163.6 22.4 186.1 24.1 188.8 C25.8 191.5 28.2 168.3 29.9 175.1 C31.6 181.9 32.1 221.8 33.7 226.5 C35.3 231.2 37.6 202.4 39.0 201.4 C40.4 200.4 39.8 222.9 41.3 220.8 C42.8 218.7 45.3 192.9 47.4 190.0 C49.5 187.1 51.2 203.2 52.7 204.8 C54.2 206.4 54.1 196.0 55.7 199.1 C57.3 202.2 60.1 218.5 61.8 222.0 C63.5 225.5 64.1 215.8 65.3 218.5 C66.5 221.2 67.5 240.1 68.7 236.8 C69.9 233.5 70.6 200.5 72.1 200.3 C73.6 200.1 75.2 232.8 77.2 235.7 C79.2 238.6 81.2 216.5 83.1 216.3 C85.0 216.1 86.5 233.3 87.7 234.5 C88.9 235.7 89.1 223.2 90.0 223.0 C90.9 222.8 91.3 234.6 92.7 233.4 C94.1 232.2 96.3 216.7 97.7 216.3 C99.1 215.9 99.6 231.1 100.7 231.1 C101.8 231.1 102.3 212.2 103.7 216.3 C105.1 220.4 107.4 248.2 108.7 254.0 C110.0 259.8 110.1 247.5 111.0 248.3 C111.9 249.1 112.7 257.9 113.7 258.5 C114.7 259.1 115.6 251.1 116.7 251.7 C117.8 252.3 117.8 264.7 119.7 262.0 C121.6 259.3 124.5 243.0 127.0 236.8 C129.5 230.6 131.7 235.5 133.8 227.7 C135.9 219.9 136.9 192.8 138.9 193.4 C140.9 194.0 143.3 224.9 144.8 231.1 C146.3 237.3 146.2 225.2 147.5 227.7 C148.8 230.2 149.8 238.8 152.1 244.8 C154.4 250.8 157.8 260.4 160.1 260.8 C162.4 261.2 163.0 245.7 164.7 247.1 C166.4 248.5 167.8 265.9 169.4 268.4 C171.0 270.9 172.0 263.2 173.4 261.2 C174.8 259.2 176.1 256.2 177.4 257.2 C178.7 258.2 178.9 263.9 180.6 266.8 C182.3 269.7 185.0 275.9 187.0 273.2 C189.0 270.5 190.2 254.9 191.8 251.6 C193.4 248.3 194.6 255.1 195.8 254.8 C197.0 254.5 197.0 249.1 198.2 250.0 C199.4 250.9 200.6 258.0 202.2 259.6 C203.8 261.2 205.3 256.8 207.0 258.8 C208.7 260.8 210.3 271.1 211.8 270.8 C213.3 270.5 213.9 258.9 215.3 257.2 C216.7 255.5 218.1 258.5 219.8 261.2 C221.5 263.9 223.2 271.7 224.6 272.4 C226.0 273.1 226.2 263.5 227.8 265.2 C229.4 266.9 231.8 280.7 233.4 282.0 C235.0 283.3 234.6 272.4 236.6 272.4 C238.6 272.4 242.0 282.1 244.6 282.0 C247.2 281.9 248.6 271.2 251.0 271.6 C253.4 272.0 256.2 284.5 258.2 284.4 C260.2 284.3 260.3 271.4 262.2 270.8 C264.1 270.2 266.5 281.3 268.7 281.2 C270.9 281.1 272.6 270.4 274.3 270.0 C276.0 269.6 276.9 277.8 278.3 278.8 C279.7 279.8 280.9 275.5 282.3 275.6 C283.7 275.7 284.9 279.5 286.3 279.6 C287.7 279.7 288.9 278.0 290.3 276.4 C291.7 274.8 292.7 272.1 294.3 270.8 C295.9 269.5 297.4 269.1 299.1 269.2 C300.8 269.3 302.3 277.6 303.9 271.6 C305.5 265.6 306.5 235.5 308.2 235.6 C309.9 235.7 311.8 267.4 313.5 272.4 C315.2 277.4 315.9 264.2 317.5 263.6 C319.1 263.0 320.6 269.8 322.3 269.2 C324.0 268.6 325.5 259.1 327.2 260.3 C328.9 261.5 329.9 275.7 331.9 275.7 C333.9 275.7 335.7 261.1 338.2 260.3 C340.7 259.5 343.9 270.3 345.6 271.4 C347.3 272.5 346.7 264.1 347.8 266.3 C348.9 268.5 349.9 284.8 351.6 283.4 C353.3 282.0 355.5 259.7 357.0 258.6 C358.5 257.5 359.1 274.5 360.1 277.4 C361.1 280.3 361.6 274.5 362.7 274.8 C363.8 275.1 365.0 276.3 366.1 279.1 C367.2 281.9 367.9 289.7 369.0 290.3 C370.1 290.9 370.9 284.0 372.1 282.6 C373.3 281.2 374.4 282.0 375.6 282.6 C376.8 283.2 377.6 285.4 379.0 286.0 C380.4 286.6 382.1 284.1 383.3 286.0 C384.5 287.9 385.0 294.9 385.8 296.3 C386.6 297.7 386.9 292.5 387.6 293.7 C388.3 294.9 388.6 307.6 389.6 303.1 C390.6 298.6 391.8 275.7 393.0 268.8 C394.2 261.9 395.3 262.1 396.5 264.6 C397.7 267.1 398.6 278.0 399.5 282.6 C400.4 287.2 400.5 289.4 401.3 290.3 C402.1 291.2 403.0 288.0 403.8 287.7 C404.6 287.4 404.7 285.1 405.5 288.6 C406.3 292.1 407.4 304.6 408.5 307.4 C409.6 310.2 410.2 304.2 411.5 304.0 C412.8 303.8 414.4 307.9 415.8 306.5 C417.2 305.1 418.1 295.8 419.3 296.3 C420.5 296.8 421.3 314.4 422.7 309.1 C424.1 303.8 425.8 266.6 427.3 267.1 C428.8 267.6 429.9 305.4 431.3 311.7 C432.7 318.0 434.0 301.4 435.2 302.3 C436.4 303.2 437.0 313.3 438.1 316.8 C439.2 320.3 440.1 321.2 441.5 322.0 C442.9 322.8 444.4 323.7 445.8 321.1 C447.2 318.5 447.7 308.3 449.2 307.4 C450.7 306.5 452.5 318.5 454.0 316.0 C455.5 313.5 456.0 296.5 457.5 293.7 C459.0 290.9 460.8 293.2 462.1 300.6 C463.4 308.0 463.5 328.2 464.7 334.8 C465.9 341.4 467.8 338.5 469.0 337.4 C470.2 336.3 470.0 330.2 471.5 328.8 C473.0 327.4 475.5 328.6 477.5 329.7 C479.5 330.8 481.4 331.4 482.7 334.8 C484.0 338.2 483.8 347.5 484.9 348.5 C486.0 349.5 486.9 340.6 488.6 340.4 C490.3 340.2 492.5 350.0 494.1 347.3 C495.7 344.6 496.6 324.1 497.7 325.3 C498.8 326.5 499.2 347.4 500.4 354.1 C501.6 360.8 503.0 363.4 504.2 362.4 C505.4 361.4 506.0 349.1 507.0 348.6 C508.0 348.1 508.6 358.5 509.7 359.6 C510.8 360.7 511.7 356.8 512.8 354.8 C514.0 352.8 514.9 347.4 516.0 348.6 C517.1 349.8 517.8 356.5 518.8 361.2 C519.7 365.9 520.5 373.5 521.5 374.7 C522.5 375.9 523.3 370.1 524.2 367.9 C525.2 365.7 526.0 361.4 527.0 362.4 C528.0 363.4 528.8 369.7 529.8 373.4 C530.7 377.1 531.3 380.9 532.5 382.9 C533.7 384.9 535.1 382.6 536.6 384.3 C538.1 386.0 539.5 394.3 540.7 392.5 C541.9 390.7 542.5 380.6 543.5 374.4 C544.4 368.3 545.1 352.5 546.2 358.2 C547.3 363.9 548.3 397.9 549.8 406.3 C551.3 414.7 553.1 404.9 554.4 404.9 C555.7 404.9 556.2 405.7 557.2 406.2 C558.1 406.7 558.9 405.6 559.9 407.6 C560.9 409.6 561.7 415.0 562.7 417.2 C563.7 419.4 564.5 419.1 565.5 420.1 C566.4 421.1 567.2 421.3 568.2 422.7 C569.2 424.1 570.0 426.0 571.0 427.8 C571.9 429.5 572.6 431.5 573.7 432.3 C574.8 433.1 575.9 431.9 577.1 432.1 C578.3 432.4 579.4 432.5 580.5 433.7 C581.6 434.9 582.2 437.2 583.2 439.0 C584.2 440.9 585.0 442.0 586.0 443.8 C587.0 445.5 587.7 447.4 588.7 448.8 C589.7 450.2 590.5 451.2 591.5 451.7 C592.4 452.2 593.2 451.0 594.2 451.8 C595.2 452.6 596.0 455.1 597.0 456.0 C597.9 457.0 598.6 456.8 599.7 457.0 C600.8 457.2 601.9 456.7 603.2 456.9 C604.4 457.2 605.4 457.1 606.6 458.4 C607.8 459.7 608.8 462.2 610.0 464.0 C611.2 465.7 612.3 467.2 613.4 468.0 C614.5 468.8 615.2 468.2 616.2 468.5 C617.2 468.8 617.9 469.6 618.9 469.7 C619.9 469.9 620.7 469.1 621.7 469.4 C622.7 469.7 623.4 470.5 624.4 471.4 C625.4 472.3 626.2 473.3 627.2 474.4 C628.2 475.6 628.8 477.0 629.9 477.6 C631.0 478.2 631.9 477.4 633.1 478.0 C634.3 478.6 635.1 480.3 636.3 481.0 C637.5 481.7 638.4 481.4 639.5 481.7 C640.6 482.0 641.2 482.5 642.2 482.7 C643.2 482.9 644.0 482.5 645.0 482.8 C646.0 483.1 646.7 484.4 647.7 484.4 C648.7 484.4 649.5 483.2 650.5 483.0 C651.4 482.8 652.2 483.8 653.2 483.1 C654.2 482.4 655.0 480.3 656.0 479.3 C656.9 478.4 657.5 475.4 658.7 477.6 C659.9 479.8 661.6 488.6 662.8 491.3 C664.0 494.0 664.6 491.9 665.5 492.6 C666.5 493.4 667.3 493.4 668.3 495.4 C669.3 497.4 670.1 500.8 671.0 503.8 C672.0 506.8 673.3 510.4 673.8 511.9 L674 582.7 Z" fill="#63a8ad"/><g fill="#67aca6" clip-path="url(#tclip)"><rect x="3.5" y="0" width="1" height="582.7"/><rect x="64.3" y="0" width="1" height="582.7"/><rect x="125.0" y="0" width="1" height="582.7"/><rect x="185.8" y="0" width="1" height="582.7"/><rect x="246.5" y="0" width="1" height="582.7"/><rect x="307.3" y="0" width="1" height="582.7"/><rect x="368.1" y="0" width="1" height="582.7"/><rect x="428.8" y="0" width="1" height="582.7"/><rect x="489.6" y="0" width="1" height="582.7"/><rect x="550.3" y="0" width="1" height="582.7"/><rect x="611.1" y="0" width="1" height="582.7"/><rect x="671.9" y="0" width="1" height="582.7"/><rect x="0" y="9.5" width="674" height="1"/><rect x="0" y="36.8" width="674" height="1"/><rect x="0" y="64.0" width="674" height="1"/><rect x="0" y="91.3" width="674" height="1"/><rect x="0" y="118.6" width="674" height="1"/><rect x="0" y="145.8" width="674" height="1"/><rect x="0" y="173.1" width="674" height="1"/><rect x="0" y="200.4" width="674" height="1"/><rect x="0" y="227.7" width="674" height="1"/><rect x="0" y="254.9" width="674" height="1"/><rect x="0" y="282.2" width="674" height="1"/><rect x="0" y="309.5" width="674" height="1"/><rect x="0" y="336.7" width="674" height="1"/><rect x="0" y="364.0" width="674" height="1"/><rect x="0" y="391.3" width="674" height="1"/><rect x="0" y="418.5" width="674" height="1"/><rect x="0" y="445.8" width="674" height="1"/><rect x="0" y="473.1" width="674" height="1"/><rect x="0" y="500.4" width="674" height="1"/><rect x="0" y="527.6" width="674" height="1"/><rect x="0" y="554.9" width="674" height="1"/><rect x="0" y="582.2" width="674" height="1"/></g><rect x="4" y="581.5" width="670" height="1.5" fill="#88dede"/><path d="M4.0 130.6 C4.5 128.2 5.8 117.3 7.0 117.5 C8.2 117.7 9.3 128.7 10.4 131.7 C11.5 134.7 12.2 127.0 13.2 134.0 C14.2 141.0 14.8 165.9 16.1 170.6 C17.5 175.3 19.3 157.0 20.7 160.3 C22.1 163.6 22.4 186.1 24.1 188.8 C25.8 191.5 28.2 168.3 29.9 175.1 C31.6 181.9 32.1 221.8 33.7 226.5 C35.3 231.2 37.6 202.4 39.0 201.4 C40.4 200.4 39.8 222.9 41.3 220.8 C42.8 218.7 45.3 192.9 47.4 190.0 C49.5 187.1 51.2 203.2 52.7 204.8 C54.2 206.4 54.1 196.0 55.7 199.1 C57.3 202.2 60.1 218.5 61.8 222.0 C63.5 225.5 64.1 215.8 65.3 218.5 C66.5 221.2 67.5 240.1 68.7 236.8 C69.9 233.5 70.6 200.5 72.1 200.3 C73.6 200.1 75.2 232.8 77.2 235.7 C79.2 238.6 81.2 216.5 83.1 216.3 C85.0 216.1 86.5 233.3 87.7 234.5 C88.9 235.7 89.1 223.2 90.0 223.0 C90.9 222.8 91.3 234.6 92.7 233.4 C94.1 232.2 96.3 216.7 97.7 216.3 C99.1 215.9 99.6 231.1 100.7 231.1 C101.8 231.1 102.3 212.2 103.7 216.3 C105.1 220.4 107.4 248.2 108.7 254.0 C110.0 259.8 110.1 247.5 111.0 248.3 C111.9 249.1 112.7 257.9 113.7 258.5 C114.7 259.1 115.6 251.1 116.7 251.7 C117.8 252.3 117.8 264.7 119.7 262.0 C121.6 259.3 124.5 243.0 127.0 236.8 C129.5 230.6 131.7 235.5 133.8 227.7 C135.9 219.9 136.9 192.8 138.9 193.4 C140.9 194.0 143.3 224.9 144.8 231.1 C146.3 237.3 146.2 225.2 147.5 227.7 C148.8 230.2 149.8 238.8 152.1 244.8 C154.4 250.8 157.8 260.4 160.1 260.8 C162.4 261.2 163.0 245.7 164.7 247.1 C166.4 248.5 167.8 265.9 169.4 268.4 C171.0 270.9 172.0 263.2 173.4 261.2 C174.8 259.2 176.1 256.2 177.4 257.2 C178.7 258.2 178.9 263.9 180.6 266.8 C182.3 269.7 185.0 275.9 187.0 273.2 C189.0 270.5 190.2 254.9 191.8 251.6 C193.4 248.3 194.6 255.1 195.8 254.8 C197.0 254.5 197.0 249.1 198.2 250.0 C199.4 250.9 200.6 258.0 202.2 259.6 C203.8 261.2 205.3 256.8 207.0 258.8 C208.7 260.8 210.3 271.1 211.8 270.8 C213.3 270.5 213.9 258.9 215.3 257.2 C216.7 255.5 218.1 258.5 219.8 261.2 C221.5 263.9 223.2 271.7 224.6 272.4 C226.0 273.1 226.2 263.5 227.8 265.2 C229.4 266.9 231.8 280.7 233.4 282.0 C235.0 283.3 234.6 272.4 236.6 272.4 C238.6 272.4 242.0 282.1 244.6 282.0 C247.2 281.9 248.6 271.2 251.0 271.6 C253.4 272.0 256.2 284.5 258.2 284.4 C260.2 284.3 260.3 271.4 262.2 270.8 C264.1 270.2 266.5 281.3 268.7 281.2 C270.9 281.1 272.6 270.4 274.3 270.0 C276.0 269.6 276.9 277.8 278.3 278.8 C279.7 279.8 280.9 275.5 282.3 275.6 C283.7 275.7 284.9 279.5 286.3 279.6 C287.7 279.7 288.9 278.0 290.3 276.4 C291.7 274.8 292.7 272.1 294.3 270.8 C295.9 269.5 297.4 269.1 299.1 269.2 C300.8 269.3 302.3 277.6 303.9 271.6 C305.5 265.6 306.5 235.5 308.2 235.6 C309.9 235.7 311.8 267.4 313.5 272.4 C315.2 277.4 315.9 264.2 317.5 263.6 C319.1 263.0 320.6 269.8 322.3 269.2 C324.0 268.6 325.5 259.1 327.2 260.3 C328.9 261.5 329.9 275.7 331.9 275.7 C333.9 275.7 335.7 261.1 338.2 260.3 C340.7 259.5 343.9 270.3 345.6 271.4 C347.3 272.5 346.7 264.1 347.8 266.3 C348.9 268.5 349.9 284.8 351.6 283.4 C353.3 282.0 355.5 259.7 357.0 258.6 C358.5 257.5 359.1 274.5 360.1 277.4 C361.1 280.3 361.6 274.5 362.7 274.8 C363.8 275.1 365.0 276.3 366.1 279.1 C367.2 281.9 367.9 289.7 369.0 290.3 C370.1 290.9 370.9 284.0 372.1 282.6 C373.3 281.2 374.4 282.0 375.6 282.6 C376.8 283.2 377.6 285.4 379.0 286.0 C380.4 286.6 382.1 284.1 383.3 286.0 C384.5 287.9 385.0 294.9 385.8 296.3 C386.6 297.7 386.9 292.5 387.6 293.7 C388.3 294.9 388.6 307.6 389.6 303.1 C390.6 298.6 391.8 275.7 393.0 268.8 C394.2 261.9 395.3 262.1 396.5 264.6 C397.7 267.1 398.6 278.0 399.5 282.6 C400.4 287.2 400.5 289.4 401.3 290.3 C402.1 291.2 403.0 288.0 403.8 287.7 C404.6 287.4 404.7 285.1 405.5 288.6 C406.3 292.1 407.4 304.6 408.5 307.4 C409.6 310.2 410.2 304.2 411.5 304.0 C412.8 303.8 414.4 307.9 415.8 306.5 C417.2 305.1 418.1 295.8 419.3 296.3 C420.5 296.8 421.3 314.4 422.7 309.1 C424.1 303.8 425.8 266.6 427.3 267.1 C428.8 267.6 429.9 305.4 431.3 311.7 C432.7 318.0 434.0 301.4 435.2 302.3 C436.4 303.2 437.0 313.3 438.1 316.8 C439.2 320.3 440.1 321.2 441.5 322.0 C442.9 322.8 444.4 323.7 445.8 321.1 C447.2 318.5 447.7 308.3 449.2 307.4 C450.7 306.5 452.5 318.5 454.0 316.0 C455.5 313.5 456.0 296.5 457.5 293.7 C459.0 290.9 460.8 293.2 462.1 300.6 C463.4 308.0 463.5 328.2 464.7 334.8 C465.9 341.4 467.8 338.5 469.0 337.4 C470.2 336.3 470.0 330.2 471.5 328.8 C473.0 327.4 475.5 328.6 477.5 329.7 C479.5 330.8 481.4 331.4 482.7 334.8 C484.0 338.2 483.8 347.5 484.9 348.5 C486.0 349.5 486.9 340.6 488.6 340.4 C490.3 340.2 492.5 350.0 494.1 347.3 C495.7 344.6 496.6 324.1 497.7 325.3 C498.8 326.5 499.2 347.4 500.4 354.1 C501.6 360.8 503.0 363.4 504.2 362.4 C505.4 361.4 506.0 349.1 507.0 348.6 C508.0 348.1 508.6 358.5 509.7 359.6 C510.8 360.7 511.7 356.8 512.8 354.8 C514.0 352.8 514.9 347.4 516.0 348.6 C517.1 349.8 517.8 356.5 518.8 361.2 C519.7 365.9 520.5 373.5 521.5 374.7 C522.5 375.9 523.3 370.1 524.2 367.9 C525.2 365.7 526.0 361.4 527.0 362.4 C528.0 363.4 528.8 369.7 529.8 373.4 C530.7 377.1 531.3 380.9 532.5 382.9 C533.7 384.9 535.1 382.6 536.6 384.3 C538.1 386.0 539.5 394.3 540.7 392.5 C541.9 390.7 542.5 380.6 543.5 374.4 C544.4 368.3 545.1 352.5 546.2 358.2 C547.3 363.9 548.3 397.9 549.8 406.3 C551.3 414.7 553.1 404.9 554.4 404.9 C555.7 404.9 556.2 405.7 557.2 406.2 C558.1 406.7 558.9 405.6 559.9 407.6 C560.9 409.6 561.7 415.0 562.7 417.2 C563.7 419.4 564.5 419.1 565.5 420.1 C566.4 421.1 567.2 421.3 568.2 422.7 C569.2 424.1 570.0 426.0 571.0 427.8 C571.9 429.5 572.6 431.5 573.7 432.3 C574.8 433.1 575.9 431.9 577.1 432.1 C578.3 432.4 579.4 432.5 580.5 433.7 C581.6 434.9 582.2 437.2 583.2 439.0 C584.2 440.9 585.0 442.0 586.0 443.8 C587.0 445.5 587.7 447.4 588.7 448.8 C589.7 450.2 590.5 451.2 591.5 451.7 C592.4 452.2 593.2 451.0 594.2 451.8 C595.2 452.6 596.0 455.1 597.0 456.0 C597.9 457.0 598.6 456.8 599.7 457.0 C600.8 457.2 601.9 456.7 603.2 456.9 C604.4 457.2 605.4 457.1 606.6 458.4 C607.8 459.7 608.8 462.2 610.0 464.0 C611.2 465.7 612.3 467.2 613.4 468.0 C614.5 468.8 615.2 468.2 616.2 468.5 C617.2 468.8 617.9 469.6 618.9 469.7 C619.9 469.9 620.7 469.1 621.7 469.4 C622.7 469.7 623.4 470.5 624.4 471.4 C625.4 472.3 626.2 473.3 627.2 474.4 C628.2 475.6 628.8 477.0 629.9 477.6 C631.0 478.2 631.9 477.4 633.1 478.0 C634.3 478.6 635.1 480.3 636.3 481.0 C637.5 481.7 638.4 481.4 639.5 481.7 C640.6 482.0 641.2 482.5 642.2 482.7 C643.2 482.9 644.0 482.5 645.0 482.8 C646.0 483.1 646.7 484.4 647.7 484.4 C648.7 484.4 649.5 483.2 650.5 483.0 C651.4 482.8 652.2 483.8 653.2 483.1 C654.2 482.4 655.0 480.3 656.0 479.3 C656.9 478.4 657.5 475.4 658.7 477.6 C659.9 479.8 661.6 488.6 662.8 491.3 C664.0 494.0 664.6 491.9 665.5 492.6 C666.5 493.4 667.3 493.4 668.3 495.4 C669.3 497.4 670.1 500.8 671.0 503.8 C672.0 506.8 673.3 510.4 673.8 511.9" fill="none" stroke="#ee2a22" stroke-width="1.3" stroke-linejoin="round"/></svg>
<div class="t" style="left:946px;top:102.53px;font-size:10px;color:#3a3a3a;transform:scaleX(0.9473);transform-origin:0 0;">Scanned Selection</div>
<svg class="a" style="left:1618px;top:97px;" width="12" height="588" viewBox="0 0 12 588"><rect x="0" y="0" width="1.5" height="587" fill="#b0b0b0"/><rect x="0" y="583.2" width="8" height="1" fill="#b0b0b0"/><rect x="0" y="577.7" width="4" height="1" fill="#b0b0b0"/><rect x="0" y="572.3" width="4" height="1" fill="#b0b0b0"/><rect x="0" y="566.8" width="4" height="1" fill="#b0b0b0"/><rect x="0" y="561.4" width="4" height="1" fill="#b0b0b0"/><rect x="0" y="555.9" width="8" height="1" fill="#b0b0b0"/><rect x="0" y="550.5" width="4" height="1" fill="#b0b0b0"/><rect x="0" y="545.0" width="4" height="1" fill="#b0b0b0"/><rect x="0" y="539.6" width="4" height="1" fill="#b0b0b0"/><rect x="0" y="534.1" width="4" height="1" fill="#b0b0b0"/><rect x="0" y="528.7" width="8" height="1" fill="#b0b0b0"/><rect x="0" y="523.2" width="4" height="1" fill="#b0b0b0"/><rect x="0" y="517.8" width="4" height="1" fill="#b0b0b0"/><rect x="0" y="512.3" width="4" height="1" fill="#b0b0b0"/><rect x="0" y="506.8" width="4" height="1" fill="#b0b0b0"/><rect x="0" y="501.4" width="8" height="1" fill="#b0b0b0"/><rect x="0" y="495.9" width="4" height="1" fill="#b0b0b0"/><rect x="0" y="490.5" width="4" height="1" fill="#b0b0b0"/><rect x="0" y="485.0" width="4" height="1" fill="#b0b0b0"/><rect x="0" y="479.6" width="4" height="1" fill="#b0b0b0"/><rect x="0" y="474.1" width="8" height="1" fill="#b0b0b0"/><rect x="0" y="468.7" width="4" height="1" fill="#b0b0b0"/><rect x="0" y="463.2" width="4" height="1" fill="#b0b0b0"/><rect x="0" y="457.8" width="4" height="1" fill="#b0b0b0"/><rect x="0" y="452.3" width="4" height="1" fill="#b0b0b0"/><rect x="0" y="446.9" width="8" height="1" fill="#b0b0b0"/><rect x="0" y="441.4" width="4" height="1" fill="#b0b0b0"/><rect x="0" y="435.9" width="4" height="1" fill="#b0b0b0"/><rect x="0" y="430.5" width="4" height="1" fill="#b0b0b0"/><rect x="0" y="425.0" width="4" height="1" fill="#b0b0b0"/><rect x="0" y="419.6" width="8" height="1" fill="#b0b0b0"/><rect x="0" y="414.1" width="4" height="1" fill="#b0b0b0"/><rect x="0" y="408.7" width="4" height="1" fill="#b0b0b0"/><rect x="0" y="403.2" width="4" height="1" fill="#b0b0b0"/><rect x="0" y="397.8" width="4" height="1" fill="#b0b0b0"/><rect x="0" y="392.3" width="8" height="1" fill="#b0b0b0"/><rect x="0" y="386.9" width="4" height="1" fill="#b0b0b0"/><rect x="0" y="381.4" width="4" height="1" fill="#b0b0b0"/><rect x="0" y="375.9" width="4" height="1" fill="#b0b0b0"/><rect x="0" y="370.5" width="4" height="1" fill="#b0b0b0"/><rect x="0" y="365.0" width="8" height="1" fill="#b0b0b0"/><rect x="0" y="359.6" width="4" height="1" fill="#b0b0b0"/><rect x="0" y="354.1" width="4" height="1" fill="#b0b0b0"/><rect x="0" y="348.7" width="4" height="1" fill="#b0b0b0"/><rect x="0" y="343.2" width="4" height="1" fill="#b0b0b0"/><rect x="0" y="337.8" width="8" height="1" fill="#b0b0b0"/><rect x="0" y="332.3" width="4" height="1" fill="#b0b0b0"/><rect x="0" y="326.9" width="4" height="1" fill="#b0b0b0"/><rect x="0" y="321.4" width="4" height="1" fill="#b0b0b0"/><rect x="0" y="316.0" width="4" height="1" fill="#b0b0b0"/><rect x="0" y="310.5" width="8" height="1" fill="#b0b0b0"/><rect x="0" y="305.0" width="4" height="1" fill="#b0b0b0"/><rect x="0" y="299.6" width="4" height="1" fill="#b0b0b0"/><rect x="0" y="294.1" width="4" height="1" fill="#b0b0b0"/><rect x="0" y="288.7" width="4" height="1" fill="#b0b0b0"/><rect x="0" y="283.2" width="8" height="1" fill="#b0b0b0"/><rect x="0" y="277.8" width="4" height="1" fill="#b0b0b0"/><rect x="0" y="272.3" width="4" height="1" fill="#b0b0b0"/><rect x="0" y="266.9" width="4" height="1" fill="#b0b0b0"/><rect x="0" y="261.4" width="4" height="1" fill="#b0b0b0"/><rect x="0" y="256.0" width="8" height="1" fill="#b0b0b0"/><rect x="0" y="250.5" width="4" height="1" fill="#b0b0b0"/><rect x="0" y="245.1" width="4" height="1" fill="#b0b0b0"/><rect x="0" y="239.6" width="4" height="1" fill="#b0b0b0"/><rect x="0" y="234.1" width="4" height="1" fill="#b0b0b0"/><rect x="0" y="228.7" width="8" height="1" fill="#b0b0b0"/><rect x="0" y="223.2" width="4" height="1" fill="#b0b0b0"/><rect x="0" y="217.8" width="4" height="1" fill="#b0b0b0"/><rect x="0" y="212.3" width="4" height="1" fill="#b0b0b0"/><rect x="0" y="206.9" width="4" height="1" fill="#b0b0b0"/><rect x="0" y="201.4" width="8" height="1" fill="#b0b0b0"/><rect x="0" y="196.0" width="4" height="1" fill="#b0b0b0"/><rect x="0" y="190.5" width="4" height="1" fill="#b0b0b0"/><rect x="0" y="185.1" width="4" height="1" fill="#b0b0b0"/><rect x="0" y="179.6" width="4" height="1" fill="#b0b0b0"/><rect x="0" y="174.2" width="8" height="1" fill="#b0b0b0"/><rect x="0" y="168.7" width="4" height="1" fill="#b0b0b0"/><rect x="0" y="163.2" width="4" height="1" fill="#b0b0b0"/><rect x="0" y="157.8" width="4" height="1" fill="#b0b0b0"/><rect x="0" y="152.3" width="4" height="1" fill="#b0b0b0"/><rect x="0" y="146.9" width="8" height="1" fill="#b0b0b0"/><rect x="0" y="141.4" width="4" height="1" fill="#b0b0b0"/><rect x="0" y="136.0" width="4" height="1" fill="#b0b0b0"/><rect x="0" y="130.5" width="4" height="1" fill="#b0b0b0"/><rect x="0" y="125.1" width="4" height="1" fill="#b0b0b0"/><rect x="0" y="119.6" width="8" height="1" fill="#b0b0b0"/><rect x="0" y="114.2" width="4" height="1" fill="#b0b0b0"/><rect x="0" y="108.7" width="4" height="1" fill="#b0b0b0"/><rect x="0" y="103.2" width="4" height="1" fill="#b0b0b0"/><rect x="0" y="97.8" width="4" height="1" fill="#b0b0b0"/><rect x="0" y="92.3" width="8" height="1" fill="#b0b0b0"/><rect x="0" y="86.9" width="4" height="1" fill="#b0b0b0"/><rect x="0" y="81.4" width="4" height="1" fill="#b0b0b0"/><rect x="0" y="76.0" width="4" height="1" fill="#b0b0b0"/><rect x="0" y="70.5" width="4" height="1" fill="#b0b0b0"/><rect x="0" y="65.1" width="8" height="1" fill="#b0b0b0"/><rect x="0" y="59.6" width="4" height="1" fill="#b0b0b0"/><rect x="0" y="54.2" width="4" height="1" fill="#b0b0b0"/><rect x="0" y="48.7" width="4" height="1" fill="#b0b0b0"/><rect x="0" y="43.3" width="4" height="1" fill="#b0b0b0"/><rect x="0" y="37.8" width="8" height="1" fill="#b0b0b0"/><rect x="0" y="32.3" width="4" height="1" fill="#b0b0b0"/><rect x="0" y="26.9" width="4" height="1" fill="#b0b0b0"/><rect x="0" y="21.4" width="4" height="1" fill="#b0b0b0"/><rect x="0" y="16.0" width="4" height="1" fill="#b0b0b0"/><rect x="0" y="10.5" width="8" height="1" fill="#b0b0b0"/></svg>
<svg class="a" style="left:940px;top:683.5px;" width="680" height="8" viewBox="0 0 680 8"><rect x="0" y="0" width="679" height="1.5" fill="#b0b0b0"/><rect x="4.5" y="0" width="1" height="6" fill="#b0b0b0"/><rect x="34.9" y="0" width="1" height="4" fill="#b0b0b0"/><rect x="65.3" y="0" width="1" height="6" fill="#b0b0b0"/><rect x="95.6" y="0" width="1" height="4" fill="#b0b0b0"/><rect x="126.0" y="0" width="1" height="6" fill="#b0b0b0"/><rect x="156.4" y="0" width="1" height="4" fill="#b0b0b0"/><rect x="186.8" y="0" width="1" height="6" fill="#b0b0b0"/><rect x="217.2" y="0" width="1" height="4" fill="#b0b0b0"/><rect x="247.5" y="0" width="1" height="6" fill="#b0b0b0"/><rect x="277.9" y="0" width="1" height="4" fill="#b0b0b0"/><rect x="308.3" y="0" width="1" height="6" fill="#b0b0b0"/><rect x="338.7" y="0" width="1" height="4" fill="#b0b0b0"/><rect x="369.1" y="0" width="1" height="6" fill="#b0b0b0"/><rect x="399.4" y="0" width="1" height="4" fill="#b0b0b0"/><rect x="429.8" y="0" width="1" height="6" fill="#b0b0b0"/><rect x="460.2" y="0" width="1" height="4" fill="#b0b0b0"/><rect x="490.6" y="0" width="1" height="6" fill="#b0b0b0"/><rect x="521.0" y="0" width="1" height="4" fill="#b0b0b0"/><rect x="551.3" y="0" width="1" height="6" fill="#b0b0b0"/><rect x="581.7" y="0" width="1" height="4" fill="#b0b0b0"/><rect x="612.1" y="0" width="1" height="6" fill="#b0b0b0"/><rect x="642.5" y="0" width="1" height="4" fill="#b0b0b0"/><rect x="672.9" y="0" width="1" height="6" fill="#b0b0b0"/></svg>
<div class="t" style="left:1629px;top:97.53px;font-size:10px;color:#a0a0a0;transform:scaleX(0.9679);transform-origin:0 0;">дБ</div>
<div class="t" style="left:1630px;top:130.64px;font-size:10px;color:#a0a0a0;transform:scaleX(0.9000);transform-origin:0 0;">0</div>
<div class="t" style="left:1630px;top:157.91px;font-size:10px;color:#a0a0a0;transform:scaleX(0.9000);transform-origin:0 0;">-5</div>
<div class="t" style="left:1630px;top:185.18px;font-size:10px;color:#a0a0a0;transform:scaleX(0.9000);transform-origin:0 0;">-10</div>
<div class="t" style="left:1630px;top:212.45px;font-size:10px;color:#a0a0a0;transform:scaleX(0.9000);transform-origin:0 0;">-15</div>
<div class="t" style="left:1630px;top:239.72px;font-size:10px;color:#a0a0a0;transform:scaleX(0.9000);transform-origin:0 0;">-20</div>
<div class="t" style="left:1630px;top:266.99px;font-size:10px;color:#a0a0a0;transform:scaleX(0.9000);transform-origin:0 0;">-25</div>
<div class="t" style="left:1630px;top:294.26px;font-size:10px;color:#a0a0a0;transform:scaleX(0.9000);transform-origin:0 0;">-30</div>
<div class="t" style="left:1630px;top:321.53px;font-size:10px;color:#a0a0a0;transform:scaleX(0.9000);transform-origin:0 0;">-35</div>
<div class="t" style="left:1630px;top:348.80px;font-size:10px;color:#a0a0a0;transform:scaleX(0.9000);transform-origin:0 0;">-40</div>
<div class="t" style="left:1630px;top:376.07px;font-size:10px;color:#a0a0a0;transform:scaleX(0.9000);transform-origin:0 0;">-45</div>
<div class="t" style="left:1630px;top:403.34px;font-size:10px;color:#a0a0a0;transform:scaleX(0.9000);transform-origin:0 0;">-50</div>
<div class="t" style="left:1630px;top:430.61px;font-size:10px;color:#a0a0a0;transform:scaleX(0.9000);transform-origin:0 0;">-55</div>
<div class="t" style="left:1630px;top:457.88px;font-size:10px;color:#a0a0a0;transform:scaleX(0.9000);transform-origin:0 0;">-60</div>
<div class="t" style="left:1630px;top:485.15px;font-size:10px;color:#a0a0a0;transform:scaleX(0.9000);transform-origin:0 0;">-65</div>
<div class="t" style="left:1630px;top:512.41px;font-size:10px;color:#a0a0a0;transform:scaleX(0.9000);transform-origin:0 0;">-70</div>
<div class="t" style="left:1630px;top:539.68px;font-size:10px;color:#a0a0a0;transform:scaleX(0.9000);transform-origin:0 0;">-75</div>
<div class="t" style="left:1630px;top:566.95px;font-size:10px;color:#a0a0a0;transform:scaleX(0.9000);transform-origin:0 0;">-80</div>
<div class="t" style="left:1630px;top:594.22px;font-size:10px;color:#a0a0a0;transform:scaleX(0.9000);transform-origin:0 0;">-85</div>
<div class="t" style="left:1630px;top:621.50px;font-size:10px;color:#a0a0a0;transform:scaleX(0.9000);transform-origin:0 0;">-90</div>
<div class="t" style="left:1630px;top:648.76px;font-size:10px;color:#a0a0a0;transform:scaleX(0.9000);transform-origin:0 0;">-95</div>
<div class="t" style="left:1630px;top:676.03px;font-size:10px;color:#a0a0a0;transform:scaleX(0.9000);transform-origin:0 0;">-100</div>
<div class="t" style="left:940px;top:694.03px;font-size:10px;color:#a0a0a0;transform:scaleX(0.8975);transform-origin:0 0;">Гц</div>
<div class="t" style="left:1001.11284375px;top:694.03px;font-size:10px;color:#a0a0a0;transform:scaleX(0.8800);transform-origin:0 0;">2k</div>
<div class="t" style="left:1061.87284375px;top:694.03px;font-size:10px;color:#a0a0a0;transform:scaleX(0.8800);transform-origin:0 0;">4k</div>
<div class="t" style="left:1122.63284375px;top:694.03px;font-size:10px;color:#a0a0a0;transform:scaleX(0.8800);transform-origin:0 0;">6k</div>
<div class="t" style="left:1183.3928437499999px;top:694.03px;font-size:10px;color:#a0a0a0;transform:scaleX(0.8800);transform-origin:0 0;">8k</div>
<div class="t" style="left:1241.7056874999998px;top:694.03px;font-size:10px;color:#a0a0a0;transform:scaleX(0.8800);transform-origin:0 0;">10k</div>
<div class="t" style="left:1302.4656875px;top:694.03px;font-size:10px;color:#a0a0a0;transform:scaleX(0.8800);transform-origin:0 0;">12k</div>
<div class="t" style="left:1363.2256874999998px;top:694.03px;font-size:10px;color:#a0a0a0;transform:scaleX(0.8800);transform-origin:0 0;">14k</div>
<div class="t" style="left:1423.9856875px;top:694.03px;font-size:10px;color:#a0a0a0;transform:scaleX(0.8800);transform-origin:0 0;">16k</div>
<div class="t" style="left:1484.7456875000003px;top:694.03px;font-size:10px;color:#a0a0a0;transform:scaleX(0.8800);transform-origin:0 0;">18k</div>
<div class="t" style="left:1545.5056875px;top:694.03px;font-size:10px;color:#a0a0a0;transform:scaleX(0.8800);transform-origin:0 0;">20k</div>
<div class="t" style="left:1606.2656875000002px;top:694.03px;font-size:10px;color:#a0a0a0;transform:scaleX(0.8800);transform-origin:0 0;">22k</div>
<div class="t" style="left:937px;top:737.53px;font-size:10px;color:#a0a0a0;transform:scaleX(0.9645);transform-origin:0 0;">Отображение:</div>
<div class="a" style="left:1004px;top:734px;width:75px;height:17px;background:#1c1c1c;border:1px solid #2b2b2b;border-radius:3px"></div>
<div class="t" style="left:1010px;top:737.53px;font-size:10px;color:#d8d8d8;transform:scaleX(0.9419);transform-origin:0 0;">Площадь</div>
<svg class="a" style="left:1066px;top:739px;" width="9" height="6" viewBox="0 0 9 6"><path d="M1 1 L4.5 4.5 L8 1" stroke="#d0d0d0" stroke-width="1.5" fill="none"/></svg>
<div class="t" style="left:1092px;top:737.53px;font-size:10px;color:#a0a0a0;transform:scaleX(0.9582);transform-origin:0 0;">Верхний канал:</div>
<div class="a" style="left:1164px;top:734px;width:102px;height:17px;background:#1c1c1c;border:1px solid #2b2b2b;border-radius:3px"></div>
<div class="t" style="left:1170px;top:737.53px;font-size:10px;color:#d8d8d8;transform:scaleX(0.9599);transform-origin:0 0;">Левый</div>
<svg class="a" style="left:1252px;top:739px;" width="9" height="6" viewBox="0 0 9 6"><path d="M1 1 L4.5 4.5 L8 1" stroke="#d0d0d0" stroke-width="1.5" fill="none"/></svg>
<div class="a" style="left:1277px;top:734px;width:102px;height:17px;background:#232323;border:1.5px solid #9a9a9a;border-radius:9px"></div>
<div class="t" style="left:1286px;top:737.53px;font-size:10px;color:#a8a8a8;transform:scaleX(0.9543);transform-origin:0 0;">Анализ выделения</div>
<svg class="a" style="left:936px;top:759px;" width="6" height="9" viewBox="0 0 6 9"><path d="M1 1 L4.5 4.5 L1 8" stroke="#d0d0d0" stroke-width="1.4" fill="none"/></svg>
<div class="t" style="left:953px;top:759.03px;font-size:10px;color:#d4d4d4;transform:scaleX(1.0003);transform-origin:0 0;-webkit-text-stroke:0.35px #d4d4d4;">Дополнительно</div>
<div class="a" style="left:1668px;top:30px;width:32px;height:748px;background:#232323;"></div>
<div class="a" style="left:1669px;top:56px;width:30px;height:1.5px;background:#333333;"></div>
<div class="a" style="left:1669px;top:83px;width:30px;height:1.5px;background:#333333;"></div>
<div class="a" style="left:1669px;top:114px;width:30px;height:1.5px;background:#333333;"></div>
<div class="a" style="left:1669px;top:142px;width:30px;height:1.5px;background:#333333;"></div>
<div class="t" style="left:1678px;top:37.53px;font-size:10px;color:#c8d8f0;font-weight:bold;transform:scaleX(0.5997);transform-origin:0 0;">E</div>
<div class="a" style="left:1681px;top:33px;width:1px;height:17px;background:#3a3a3a;"></div>
<div class="t" style="left:1677px;top:66.03px;font-size:10px;color:#d0d0d0;font-weight:bold;font-style:italic;">No Sele</div>
<div class="t" style="left:1677px;top:92.53px;font-size:10px;color:#555555;">Presets</div>
<div class="a" style="left:1669px;top:767px;width:30px;height:11px;background:#1f1f1f;"></div>
<div class="a" style="left:289px;top:782px;width:1085px;height:90px;background:#232323;"></div>
<div class="t" style="left:299px;top:789.53px;font-size:10px;color:#c6c6c6;-webkit-text-stroke:0.3px currentColor;transform:scaleX(1.0165);transform-origin:0 0;">Уровни</div>
<svg class="a" style="left:341px;top:792px;" width="8" height="7" viewBox="0 0 8 7"><g fill="#b8b8b8"><rect x="0" y="0" width="8" height="1.2"/><rect x="0" y="3" width="8" height="1.2"/><rect x="0" y="6" width="8" height="1.2"/></g></svg>
<div class="a" style="left:293px;top:810px;width:1076px;height:44px;background:#1d1d1d;border:1px solid #050505"></div>
<div class="a" style="left:295.5px;top:811px;width:1.6px;height:42px;background:#e8e010;"></div>
<div class="a" style="left:295px;top:831px;width:2px;height:1px;background:#1d1d1d;"></div>
<div class="a" style="left:1360px;top:811px;width:1px;height:42px;background:#050505;"></div>
<div class="a" style="left:1361px;top:831px;width:8px;height:1px;background:#050505;"></div>
<svg class="a" style="left:293px;top:854px;" width="1076" height="5" viewBox="0 0 1076 5"><rect x="2.5" y="0" width="1" height="4" fill="#9a9a9a"/><rect x="20.2" y="0.5" width="1.2" height="1.5" fill="#7a7a7a"/><rect x="37.9" y="0.5" width="1.2" height="1.5" fill="#7a7a7a"/><rect x="55.6" y="0" width="1" height="4" fill="#9a9a9a"/><rect x="73.4" y="0.5" width="1.2" height="1.5" fill="#7a7a7a"/><rect x="91.1" y="0.5" width="1.2" height="1.5" fill="#7a7a7a"/><rect x="108.8" y="0" width="1" height="4" fill="#9a9a9a"/><rect x="126.5" y="0.5" width="1.2" height="1.5" fill="#7a7a7a"/><rect x="144.2" y="0.5" width="1.2" height="1.5" fill="#7a7a7a"/><rect x="161.9" y="0" width="1" height="4" fill="#9a9a9a"/><rect x="179.7" y="0.5" width="1.2" height="1.5" fill="#7a7a7a"/><rect x="197.4" y="0.5" width="1.2" height="1.5" fill="#7a7a7a"/><rect x="215.1" y="0" width="1" height="4" fill="#9a9a9a"/><rect x="232.8" y="0.5" width="1.2" height="1.5" fill="#7a7a7a"/><rect x="250.5" y="0.5" width="1.2" height="1.5" fill="#7a7a7a"/><rect x="268.2" y="0" width="1" height="4" fill="#9a9a9a"/><rect x="286.0" y="0.5" width="1.2" height="1.5" fill="#7a7a7a"/><rect x="303.7" y="0.5" width="1.2" height="1.5" fill="#7a7a7a"/><rect x="321.4" y="0" width="1" height="4" fill="#9a9a9a"/><rect x="339.1" y="0.5" width="1.2" height="1.5" fill="#7a7a7a"/><rect x="356.8" y="0.5" width="1.2" height="1.5" fill="#7a7a7a"/><rect x="374.5" y="0" width="1" height="4" fill="#9a9a9a"/><rect x="392.3" y="0.5" width="1.2" height="1.5" fill="#7a7a7a"/><rect x="410.0" y="0.5" width="1.2" height="1.5" fill="#7a7a7a"/><rect x="427.7" y="0" width="1" height="4" fill="#9a9a9a"/><rect x="445.4" y="0.5" width="1.2" height="1.5" fill="#7a7a7a"/><rect x="463.1" y="0.5" width="1.2" height="1.5" fill="#7a7a7a"/><rect x="480.8" y="0" width="1" height="4" fill="#9a9a9a"/><rect x="498.6" y="0.5" width="1.2" height="1.5" fill="#7a7a7a"/><rect x="516.3" y="0.5" width="1.2" height="1.5" fill="#7a7a7a"/><rect x="534.0" y="0" width="1" height="4" fill="#9a9a9a"/><rect x="551.7" y="0.5" width="1.2" height="1.5" fill="#7a7a7a"/><rect x="569.4" y="0.5" width="1.2" height="1.5" fill="#7a7a7a"/><rect x="587.1" y="0" width="1" height="4" fill="#9a9a9a"/><rect x="604.9" y="0.5" width="1.2" height="1.5" fill="#7a7a7a"/><rect x="622.6" y="0.5" width="1.2" height="1.5" fill="#7a7a7a"/><rect x="640.3" y="0" width="1" height="4" fill="#9a9a9a"/><rect x="658.0" y="0.5" width="1.2" height="1.5" fill="#7a7a7a"/><rect x="675.7" y="0.5" width="1.2" height="1.5" fill="#7a7a7a"/><rect x="693.4" y="0" width="1" height="4" fill="#9a9a9a"/><rect x="711.2" y="0.5" width="1.2" height="1.5" fill="#7a7a7a"/><rect x="728.9" y="0.5" width="1.2" height="1.5" fill="#7a7a7a"/><rect x="746.6" y="0" width="1" height="4" fill="#9a9a9a"/><rect x="764.3" y="0.5" width="1.2" height="1.5" fill="#7a7a7a"/><rect x="782.0" y="0.5" width="1.2" height="1.5" fill="#7a7a7a"/><rect x="799.8" y="0" width="1" height="4" fill="#9a9a9a"/><rect x="817.5" y="0.5" width="1.2" height="1.5" fill="#7a7a7a"/><rect x="835.2" y="0.5" width="1.2" height="1.5" fill="#7a7a7a"/><rect x="852.9" y="0" width="1" height="4" fill="#9a9a9a"/><rect x="870.6" y="0.5" width="1.2" height="1.5" fill="#7a7a7a"/><rect x="888.3" y="0.5" width="1.2" height="1.5" fill="#7a7a7a"/><rect x="906.0" y="0" width="1" height="4" fill="#9a9a9a"/><rect x="923.8" y="0.5" width="1.2" height="1.5" fill="#7a7a7a"/><rect x="941.5" y="0.5" width="1.2" height="1.5" fill="#7a7a7a"/><rect x="959.2" y="0" width="1" height="4" fill="#9a9a9a"/><rect x="976.9" y="0.5" width="1.2" height="1.5" fill="#7a7a7a"/><rect x="994.6" y="0.5" width="1.2" height="1.5" fill="#7a7a7a"/><rect x="1012.3" y="0" width="1" height="4" fill="#9a9a9a"/><rect x="1030.1" y="0.5" width="1.2" height="1.5" fill="#7a7a7a"/><rect x="1047.8" y="0.5" width="1.2" height="1.5" fill="#7a7a7a"/><rect x="1065.5" y="0" width="1" height="4" fill="#9a9a9a"/></svg>
<div class="t" style="left:293px;top:860.38px;font-size:9px;color:#8a8a8a;transform:scaleX(0.9084);transform-origin:0 0;">dB</div>
<div class="t" style="left:343.16608281249995px;top:860.38px;font-size:9px;color:#8a8a8a;transform:scaleX(0.9200);transform-origin:0 0;">-57</div>
<div class="t" style="left:396.31608281249993px;top:860.38px;font-size:9px;color:#8a8a8a;transform:scaleX(0.9200);transform-origin:0 0;">-54</div>
<div class="t" style="left:449.46608281249996px;top:860.38px;font-size:9px;color:#8a8a8a;transform:scaleX(0.9200);transform-origin:0 0;">-51</div>
<div class="t" style="left:502.61608281249994px;top:860.38px;font-size:9px;color:#8a8a8a;transform:scaleX(0.9200);transform-origin:0 0;">-48</div>
<div class="t" style="left:555.7660828125px;top:860.38px;font-size:9px;color:#8a8a8a;transform:scaleX(0.9200);transform-origin:0 0;">-45</div>
<div class="t" style="left:608.9160828125px;top:860.38px;font-size:9px;color:#8a8a8a;transform:scaleX(0.9200);transform-origin:0 0;">-42</div>
<div class="t" style="left:662.0660828125px;top:860.38px;font-size:9px;color:#8a8a8a;transform:scaleX(0.9200);transform-origin:0 0;">-39</div>
<div class="t" style="left:715.2160828125px;top:860.38px;font-size:9px;color:#8a8a8a;transform:scaleX(0.9200);transform-origin:0 0;">-36</div>
<div class="t" style="left:768.3660828124999px;top:860.38px;font-size:9px;color:#8a8a8a;transform:scaleX(0.9200);transform-origin:0 0;">-33</div>
<div class="t" style="left:821.5160828125px;top:860.38px;font-size:9px;color:#8a8a8a;transform:scaleX(0.9200);transform-origin:0 0;">-30</div>
<div class="t" style="left:874.6660828125px;top:860.38px;font-size:9px;color:#8a8a8a;transform:scaleX(0.9200);transform-origin:0 0;">-27</div>
<div class="t" style="left:927.8160828125px;top:860.38px;font-size:9px;color:#8a8a8a;transform:scaleX(0.9200);transform-origin:0 0;">-24</div>
<div class="t" style="left:980.9660828125px;top:860.38px;font-size:9px;color:#8a8a8a;transform:scaleX(0.9200);transform-origin:0 0;">-21</div>
<div class="t" style="left:1034.1160828124998px;top:860.38px;font-size:9px;color:#8a8a8a;transform:scaleX(0.9200);transform-origin:0 0;">-18</div>
<div class="t" style="left:1087.2660828125px;top:860.38px;font-size:9px;color:#8a8a8a;transform:scaleX(0.9200);transform-origin:0 0;">-15</div>
<div class="t" style="left:1140.4160828124998px;top:860.38px;font-size:9px;color:#8a8a8a;transform:scaleX(0.9200);transform-origin:0 0;">-12</div>
<div class="t" style="left:1195.868634375px;top:860.38px;font-size:9px;color:#8a8a8a;transform:scaleX(0.9200);transform-origin:0 0;">-9</div>
<div class="t" style="left:1249.018634375px;top:860.38px;font-size:9px;color:#8a8a8a;transform:scaleX(0.9200);transform-origin:0 0;">-6</div>
<div class="t" style="left:1302.168634375px;top:860.38px;font-size:9px;color:#8a8a8a;transform:scaleX(0.9200);transform-origin:0 0;">-3</div>
<div class="t" style="left:1356.6974484375px;top:860.38px;font-size:9px;color:#8a8a8a;transform:scaleX(0.9200);transform-origin:0 0;">0</div>
<div class="a" style="left:1378px;top:782px;width:322px;height:90px;background:#232323;"></div>
<div class="t" style="left:1388px;top:789.53px;font-size:10px;color:#c6c6c6;-webkit-text-stroke:0.3px currentColor;transform:scaleX(0.9845);transform-origin:0 0;">Выбор/Видимое</div>
<svg class="a" style="left:1470px;top:792px;" width="8" height="7" viewBox="0 0 8 7"><g fill="#b8b8b8"><rect x="0" y="0" width="8" height="1.2"/><rect x="0" y="3" width="8" height="1.2"/><rect x="0" y="6" width="8" height="1.2"/></g></svg>
<div class="t" style="left:1459px;top:813.03px;font-size:10px;color:#a0a0a0;transform:scaleX(0.9470);transform-origin:0 0;">Начало</div>
<div class="t" style="left:1522px;top:813.03px;font-size:10px;color:#a0a0a0;transform:scaleX(1.0284);transform-origin:0 0;">Конец</div>
<div class="t" style="left:1585px;top:813.03px;font-size:10px;color:#a0a0a0;transform:scaleX(0.9894);transform-origin:0 0;">Продолжительность</div>
<div class="t" style="left:1388px;top:832.53px;font-size:10px;color:#a0a0a0;transform:scaleX(0.9436);transform-origin:0 0;">Выделение</div>
<div class="t" style="left:1388px;top:852.03px;font-size:10px;color:#a0a0a0;transform:scaleX(0.9949);transform-origin:0 0;">Вид</div>
<div class="t" style="left:1461px;top:833.03px;font-size:10px;color:#3b8eea;transform:scaleX(0.9377);transform-origin:0 0;">4:32.222</div>
<div class="t" style="left:1461px;top:852.53px;font-size:10px;color:#3b8eea;transform:scaleX(0.9377);transform-origin:0 0;">0:00.000</div>
<div class="t" style="left:1523px;top:833.03px;font-size:10px;color:#3b8eea;transform:scaleX(0.9377);transform-origin:0 0;">4:40.745</div>
<div class="t" style="left:1523px;top:852.53px;font-size:10px;color:#3b8eea;transform:scaleX(0.9377);transform-origin:0 0;">5:42.408</div>
<div class="t" style="left:1586px;top:833.03px;font-size:10px;color:#3b8eea;transform:scaleX(0.9377);transform-origin:0 0;">0:08.522</div>
<div class="t" style="left:1586px;top:852.53px;font-size:10px;color:#3b8eea;transform:scaleX(0.9377);transform-origin:0 0;">5:42.408</div>
</body></html>
